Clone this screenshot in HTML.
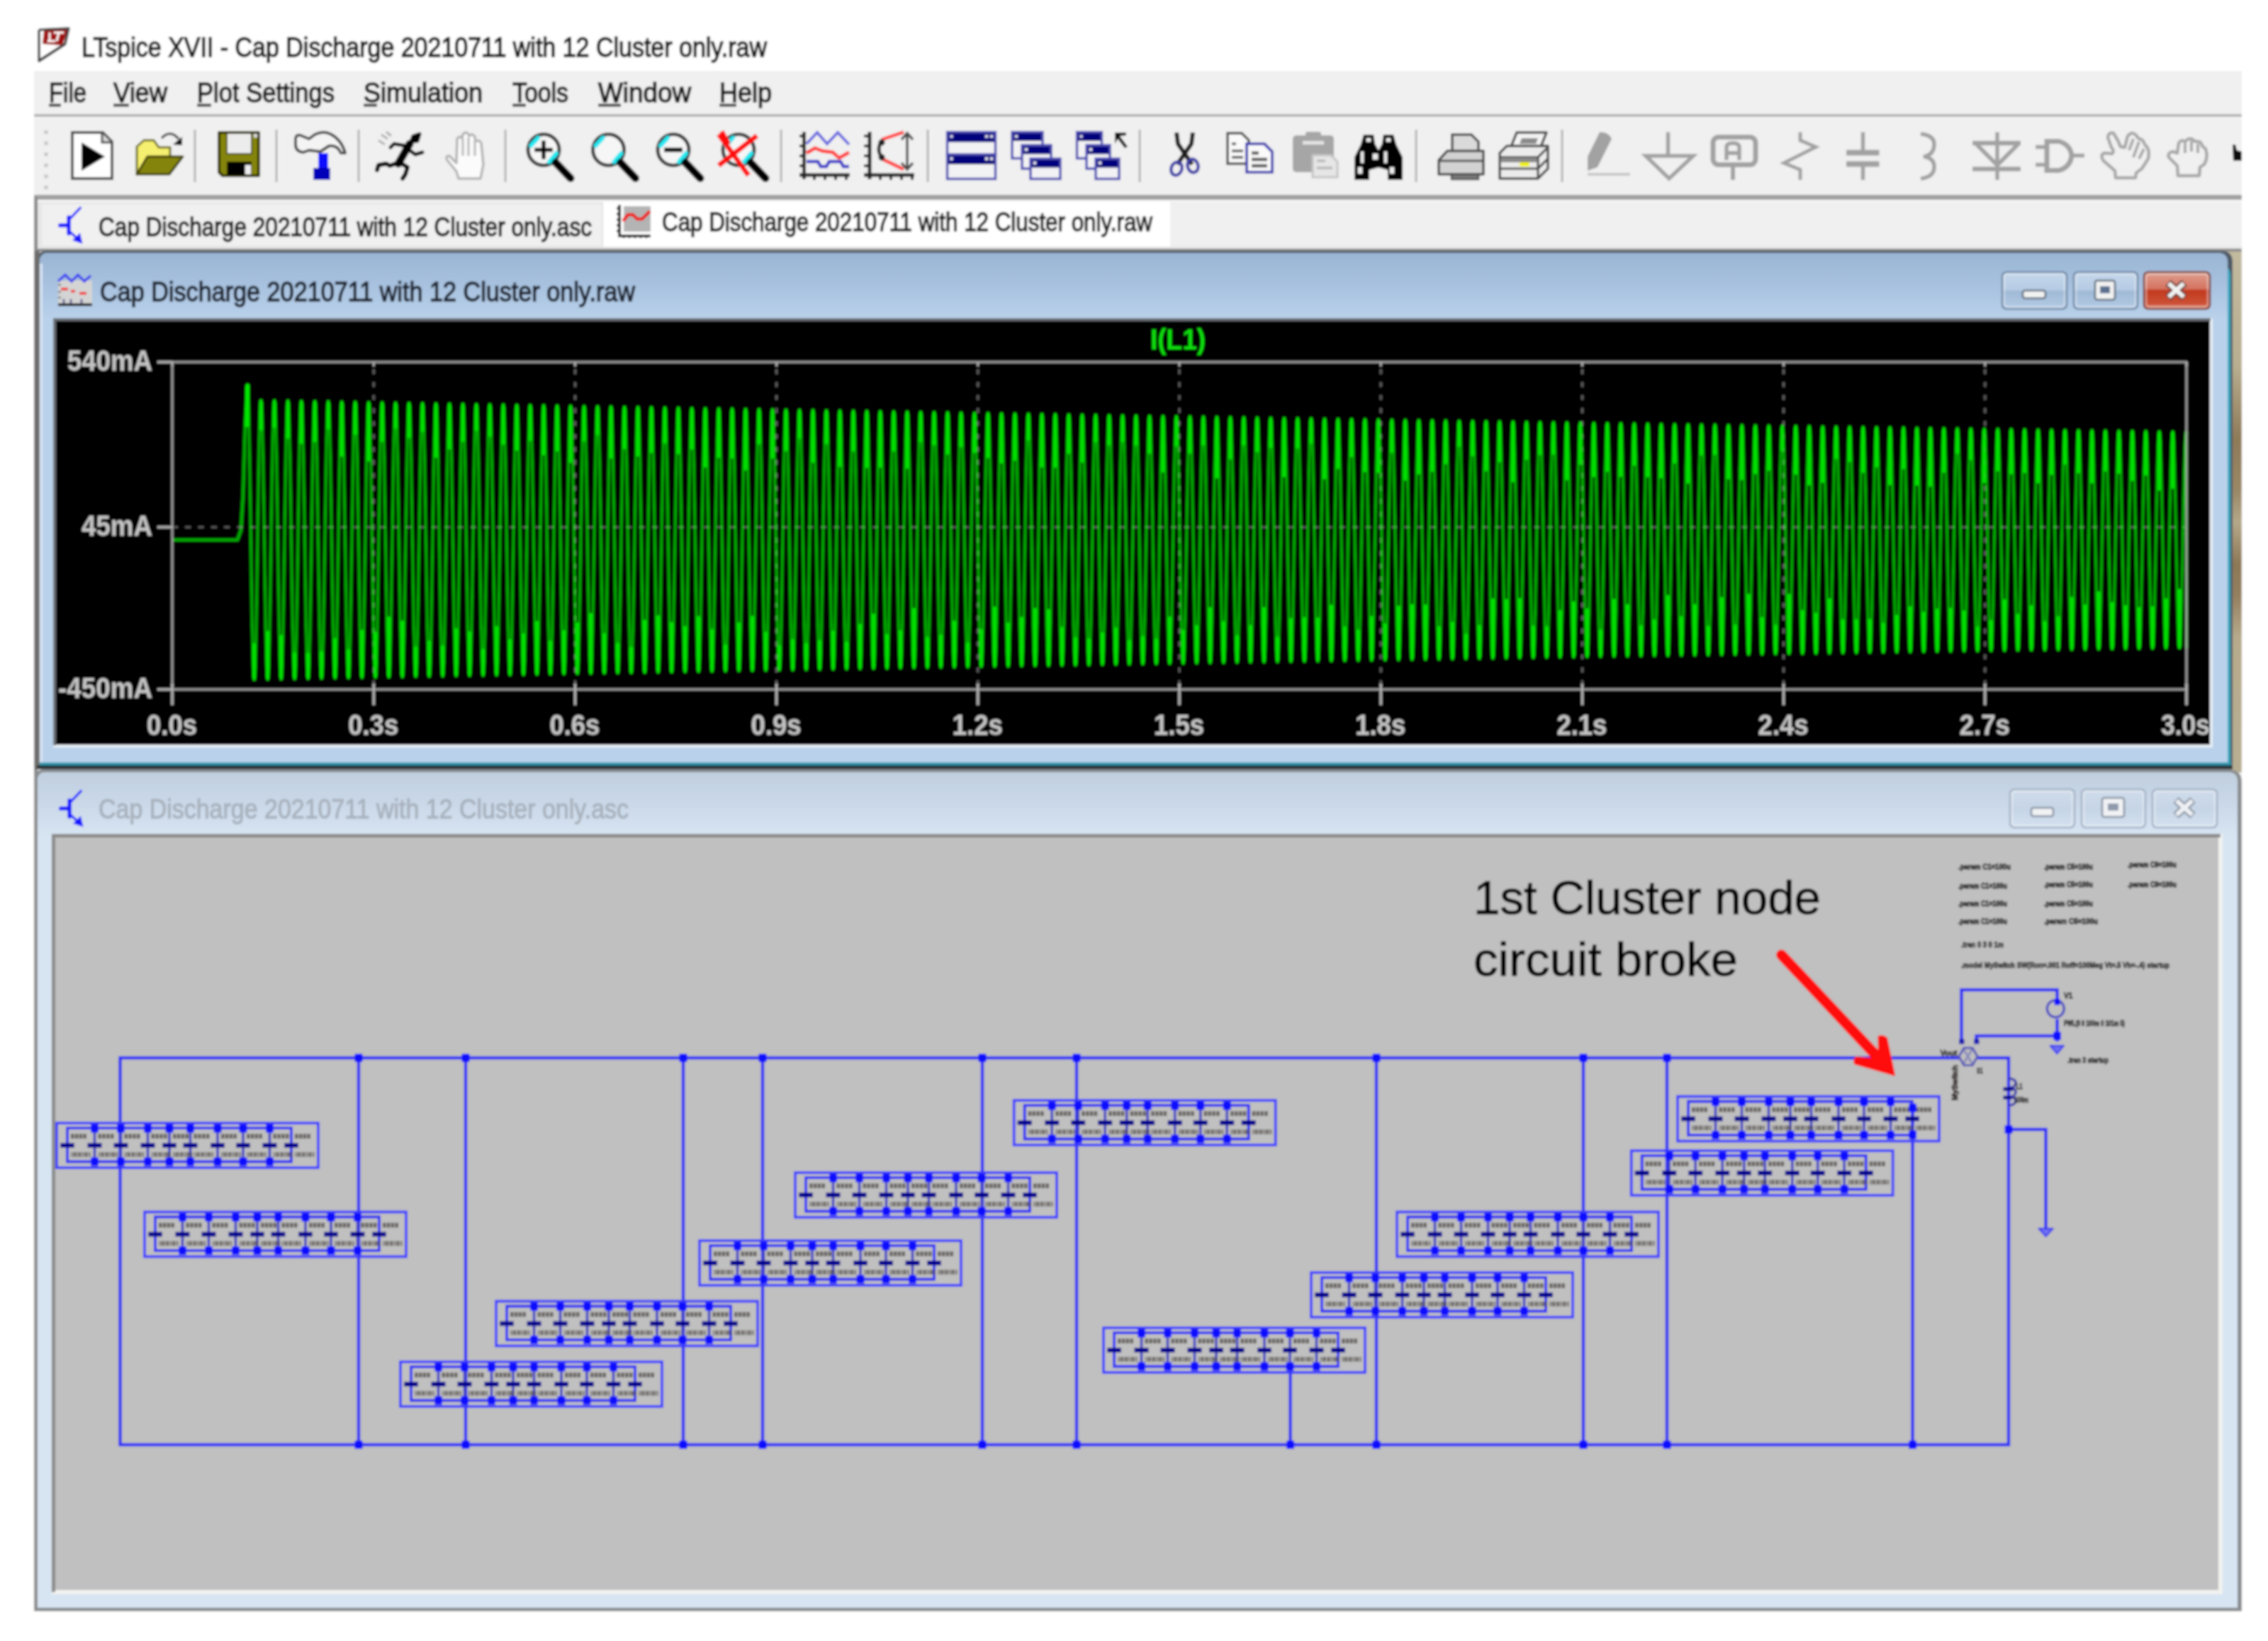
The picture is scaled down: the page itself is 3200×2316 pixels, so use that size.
<!DOCTYPE html>
<html><head><meta charset="utf-8"><title>LTspice XVII</title>
<style>
html,body{margin:0;padding:0;background:#fff;width:3200px;height:2316px;overflow:hidden}
svg{display:block;font-family:"Liberation Sans",sans-serif}
</style></head><body>
<svg width="3200" height="2316" viewBox="0 0 3200 2316" font-family="Liberation Sans, sans-serif">
<defs>
<filter id="bl" x="0" y="0" width="100%" height="100%" filterUnits="userSpaceOnUse"><feGaussianBlur stdDeviation="1.6"/></filter>
<linearGradient id="brown" x1="0" y1="0" x2="0" y2="1"><stop offset="0" stop-color="#c2baa0"/><stop offset="0.22" stop-color="#b8ae90"/><stop offset="0.36" stop-color="#8e7a58"/><stop offset="0.46" stop-color="#9a8866"/><stop offset="0.52" stop-color="#b4a88a"/><stop offset="0.6" stop-color="#8c7856"/><stop offset="0.66" stop-color="#937f5e"/><stop offset="0.74" stop-color="#b6aa8c"/><stop offset="1" stop-color="#b8ae92"/></linearGradient>
<linearGradient id="w1t" x1="0" y1="0" x2="0" y2="1"><stop offset="0" stop-color="#9ab5d3"/><stop offset="0.45" stop-color="#a6c0de"/><stop offset="1" stop-color="#b9d1ea"/></linearGradient>
<linearGradient id="btn" x1="0" y1="0" x2="0" y2="1"><stop offset="0" stop-color="#c4d6ea"/><stop offset="0.48" stop-color="#b6cce4"/><stop offset="0.52" stop-color="#9fb9d6"/><stop offset="1" stop-color="#b4cbe4"/></linearGradient>
<linearGradient id="btnx" x1="0" y1="0" x2="0" y2="1"><stop offset="0" stop-color="#e0a090"/><stop offset="0.45" stop-color="#d47260"/><stop offset="0.5" stop-color="#c2391e"/><stop offset="0.85" stop-color="#cc5034"/><stop offset="1" stop-color="#dc8a70"/></linearGradient>
<linearGradient id="w2t" x1="0" y1="0" x2="0" y2="1"><stop offset="0" stop-color="#c0cfdf"/><stop offset="0.5" stop-color="#cad8e8"/><stop offset="1" stop-color="#d7e4f2"/></linearGradient>
<linearGradient id="btn2" x1="0" y1="0" x2="0" y2="1"><stop offset="0" stop-color="#cfdcea"/><stop offset="0.5" stop-color="#c6d5e6"/><stop offset="1" stop-color="#d3e0ee"/></linearGradient>
</defs>
<g filter="url(#bl)">
<rect x="0" y="0" width="3200" height="2316" fill="#ffffff" />
<rect x="48" y="100" width="3115" height="2173" fill="#f0f0f0" />
<g><path d="M55 42 L55 86 L92 62" fill="#fff" stroke="#555" stroke-width="4" stroke-linejoin="round"/><path d="M62 43 L97 40 L88 64 L60 62 Z" fill="#a01010"/><path d="M70 46 L70 58 M67 58 L78 58 M76 46 L90 46 M83 46 L80 58" stroke="#fff" stroke-width="3" fill="none"/><path d="M55 42 L97 40 L92 62 L55 86" fill="none" stroke="#444" stroke-width="3.5" stroke-linejoin="round"/></g>
<text x="115" y="80" font-size="38" fill="#141414" stroke="#141414" stroke-width="1.5" textLength="967" lengthAdjust="spacingAndGlyphs" >LTspice XVII - Cap Discharge 20210711 with 12 Cluster only.raw</text>
<text x="69" y="144" font-size="38" fill="#141414" stroke="#141414" stroke-width="1.5" textLength="53" lengthAdjust="spacingAndGlyphs" >File</text>
<text x="160" y="144" font-size="38" fill="#141414" stroke="#141414" stroke-width="1.5" textLength="76" lengthAdjust="spacingAndGlyphs" >View</text>
<text x="278" y="144" font-size="38" fill="#141414" stroke="#141414" stroke-width="1.5" textLength="194" lengthAdjust="spacingAndGlyphs" >Plot Settings</text>
<text x="513" y="144" font-size="38" fill="#141414" stroke="#141414" stroke-width="1.5" textLength="168" lengthAdjust="spacingAndGlyphs" >Simulation</text>
<text x="723" y="144" font-size="38" fill="#141414" stroke="#141414" stroke-width="1.5" textLength="79" lengthAdjust="spacingAndGlyphs" >Tools</text>
<text x="844" y="144" font-size="38" fill="#141414" stroke="#141414" stroke-width="1.5" textLength="131" lengthAdjust="spacingAndGlyphs" >Window</text>
<text x="1015" y="144" font-size="38" fill="#141414" stroke="#141414" stroke-width="1.5" textLength="74" lengthAdjust="spacingAndGlyphs" >Help</text>
<rect x="69" y="146.5" width="17" height="4" fill="#3a3a3a" />
<rect x="160" y="146.5" width="22" height="4" fill="#3a3a3a" />
<rect x="278" y="146.5" width="20" height="4" fill="#3a3a3a" />
<rect x="513" y="146.5" width="19" height="4" fill="#3a3a3a" />
<rect x="723" y="146.5" width="19" height="4" fill="#3a3a3a" />
<rect x="844" y="146.5" width="32" height="4" fill="#3a3a3a" />
<rect x="1015" y="146.5" width="24" height="4" fill="#3a3a3a" />
<rect x="48" y="161" width="3115" height="4" fill="#b4b4b4" />
<rect x="48" y="165" width="3115" height="2" fill="#f8f8f8" />
<rect x="48" y="275" width="3115" height="7" fill="#a0a0a0" />
<rect x="48" y="282" width="3115" height="2" fill="#fbfbfb" />
<rect x="62.5" y="184.0" width="5" height="5" fill="#c4c4c4" />
<rect x="62.5" y="199.6" width="5" height="5" fill="#c4c4c4" />
<rect x="62.5" y="215.2" width="5" height="5" fill="#c4c4c4" />
<rect x="62.5" y="230.8" width="5" height="5" fill="#c4c4c4" />
<rect x="62.5" y="246.4" width="5" height="5" fill="#c4c4c4" />
<rect x="62.5" y="262.0" width="5" height="5" fill="#c4c4c4" />
<rect x="273.5" y="183" width="3.5" height="74" fill="#b8b8b8" />
<rect x="277" y="183" width="1.5" height="74" fill="#fafafa" />
<rect x="388.5" y="183" width="3.5" height="74" fill="#b8b8b8" />
<rect x="392" y="183" width="1.5" height="74" fill="#fafafa" />
<rect x="504.5" y="183" width="3.5" height="74" fill="#b8b8b8" />
<rect x="508" y="183" width="1.5" height="74" fill="#fafafa" />
<rect x="711.5" y="183" width="3.5" height="74" fill="#b8b8b8" />
<rect x="715" y="183" width="1.5" height="74" fill="#fafafa" />
<rect x="1100.5" y="183" width="3.5" height="74" fill="#b8b8b8" />
<rect x="1104" y="183" width="1.5" height="74" fill="#fafafa" />
<rect x="1307.5" y="183" width="3.5" height="74" fill="#b8b8b8" />
<rect x="1311" y="183" width="1.5" height="74" fill="#fafafa" />
<rect x="1606.5" y="183" width="3.5" height="74" fill="#b8b8b8" />
<rect x="1610" y="183" width="1.5" height="74" fill="#fafafa" />
<rect x="1996.5" y="183" width="3.5" height="74" fill="#b8b8b8" />
<rect x="2000" y="183" width="1.5" height="74" fill="#fafafa" />
<rect x="2202.5" y="183" width="3.5" height="74" fill="#b8b8b8" />
<rect x="2206" y="183" width="1.5" height="74" fill="#fafafa" />
<rect x="48" y="284" width="3115" height="66" fill="#f0f0f0" />
<rect x="58" y="287" width="792" height="61" fill="#f0f0f0" stroke="#e2e2e2" stroke-width="2"/>
<rect x="851" y="285" width="800" height="63" fill="#ffffff" />
<rect x="48" y="278" width="5" height="1995" fill="#8a8a8a" />
<rect x="53" y="284" width="3" height="70" fill="#e4e4e4" />
<rect x="53" y="348" width="3110" height="3" fill="#e6e6e6" />
<rect x="53" y="351" width="3110" height="4" fill="#8c8c8c" />
<g transform="translate(100,318) scale(0.95)" stroke="#1414ff" fill="none" stroke-linecap="round"><path d="M-16 0 L-4 0" stroke-width="6"/><path d="M-3 -12 L-3 12" stroke-width="6"/><path d="M-3 -8 L14 -26" stroke-width="3.5"/><path d="M-3 8 L14 24" stroke-width="3.5"/><path d="M16 26 L4 22 L13 13 Z" fill="#1414ff" stroke-width="2"/></g>
<text x="139" y="333" font-size="37" fill="#1c1c1c" stroke="#1c1c1c" stroke-width="1.5" textLength="696" lengthAdjust="spacingAndGlyphs" >Cap Discharge 20210711 with 12 Cluster only.asc</text>
<g><rect x="880" y="291" width="38" height="36" fill="#b4b4b4"/><path d="M874 289 L874 333 M872 333 L918 333" stroke="#111" stroke-width="4" fill="none"/><path d="M870 294 h4 M870 302 h4 M870 310 h4 M870 318 h4 M870 326 h4 M880 336 v-3 M888 336 v-3 M896 336 v-3 M904 336 v-3 M912 336 v-3" stroke="#111" stroke-width="3"/><path d="M879 312 L886 303 L893 303 L899 309 L906 309 L917 298" stroke="#f01010" stroke-width="4.5" fill="none"/></g>
<text x="934" y="325.5" font-size="36" fill="#1c1c1c" stroke="#1c1c1c" stroke-width="1.5" textLength="692" lengthAdjust="spacingAndGlyphs" >Cap Discharge 20210711 with 12 Cluster only.raw</text>
<rect x="3140" y="355" width="23" height="735" fill="url(#brown)" />
<path d="M52 1086 L52 368 Q52 354 66 354 L3134 354 Q3150 354 3150 370 L3150 1086 Z" fill="#4e5a66"/>
<path d="M3100 1081 L3100 380 L3132 380 Q3147 372 3147 390 L3147 1081 Z" fill="#35a8c0"/>
<path d="M56 1078 L56 370 Q56 357 68 357 L3130 357 Q3143 357 3143 371 L3143 1078 Z" fill="#b9d1ea"/>
<path d="M56 450 L56 370 Q56 357 68 357 L3130 357 Q3143 357 3143 371 L3143 450 Z" fill="url(#w1t)"/>
<rect x="48" y="354" width="8" height="732" fill="#6e6e6e" />
<rect x="56" y="372" width="4" height="706" fill="#d6e4f4" />
<rect x="56" y="1076" width="3092" height="4" fill="#2a96ae" />
<rect x="52" y="1080" width="3098" height="5" fill="#2c3436" />
<rect x="75" y="449" width="3047" height="606" fill="#e8eef6" />
<rect x="75" y="449" width="3044" height="4" fill="#6a6e74" />
<rect x="75" y="449" width="4" height="603" fill="#6a6e74" />
<rect x="79" y="453" width="3039" height="598" fill="#000000" />
<g><rect x="82" y="396" width="48" height="34" fill="#d4d4d4"/><path d="M82 397 L92 388 L101 397 L110 388 L119 397 L128 389" stroke="#3c3cf0" stroke-width="3.5" fill="none"/><path d="M86 408 h10 M100 411 h6 M112 414 h10" stroke="#f03030" stroke-width="4"/><path d="M82 430 h48" stroke="#111" stroke-width="4"/><path d="M90 422 v6 M100 422 v6 M115 422 v6" stroke="#4a4a8a" stroke-width="2.5"/><path d="M82 402 h4 M82 412 h4 M82 420 h4" stroke="#777" stroke-width="2.5"/></g>
<text x="141" y="425" font-size="38" fill="#1c2430" stroke="#1c2430" stroke-width="1.5" textLength="755" lengthAdjust="spacingAndGlyphs" >Cap Discharge 20210711 with 12 Cluster only.raw</text>
<rect x="2825" y="384" width="91" height="52" rx="6" fill="url(#btn)" stroke="#7088a4" stroke-width="2.5"/>
<rect x="2828" y="387" width="85" height="46" rx="4" fill="none" stroke="#ffffff" stroke-opacity="0.45" stroke-width="2"/>
<rect x="2926" y="384" width="90" height="52" rx="6" fill="url(#btn)" stroke="#7088a4" stroke-width="2.5"/>
<rect x="2929" y="387" width="84" height="46" rx="4" fill="none" stroke="#ffffff" stroke-opacity="0.45" stroke-width="2"/>
<rect x="3025" y="384" width="93" height="52" rx="6" fill="url(#btnx)" stroke="#7a3a34" stroke-width="2.5"/>
<rect x="3028" y="387" width="87" height="46" rx="4" fill="none" stroke="#ffffff" stroke-opacity="0.45" stroke-width="2"/>
<rect x="2854" y="410" width="32" height="11" rx="3" fill="#f2f2f2" stroke="#5a6878" stroke-width="2.5"/>
<rect x="2956" y="396" width="28" height="27" rx="3" fill="#f2f2f2" stroke="#5a6878" stroke-width="2.5"/>
<rect x="2963" y="404" width="14" height="10" fill="#5b7190"/>
<path d="M3059 399 L3082 420 M3082 399 L3059 420" stroke="#6a3a38" stroke-width="11" stroke-linecap="butt"/>
<path d="M3060 400 L3081 419 M3081 400 L3060 419" stroke="#f2f2f2" stroke-width="6.2" stroke-linecap="butt"/>
<path d="M48 2274 L48 1100 Q48 1086 62 1086 L3144 1086 Q3163 1086 3163 1104 L3163 2274 Z" fill="#8a8d90"/>
<path d="M53 2269 L53 1102 Q53 1090 64 1090 L3144 1090 Q3157 1090 3157 1104 L3157 2269 Z" fill="#d7e4f2"/>
<path d="M53 1180 L53 1102 Q53 1090 64 1090 L3144 1090 Q3157 1090 3157 1104 L3157 1180 Z" fill="url(#w2t)"/>
<rect x="48" y="1100" width="5" height="1174" fill="#8c8c8c" />
<rect x="73" y="1177" width="3063" height="1073" fill="#f2f2f0" />
<rect x="73" y="1177" width="3060" height="5" fill="#8a8a8a" />
<rect x="73" y="1177" width="5" height="1070" fill="#8a8a8a" />
<rect x="78" y="1182" width="3052" height="1062" fill="#c0c0c0" />
<g transform="translate(101,1141) scale(0.95)" stroke="#1818ff" fill="none" stroke-linecap="round"><path d="M-16 0 L-4 0" stroke-width="6"/><path d="M-3 -12 L-3 12" stroke-width="6"/><path d="M-3 -8 L14 -26" stroke-width="3.5"/><path d="M-3 8 L14 24" stroke-width="3.5"/><path d="M16 26 L4 22 L13 13 Z" fill="#1818ff" stroke-width="2"/></g>
<text x="139" y="1155" font-size="38" fill="#a9b2be" stroke="#a9b2be" stroke-width="1.1" textLength="748" lengthAdjust="spacingAndGlyphs" >Cap Discharge 20210711 with 12 Cluster only.asc</text>
<rect x="2836" y="1114" width="91" height="54" rx="6" fill="url(#btn2)" stroke="#a4b2c6" stroke-width="2.5"/>
<rect x="2839" y="1117" width="85" height="48" rx="4" fill="none" stroke="#ffffff" stroke-opacity="0.45" stroke-width="2"/>
<rect x="2937" y="1114" width="90" height="54" rx="6" fill="url(#btn2)" stroke="#a4b2c6" stroke-width="2.5"/>
<rect x="2940" y="1117" width="84" height="48" rx="4" fill="none" stroke="#ffffff" stroke-opacity="0.45" stroke-width="2"/>
<rect x="3037" y="1114" width="91" height="54" rx="6" fill="url(#btn2)" stroke="#a4b2c6" stroke-width="2.5"/>
<rect x="3040" y="1117" width="85" height="48" rx="4" fill="none" stroke="#ffffff" stroke-opacity="0.45" stroke-width="2"/>
<rect x="2866" y="1140" width="31" height="12" rx="3" fill="#f0f2f4" stroke="#8490a0" stroke-width="2.5"/>
<rect x="2966" y="1126" width="31" height="27" rx="3" fill="#f0f2f4" stroke="#8490a0" stroke-width="2.5"/>
<rect x="2974" y="1134" width="15" height="10" fill="#8e9aac"/>
<path d="M3070 1129 L3094 1151 M3094 1129 L3070 1151" stroke="#8a94a2" stroke-width="11"/>
<path d="M3071 1130 L3093 1150 M3093 1130 L3071 1150" stroke="#eef0f4" stroke-width="6.2"/>
<path d="M102 187 L145 187 L158 200 L158 252 L102 252 Z" fill="#fff" stroke="#4a4a4a" stroke-width="4" stroke-linejoin="miter"/>
<path d="M144 188 L144 201 L157 201" fill="#d8d8d8" stroke="#4a4a4a" stroke-width="3"/>
<path d="M115 201 L115 241 L148 221 Z" fill="#000"/>
<path d="M193 246 L193 207 L203 198 L217 198 L224 208 L240 208 L240 222 L193 246Z" fill="#f6f070" stroke="#6a6a20" stroke-width="3" stroke-linejoin="round"/>
<path d="M208 221 L258 221 L239 246 L193 246 Z" fill="#84840a" stroke="#3a3a00" stroke-width="3" stroke-linejoin="round"/>
<path d="M228 195 Q240 182 252 196" fill="none" stroke="#555" stroke-width="3.5"/>
<path d="M257 193 L257 205 L244 204 Z" fill="#111"/>
<path d="M309 187 L365 187 L365 248 L314 248 L309 243 Z" fill="#84840a" stroke="#2e2e00" stroke-width="4" stroke-linejoin="round"/>
<rect x="320" y="188" width="35" height="29" fill="#ececec" stroke="#3a3a00" stroke-width="2"/>
<rect x="320" y="228" width="35" height="19" fill="#000" />
<rect x="346" y="233" width="8" height="13" fill="#eee" />
<rect x="358" y="189" width="5" height="5" fill="#ddd" />
<path d="M417 196 Q417 190 424 191 L436 196 L444 190 Q455 184 466 189 Q482 197 487 216 L481 216 Q476 204 464 206 L452 214 L436 212 L428 215 Q417 214 417 204 Z" fill="#f4f4f4" stroke="#4a4a4a" stroke-width="4" stroke-linejoin="round"/>
<rect x="449" y="216" width="14" height="22" fill="#0a0aff" />
<rect x="442" y="237" width="24" height="17" fill="#0000b8" />
<g stroke="#000" fill="none" stroke-linecap="round" stroke-linejoin="round"><path d="M583 192 L592 189 L589 199 L580 200 Z" fill="#000" stroke-width="5"/><path d="M578 203 L562 231" stroke-width="11"/><path d="M574 206 L556 203 L551 208" stroke-width="5"/><path d="M575 210 L586 218 L596 215" stroke-width="5"/><path d="M563 229 L550 234 L545 231 L534 233 L532 240" stroke-width="6"/><path d="M565 230 L575 236 L572 246 L568 252" stroke-width="6"/></g>
<path d="M538 190 l9 6 M534 198 l9 6 M545 186 l7 6" stroke="#b0b0b0" stroke-width="3"/>
<path d="M647 252 L644 242 L631 226 Q628 220 634 220 L644 230 L645 196 Q649 190 652 196 L653 190 Q657 184 661 190 L662 192 Q666 187 670 193 L671 200 Q676 196 679 202 L682 232 L678 252 Z" fill="#fbfbfb" stroke="#b4b4b4" stroke-width="3.5" stroke-linejoin="round"/>
<path d="M653 196 L653 220 M661 194 L661 220 M670 198 L670 220" stroke="#c0c0c0" stroke-width="3.5"/>
<circle cx="767" cy="211.5" r="22" fill="#f6f6f6" stroke="#3c3c3c" stroke-width="5"/>
<path d="M749 205.5 L759 194.5" stroke="#20e8f0" stroke-width="6" stroke-linecap="round"/>
<path d="M775 228.5 L785 216.5" stroke="#20e8f0" stroke-width="6" stroke-linecap="round"/>
<path d="M784 229.5 L805 251.5" stroke="#000" stroke-width="11" stroke-linecap="round"/>
<path d="M754 211.5 h26 M767 198.5 v26" stroke="#000" stroke-width="5.5"/>
<circle cx="858.5" cy="211.5" r="22" fill="#f6f6f6" stroke="#3c3c3c" stroke-width="5"/>
<path d="M840.5 205.5 L850.5 194.5" stroke="#20e8f0" stroke-width="6" stroke-linecap="round"/>
<path d="M866.5 228.5 L876.5 216.5" stroke="#20e8f0" stroke-width="6" stroke-linecap="round"/>
<path d="M875.5 229.5 L896.5 251.5" stroke="#000" stroke-width="11" stroke-linecap="round"/>
<circle cx="950" cy="211.5" r="22" fill="#f6f6f6" stroke="#3c3c3c" stroke-width="5"/>
<path d="M932 205.5 L942 194.5" stroke="#20e8f0" stroke-width="6" stroke-linecap="round"/>
<path d="M958 228.5 L968 216.5" stroke="#20e8f0" stroke-width="6" stroke-linecap="round"/>
<path d="M967 229.5 L988 251.5" stroke="#000" stroke-width="11" stroke-linecap="round"/>
<path d="M937 211.5 h26" stroke="#000" stroke-width="6"/>
<circle cx="1042" cy="211.5" r="22" fill="#f6f6f6" stroke="#3c3c3c" stroke-width="5"/>
<path d="M1024 205.5 L1034 194.5" stroke="#20e8f0" stroke-width="6" stroke-linecap="round"/>
<path d="M1050 228.5 L1060 216.5" stroke="#20e8f0" stroke-width="6" stroke-linecap="round"/>
<path d="M1059 229.5 L1080 251.5" stroke="#000" stroke-width="11" stroke-linecap="round"/>
<path d="M1014 189.5 L1056 247.5 M1068 191.5 L1014 233.5 M1018 185.5 L1028 203.5" stroke="#ff1010" stroke-width="7"/>
<path d="M1134.5 186 L1134.5 253 M1128 247 L1199 247" stroke="#222" stroke-width="5" fill="none"/>
<path d="M1128 192 h6 M1128 206 h6 M1128 220 h6 M1128 234 h6 M1149 247 v7 M1164 247 v7 M1179 247 v7 M1194 247 v7" stroke="#222" stroke-width="4"/>
<path d="M1138 203 L1153 187 L1167 203 L1182 187 L1198 204" stroke="#6868e0" stroke-width="4" fill="none"/>
<path d="M1138 216 L1150 209 L1160 213 L1175 215 L1184 223 L1198 215" stroke="#ff4040" stroke-width="5" fill="none"/>
<path d="M1138 228 L1154 228 L1158 235 L1166 235 L1170 228 L1186 228 L1190 235 L1198 235" stroke="#3838c8" stroke-width="4.5" fill="none"/>
<path d="M1227 186 L1227 253 M1219 247 L1290 247" stroke="#222" stroke-width="5" fill="none"/>
<path d="M1219 192 h8 M1219 206 h8 M1219 220 h8 M1219 234 h8 M1242 247 v7 M1257 247 v7 M1272 247 v7 M1287 247 v7" stroke="#222" stroke-width="4"/>
<path d="M1244 197 L1275 186.5 M1244 224 L1275 239" stroke="#ff4848" stroke-width="5" fill="none"/>
<path d="M1244 199 Q1236 211 1244 222" stroke="#333" stroke-width="5" fill="none"/>
<circle cx="1244" cy="201" r="4.5" fill="#222"/><circle cx="1244" cy="222" r="4.5" fill="#222"/>
<path d="M1280 190 L1280 237 M1272 197 L1280 188 L1288 197 M1272 230 L1280 239 L1288 230" stroke="#4a4a4a" stroke-width="3.5" fill="none"/>
<rect x="1336.5" y="186.5" width="68" height="32" fill="#f2f2f4" stroke="#4a4ab4" stroke-width="3.4"/>
<rect x="1338.0" y="188.0" width="65" height="12.5" fill="#00007c"/>
<rect x="1340.5" y="190.5" width="4" height="4" fill="#e0e0f0"/>
<rect x="1336.5" y="218" width="68" height="34.5" fill="#f2f2f4" stroke="#4a4ab4" stroke-width="3.4"/>
<rect x="1338.0" y="219.5" width="65" height="12.5" fill="#00007c"/>
<rect x="1340.5" y="222" width="4" height="4" fill="#e0e0f0"/>
<rect x="1390" y="190.5" width="4" height="4" fill="#e0e0f0" />
<rect x="1397" y="190.5" width="4" height="4" fill="#e0e0f0" />
<rect x="1390" y="222" width="4" height="4" fill="#e0e0f0" />
<rect x="1397" y="222" width="4" height="4" fill="#e0e0f0" />
<rect x="1428" y="186.5" width="43" height="37" fill="#f2f2f4" stroke="#4a4ab4" stroke-width="3.4"/>
<rect x="1429.5" y="188.0" width="40" height="11" fill="#00007c"/>
<rect x="1432" y="190.5" width="4" height="4" fill="#e0e0f0"/>
<rect x="1442" y="205" width="41" height="33" fill="#f2f2f4" stroke="#4a4ab4" stroke-width="3.4"/>
<rect x="1443.5" y="206.5" width="38" height="11" fill="#00007c"/>
<rect x="1446" y="209" width="4" height="4" fill="#e0e0f0"/>
<rect x="1454" y="224" width="42" height="28.5" fill="#f2f2f4" stroke="#4a4ab4" stroke-width="3.4"/>
<rect x="1455.5" y="225.5" width="39" height="11" fill="#00007c"/>
<rect x="1458" y="228" width="4" height="4" fill="#e0e0f0"/>
<rect x="1519.5" y="186.5" width="35" height="37" fill="#f2f2f4" stroke="#4a4ab4" stroke-width="3.4"/>
<rect x="1521.0" y="188.0" width="32" height="11" fill="#00007c"/>
<rect x="1523.5" y="190.5" width="4" height="4" fill="#e0e0f0"/>
<rect x="1533" y="205" width="33" height="33" fill="#f2f2f4" stroke="#4a4ab4" stroke-width="3.4"/>
<rect x="1534.5" y="206.5" width="30" height="11" fill="#00007c"/>
<rect x="1537" y="209" width="4" height="4" fill="#e0e0f0"/>
<rect x="1546" y="224" width="33" height="28.5" fill="#f2f2f4" stroke="#4a4ab4" stroke-width="3.4"/>
<rect x="1547.5" y="225.5" width="30" height="11" fill="#00007c"/>
<rect x="1550" y="228" width="4" height="4" fill="#e0e0f0"/>
<path d="M1573 187 L1589 187 L1589 191 L1580 192 L1591 207 L1587 209 L1577 196 L1573 203 Z" fill="#111"/>
<path d="M1660 187 L1662 203 L1682 232 M1683 187 L1681 203 L1661 232" stroke="#1a1a1a" stroke-width="6" fill="none" stroke-linejoin="round"/>
<ellipse cx="1660" cy="238" rx="7.5" ry="9.5" fill="none" stroke="#3c3ca8" stroke-width="4.5" transform="rotate(20 1660 238)"/>
<ellipse cx="1683" cy="234" rx="7.5" ry="9.5" fill="none" stroke="#3c3ca8" stroke-width="4.5" transform="rotate(-15 1683 234)"/>
<path d="M1732 188 L1752 188 L1762 198 L1762 231 L1732 231 Z" fill="#fafafa" stroke="#4a4a4a" stroke-width="3.5"/>
<path d="M1738 203 h6 M1738 213 h16 M1738 222 h16" stroke="#666" stroke-width="4"/>
<path d="M1759 203 L1784 203 L1795 214 L1795 243 L1759 243 Z" fill="#fafafa" stroke="#3c3cb4" stroke-width="4"/>
<path d="M1766 216 h10 M1766 225 h22 M1766 234 h22" stroke="#555" stroke-width="4.5"/>
<rect x="1824" y="191" width="58" height="52" rx="5" fill="#a6a6a6"/>
<rect x="1842" y="186" width="22" height="9" rx="3" fill="#a6a6a6"/>
<rect x="1838" y="199" width="30" height="5" fill="#e4e4e4" />
<path d="M1852 219 L1878 219 L1887 228 L1887 250 L1852 250 Z" fill="#e6e6e6" stroke="#c4c4c4" stroke-width="3"/>
<path d="M1858 227 h12 M1858 237 h22" stroke="#bcbcbc" stroke-width="4"/>
<g fill="#000"><path d="M1924 190 L1938 190 L1940 203 L1946 214 L1946 236 L1932 240 L1932 254 L1911 254 L1911 222 L1920 204 Z"/><path d="M1966 190 L1952 190 L1950 203 L1944 214 L1944 236 L1958 240 L1958 254 L1979 254 L1979 222 L1970 204 Z"/></g>
<g fill="#ececec"><rect x="1928" y="195" width="6" height="5"/><rect x="1956" y="195" width="6" height="5"/><rect x="1920" y="214" width="4" height="16"/><rect x="1953" y="214" width="4" height="16"/><rect x="1937" y="217" width="7" height="8"/><rect x="1916" y="236" width="6" height="9"/><rect x="1961" y="236" width="6" height="9"/></g>
<path d="M2049 215 L2049 190 L2076 190 L2086 200 L2086 215" fill="#dadada" stroke="#4a4a4a" stroke-width="3.5"/>
<path d="M2030 246 L2030 226 L2042 213 L2093 213 L2093 246 Z" fill="#d2d2d2" stroke="#4a4a4a" stroke-width="3.5" stroke-linejoin="round"/>
<path d="M2031 227 L2093 227" stroke="#4a4a4a" stroke-width="3"/>
<rect x="2048" y="246" width="38" height="7" fill="#7c7c7c" stroke="#4a4a4a" stroke-width="2.5"/>
<path d="M2132 207 L2140 187 L2182 187 L2174 207 Z" fill="#f4f4f4" stroke="#4a4a4a" stroke-width="3.5" stroke-linejoin="round"/>
<path d="M2147 195 L2170 195 L2167 203 L2144 203 Z" fill="#8a8a8a"/>
<path d="M2116 252 L2116 216 L2126 206 L2184 206 L2184 238 L2170 252 Z" fill="#ececec" stroke="#4a4a4a" stroke-width="3.5" stroke-linejoin="round"/>
<path d="M2116 222 L2170 222 L2184 208 M2170 222 L2170 252 M2116 238 L2170 238 L2184 224" stroke="#4a4a4a" stroke-width="3.2" fill="none"/>
<rect x="2117" y="224" width="52" height="5" fill="#888" />
<rect x="2144" y="229" width="14" height="6" fill="#f0f000" />
<path d="M2257 186.5 Q2270 186 2274 196 L2254 236 L2240 241 L2240 221 Z" fill="#a2a2a2"/>
<path d="M2240 246 L2300 246" stroke="#c8c8c8" stroke-width="4"/>
<path d="M2353.5 186.5 L2353.5 219 M2322 220 L2389 220 L2355 252 Z" fill="none" stroke="#a2a2a2" stroke-width="5.5" stroke-linejoin="miter"/>
<rect x="2417" y="193.5" width="60" height="39" rx="8" fill="none" stroke="#a2a2a2" stroke-width="7"/>
<path d="M2445 235 L2445 254" stroke="#a2a2a2" stroke-width="6"/>
<path d="M2436 226 L2436 208 Q2436 202 2445 202 Q2454 202 2454 208 L2454 226 M2436 216 L2454 216" fill="none" stroke="#a2a2a2" stroke-width="5.5"/>
<path d="M2540 186.5 L2540 198 L2562 207.5 L2517 230 L2540 239.5 L2540 254" fill="none" stroke="#a2a2a2" stroke-width="5" stroke-linejoin="miter"/>
<path d="M2628.5 186.5 L2628.5 212 M2628.5 235 L2628.5 254" stroke="#a2a2a2" stroke-width="5.5"/>
<rect x="2605" y="211.5" width="46.5" height="8" fill="#a2a2a2" />
<rect x="2605" y="227.5" width="46.5" height="8" fill="#a2a2a2" />
<path d="M2710 189 Q2730 191 2729 205 Q2728 219 2714 221 Q2730 223 2729 237 Q2728 250 2710 252" fill="none" stroke="#a2a2a2" stroke-width="5.5"/>
<path d="M2818 186.5 L2818 254" stroke="#a2a2a2" stroke-width="5.5"/>
<path d="M2783 202 L2851 202 M2783 238.5 L2851 238.5" stroke="#a2a2a2" stroke-width="6.5"/>
<path d="M2789 204 L2818 233 L2847 204" fill="none" stroke="#a2a2a2" stroke-width="6"/>
<path d="M2888 199.5 L2905 199.5 Q2921 204 2923 219.5 Q2921 236 2905 240.5 L2888 240.5 Z" fill="none" stroke="#a2a2a2" stroke-width="7"/>
<path d="M2872 207.5 L2885 207.5 M2872 232.5 L2885 232.5 M2925 219.5 L2941 219.5" stroke="#a2a2a2" stroke-width="5.5"/>
<path d="M2985 251 L2984 241 L2968 227 Q2962 218 2970 216 L2980 217 Q2984 213 2979 208 L2974 194 Q2975 186 2982 188 L2988 198 L2992 207 L2998 208 L3002 192 Q3008 185 3013 190 L3018 196 Q3024 196 3026 204 Q3034 210 3031 224 L3022 238 L3014 244 L3013 251 Z" fill="none" stroke="#a8a8a8" stroke-width="4.5" stroke-linejoin="round"/>
<path d="M3010 196 L3004 212 M3018 200 L3010 222 M3025 210 L3018 224" stroke="#a8a8a8" stroke-width="4"/>
<path d="M3073 248 L3072 234 L3060 222 Q3058 215 3066 214 L3072 216 L3074 202 Q3078 196 3083 200 L3086 197 Q3092 194 3096 199 L3100 200 Q3106 199 3107 206 L3112 210 Q3116 222 3110 232 L3104 236 L3103 248 Z" fill="none" stroke="#a8a8a8" stroke-width="4.5" stroke-linejoin="round"/>
<path d="M3083 202 L3083 216 M3092 199 L3092 214 M3101 203 L3101 216" stroke="#a8a8a8" stroke-width="4"/>
<path d="M3150 204 L3154 204 L3156 212 L3163 214 L3163 227 L3151 227 Z" fill="#111"/>
<text x="1662" y="493" font-size="40" fill="#10e010" font-weight="bold" text-anchor="middle" textLength="78" lengthAdjust="spacingAndGlyphs" >I(L1)</text>
<path d="M243.0 762.0 L335.0 762.0 L340.0 748.0 L343.0 700.0 L346.0 600.0 L349.2 543.0" fill="none" stroke="#00a800" stroke-width="4.6" stroke-linejoin="round"/>
<line x1="527.2" y1="521" x2="527.2" y2="973" stroke="#8c8c8c" stroke-width="3.2" stroke-dasharray="7 11.3" stroke-opacity="0.58"/>
<line x1="811.4" y1="521" x2="811.4" y2="973" stroke="#8c8c8c" stroke-width="3.2" stroke-dasharray="7 11.3" stroke-opacity="0.58"/>
<line x1="1095.6" y1="521" x2="1095.6" y2="973" stroke="#8c8c8c" stroke-width="3.2" stroke-dasharray="7 11.3" stroke-opacity="0.58"/>
<line x1="1379.8" y1="521" x2="1379.8" y2="973" stroke="#8c8c8c" stroke-width="3.2" stroke-dasharray="7 11.3" stroke-opacity="0.58"/>
<line x1="1664.0" y1="521" x2="1664.0" y2="973" stroke="#8c8c8c" stroke-width="3.2" stroke-dasharray="7 11.3" stroke-opacity="0.58"/>
<line x1="1948.2" y1="521" x2="1948.2" y2="973" stroke="#8c8c8c" stroke-width="3.2" stroke-dasharray="7 11.3" stroke-opacity="0.58"/>
<line x1="2232.4" y1="521" x2="2232.4" y2="973" stroke="#8c8c8c" stroke-width="3.2" stroke-dasharray="7 11.3" stroke-opacity="0.58"/>
<line x1="2516.6" y1="521" x2="2516.6" y2="973" stroke="#8c8c8c" stroke-width="3.2" stroke-dasharray="7 11.3" stroke-opacity="0.58"/>
<line x1="2800.8" y1="521" x2="2800.8" y2="973" stroke="#8c8c8c" stroke-width="3.2" stroke-dasharray="7 11.3" stroke-opacity="0.58"/>
<line x1="243" y1="744" x2="3085" y2="744" stroke="#8c8c8c" stroke-width="3.2" stroke-dasharray="8 10.3" stroke-opacity="0.58"/>
<path d="M349.2 543.0 L350.6 570.0 L351.9 639.2 L353.3 718.2 L354.6 805.8 L356.0 884.7 L357.3 939.4 L358.7 958.8 M368.2 565.4 L369.6 584.9 L370.9 639.4 L372.3 718.3 L373.6 805.7 L375.0 884.5 L376.3 939.0 L377.7 958.5 M387.2 565.7 L388.5 585.2 L389.9 639.6 L391.3 718.3 L392.6 805.7 L394.0 884.3 L395.3 938.7 L396.7 958.1 M406.2 566.1 L407.5 585.5 L408.9 639.9 L410.3 718.4 L411.6 805.6 L413.0 884.1 L414.3 938.4 L415.7 957.8 M425.2 566.4 L426.5 585.8 L427.9 640.1 L429.3 718.5 L430.6 805.5 L432.0 883.9 L433.3 938.1 L434.7 957.4 M444.2 566.8 L445.5 586.1 L446.9 640.3 L448.2 718.6 L449.6 805.4 L451.0 883.6 L452.3 937.8 L453.7 957.1 M463.2 567.1 L464.5 586.4 L465.9 640.5 L467.2 718.7 L468.6 805.3 L470.0 883.4 L471.3 937.5 L472.7 956.7 M482.2 567.5 L483.5 586.8 L484.9 640.7 L486.2 718.7 L487.6 805.3 L489.0 883.2 L490.3 937.1 L491.7 956.4 M501.2 567.8 L502.5 587.1 L503.9 641.0 L505.2 718.8 L506.6 805.2 L508.0 883.0 L509.3 936.8 L510.7 956.0 M520.2 568.2 L521.5 587.4 L522.9 641.2 L524.2 718.9 L525.6 805.1 L526.9 882.8 L528.3 936.5 L529.7 955.7 M539.2 568.5 L540.5 587.7 L541.9 641.4 L543.2 719.0 L544.6 805.0 L545.9 882.6 L547.3 936.2 L548.7 955.3 M558.2 568.9 L559.5 588.0 L560.9 641.6 L562.2 719.0 L563.6 805.0 L564.9 882.3 L566.3 935.9 L567.7 955.0 M577.1 569.2 L578.5 588.3 L579.9 641.8 L581.2 719.1 L582.6 804.9 L583.9 882.1 L585.3 935.6 L586.6 954.6 M596.1 569.6 L597.5 588.6 L598.9 642.0 L600.2 719.2 L601.6 804.8 L602.9 881.9 L604.3 935.3 L605.6 954.3 M615.1 569.9 L616.5 588.9 L617.9 642.3 L619.2 719.3 L620.6 804.7 L621.9 881.7 L623.3 934.9 L624.6 953.9 M634.1 570.2 L635.5 589.3 L636.9 642.5 L638.2 719.3 L639.6 804.6 L640.9 881.5 L642.3 934.6 L643.6 953.6 M653.1 570.6 L654.5 589.6 L655.8 642.7 L657.2 719.4 L658.6 804.6 L659.9 881.3 L661.3 934.3 L662.6 953.2 M672.1 570.9 L673.5 589.9 L674.8 642.9 L676.2 719.5 L677.6 804.5 L678.9 881.1 L680.3 934.0 L681.6 952.9 M691.1 571.3 L692.5 590.2 L693.8 643.1 L695.2 719.6 L696.6 804.4 L697.9 880.8 L699.3 933.7 L700.6 952.6 M710.1 571.6 L711.5 590.5 L712.8 643.3 L714.2 719.7 L715.5 804.3 L716.9 880.6 L718.3 933.4 L719.6 952.2 M729.1 572.0 L730.5 590.8 L731.8 643.5 L733.2 719.7 L734.5 804.3 L735.9 880.4 L737.3 933.1 L738.6 951.9 M748.1 572.3 L749.5 591.1 L750.8 643.8 L752.2 719.8 L753.5 804.2 L754.9 880.2 L756.3 932.8 L757.6 951.5 M767.1 572.6 L768.5 591.4 L769.8 644.0 L771.2 719.9 L772.5 804.1 L773.9 880.0 L775.2 932.5 L776.6 951.2 M786.1 573.0 L787.5 591.7 L788.8 644.2 L790.2 720.0 L791.5 804.0 L792.9 879.8 L794.2 932.2 L795.6 950.8 M805.1 573.3 L806.5 592.0 L807.8 644.4 L809.2 720.0 L810.5 804.0 L811.9 879.6 L813.2 931.9 L814.6 950.5 M824.1 573.7 L825.5 592.3 L826.8 644.6 L828.2 720.1 L829.5 803.9 L830.9 879.4 L832.2 931.6 L833.6 950.2 M843.1 574.0 L844.4 592.6 L845.8 644.8 L847.2 720.2 L848.5 803.8 L849.9 879.1 L851.2 931.3 L852.6 949.8 M862.1 574.3 L863.4 592.9 L864.8 645.0 L866.2 720.3 L867.5 803.7 L868.9 878.9 L870.2 930.9 L871.6 949.5 M881.1 574.7 L882.4 593.2 L883.8 645.2 L885.2 720.3 L886.5 803.7 L887.9 878.7 L889.2 930.6 L890.6 949.2 M900.1 575.0 L901.4 593.6 L902.8 645.4 L904.1 720.4 L905.5 803.6 L906.9 878.5 L908.2 930.3 L909.6 948.8 M919.1 575.3 L920.4 593.9 L921.8 645.7 L923.1 720.5 L924.5 803.5 L925.9 878.3 L927.2 930.0 L928.6 948.5 M938.1 575.7 L939.4 594.2 L940.8 645.9 L942.1 720.6 L943.5 803.4 L944.9 878.1 L946.2 929.7 L947.6 948.2 M957.1 576.0 L958.4 594.5 L959.8 646.1 L961.1 720.6 L962.5 803.4 L963.8 877.9 L965.2 929.4 L966.6 947.8 M976.1 576.4 L977.4 594.8 L978.8 646.3 L980.1 720.7 L981.5 803.3 L982.8 877.7 L984.2 929.1 L985.6 947.5 M995.1 576.7 L996.4 595.1 L997.8 646.5 L999.1 720.8 L1000.5 803.2 L1001.8 877.5 L1003.2 928.8 L1004.6 947.1 M1014.1 577.0 L1015.4 595.4 L1016.8 646.7 L1018.1 720.9 L1019.5 803.1 L1020.8 877.3 L1022.2 928.5 L1023.6 946.8 M1033.0 577.3 L1034.4 595.7 L1035.8 646.9 L1037.1 720.9 L1038.5 803.1 L1039.8 877.1 L1041.2 928.2 L1042.5 946.5 M1052.0 577.7 L1053.4 596.0 L1054.8 647.1 L1056.1 721.0 L1057.5 803.0 L1058.8 876.8 L1060.2 927.9 L1061.5 946.2 M1071.0 578.0 L1072.4 596.3 L1073.8 647.3 L1075.1 721.1 L1076.5 802.9 L1077.8 876.6 L1079.2 927.6 L1080.5 945.8 M1090.0 578.3 L1091.4 596.6 L1092.8 647.5 L1094.1 721.1 L1095.5 802.8 L1096.8 876.4 L1098.2 927.3 L1099.5 945.5 M1109.0 578.7 L1110.4 596.8 L1111.7 647.7 L1113.1 721.2 L1114.5 802.8 L1115.8 876.2 L1117.2 927.0 L1118.5 945.2 M1128.0 579.0 L1129.4 597.1 L1130.7 647.9 L1132.1 721.3 L1133.5 802.7 L1134.8 876.0 L1136.2 926.7 L1137.5 944.8 M1147.0 579.3 L1148.4 597.4 L1149.7 648.1 L1151.1 721.4 L1152.5 802.6 L1153.8 875.8 L1155.2 926.5 L1156.5 944.5 M1166.0 579.7 L1167.4 597.7 L1168.7 648.3 L1170.1 721.4 L1171.4 802.6 L1172.8 875.6 L1174.2 926.2 L1175.5 944.2 M1185.0 580.0 L1186.4 598.0 L1187.7 648.5 L1189.1 721.5 L1190.4 802.5 L1191.8 875.4 L1193.2 925.9 L1194.5 943.8 M1204.0 580.3 L1205.4 598.3 L1206.7 648.7 L1208.1 721.6 L1209.4 802.4 L1210.8 875.2 L1212.2 925.6 L1213.5 943.5 M1223.0 580.6 L1224.4 598.6 L1225.7 649.0 L1227.1 721.7 L1228.4 802.3 L1229.8 875.0 L1231.1 925.3 L1232.5 943.2 M1242.0 581.0 L1243.4 598.9 L1244.7 649.2 L1246.1 721.7 L1247.4 802.3 L1248.8 874.8 L1250.1 925.0 L1251.5 942.9 M1261.0 581.3 L1262.4 599.2 L1263.7 649.4 L1265.1 721.8 L1266.4 802.2 L1267.8 874.6 L1269.1 924.7 L1270.5 942.5 M1280.0 581.6 L1281.4 599.5 L1282.7 649.6 L1284.1 721.9 L1285.4 802.1 L1286.8 874.4 L1288.1 924.4 L1289.5 942.2 M1299.0 581.9 L1300.3 599.8 L1301.7 649.8 L1303.1 721.9 L1304.4 802.0 L1305.8 874.2 L1307.1 924.1 L1308.5 941.9 M1318.0 582.3 L1319.3 600.1 L1320.7 650.0 L1322.1 722.0 L1323.4 802.0 L1324.8 874.0 L1326.1 923.8 L1327.5 941.6 M1337.0 582.6 L1338.3 600.4 L1339.7 650.2 L1341.1 722.1 L1342.4 801.9 L1343.8 873.8 L1345.1 923.5 L1346.5 941.3 M1356.0 582.9 L1357.3 600.7 L1358.7 650.4 L1360.0 722.2 L1361.4 801.8 L1362.8 873.6 L1364.1 923.2 L1365.5 940.9 M1375.0 583.2 L1376.3 601.0 L1377.7 650.6 L1379.0 722.2 L1380.4 801.8 L1381.8 873.4 L1383.1 922.9 L1384.5 940.6 M1394.0 583.6 L1395.3 601.2 L1396.7 650.8 L1398.0 722.3 L1399.4 801.7 L1400.8 873.2 L1402.1 922.7 L1403.5 940.3 M1413.0 583.9 L1414.3 601.5 L1415.7 651.0 L1417.0 722.4 L1418.4 801.6 L1419.7 873.0 L1421.1 922.4 L1422.5 940.0 M1432.0 584.2 L1433.3 601.8 L1434.7 651.2 L1436.0 722.4 L1437.4 801.5 L1438.7 872.8 L1440.1 922.1 L1441.5 939.6 M1451.0 584.5 L1452.3 602.1 L1453.7 651.4 L1455.0 722.5 L1456.4 801.5 L1457.7 872.6 L1459.1 921.8 L1460.5 939.3 M1470.0 584.8 L1471.3 602.4 L1472.7 651.6 L1474.0 722.6 L1475.4 801.4 L1476.7 872.4 L1478.1 921.5 L1479.5 939.0 M1488.9 585.1 L1490.3 602.7 L1491.7 651.8 L1493.0 722.7 L1494.4 801.3 L1495.7 872.2 L1497.1 921.2 L1498.4 938.7 M1507.9 585.5 L1509.3 603.0 L1510.7 652.0 L1512.0 722.7 L1513.4 801.3 L1514.7 872.0 L1516.1 920.9 L1517.4 938.4 M1526.9 585.8 L1528.3 603.3 L1529.7 652.2 L1531.0 722.8 L1532.4 801.2 L1533.7 871.8 L1535.1 920.6 L1536.4 938.1 M1545.9 586.1 L1547.3 603.5 L1548.6 652.4 L1550.0 722.9 L1551.4 801.1 L1552.7 871.6 L1554.1 920.4 L1555.4 937.7 M1564.9 586.4 L1566.3 603.8 L1567.6 652.6 L1569.0 722.9 L1570.4 801.1 L1571.7 871.4 L1573.1 920.1 L1574.4 937.4 M1583.9 586.7 L1585.3 604.1 L1586.6 652.8 L1588.0 723.0 L1589.4 801.0 L1590.7 871.2 L1592.1 919.8 L1593.4 937.1 M1602.9 587.0 L1604.3 604.4 L1605.6 652.9 L1607.0 723.1 L1608.4 800.9 L1609.7 871.0 L1611.1 919.5 L1612.4 936.8 M1621.9 587.4 L1623.3 604.7 L1624.6 653.1 L1626.0 723.2 L1627.3 800.8 L1628.7 870.8 L1630.1 919.2 L1631.4 936.5 M1640.9 587.7 L1642.3 605.0 L1643.6 653.3 L1645.0 723.2 L1646.3 800.8 L1647.7 870.6 L1649.1 918.9 L1650.4 936.2 M1659.9 588.0 L1661.3 605.2 L1662.6 653.5 L1664.0 723.3 L1665.3 800.7 L1666.7 870.4 L1668.1 918.7 L1669.4 935.9 M1678.9 588.3 L1680.3 605.5 L1681.6 653.7 L1683.0 723.4 L1684.3 800.6 L1685.7 870.2 L1687.0 918.4 L1688.4 935.5 M1697.9 588.6 L1699.3 605.8 L1700.6 653.9 L1702.0 723.4 L1703.3 800.6 L1704.7 870.0 L1706.0 918.1 L1707.4 935.2 M1716.9 588.9 L1718.3 606.1 L1719.6 654.1 L1721.0 723.5 L1722.3 800.5 L1723.7 869.8 L1725.0 917.8 L1726.4 934.9 M1735.9 589.2 L1737.3 606.4 L1738.6 654.3 L1740.0 723.6 L1741.3 800.4 L1742.7 869.6 L1744.0 917.5 L1745.4 934.6 M1754.9 589.5 L1756.2 606.6 L1757.6 654.5 L1759.0 723.6 L1760.3 800.4 L1761.7 869.5 L1763.0 917.3 L1764.4 934.3 M1773.9 589.9 L1775.2 606.9 L1776.6 654.7 L1778.0 723.7 L1779.3 800.3 L1780.7 869.3 L1782.0 917.0 L1783.4 934.0 M1792.9 590.2 L1794.2 607.2 L1795.6 654.9 L1797.0 723.8 L1798.3 800.2 L1799.7 869.1 L1801.0 916.7 L1802.4 933.7 M1811.9 590.5 L1813.2 607.5 L1814.6 655.1 L1815.9 723.8 L1817.3 800.1 L1818.7 868.9 L1820.0 916.4 L1821.4 933.4 M1830.9 590.8 L1832.2 607.8 L1833.6 655.3 L1834.9 723.9 L1836.3 800.1 L1837.7 868.7 L1839.0 916.1 L1840.4 933.1 M1849.9 591.1 L1851.2 608.0 L1852.6 655.5 L1853.9 724.0 L1855.3 800.0 L1856.7 868.5 L1858.0 915.9 L1859.4 932.8 M1868.9 591.4 L1870.2 608.3 L1871.6 655.7 L1872.9 724.1 L1874.3 799.9 L1875.6 868.3 L1877.0 915.6 L1878.4 932.4 M1887.9 591.7 L1889.2 608.6 L1890.6 655.8 L1891.9 724.1 L1893.3 799.9 L1894.6 868.1 L1896.0 915.3 L1897.4 932.1 M1906.9 592.0 L1908.2 608.9 L1909.6 656.0 L1910.9 724.2 L1912.3 799.8 L1913.6 867.9 L1915.0 915.0 L1916.4 931.8 M1925.9 592.3 L1927.2 609.1 L1928.6 656.2 L1929.9 724.3 L1931.3 799.7 L1932.6 867.7 L1934.0 914.8 L1935.3 931.5 M1944.8 592.6 L1946.2 609.4 L1947.6 656.4 L1948.9 724.3 L1950.3 799.7 L1951.6 867.5 L1953.0 914.5 L1954.3 931.2 M1963.8 592.9 L1965.2 609.7 L1966.6 656.6 L1967.9 724.4 L1969.3 799.6 L1970.6 867.3 L1972.0 914.2 L1973.3 930.9 M1982.8 593.2 L1984.2 610.0 L1985.6 656.8 L1986.9 724.5 L1988.3 799.5 L1989.6 867.2 L1991.0 913.9 L1992.3 930.6 M2001.8 593.5 L2003.2 610.2 L2004.5 657.0 L2005.9 724.5 L2007.3 799.5 L2008.6 867.0 L2010.0 913.7 L2011.3 930.3 M2020.8 593.8 L2022.2 610.5 L2023.5 657.2 L2024.9 724.6 L2026.3 799.4 L2027.6 866.8 L2029.0 913.4 L2030.3 930.0 M2039.8 594.1 L2041.2 610.8 L2042.5 657.4 L2043.9 724.7 L2045.3 799.3 L2046.6 866.6 L2048.0 913.1 L2049.3 929.7 M2058.8 594.4 L2060.2 611.1 L2061.5 657.6 L2062.9 724.7 L2064.2 799.3 L2065.6 866.4 L2067.0 912.9 L2068.3 929.4 M2077.8 594.7 L2079.2 611.3 L2080.5 657.7 L2081.9 724.8 L2083.2 799.2 L2084.6 866.2 L2086.0 912.6 L2087.3 929.1 M2096.8 595.0 L2098.2 611.6 L2099.5 657.9 L2100.9 724.9 L2102.2 799.1 L2103.6 866.0 L2105.0 912.3 L2106.3 928.8 M2115.8 595.3 L2117.2 611.9 L2118.5 658.1 L2119.9 724.9 L2121.2 799.1 L2122.6 865.8 L2124.0 912.0 L2125.3 928.5 M2134.8 595.6 L2136.2 612.1 L2137.5 658.3 L2138.9 725.0 L2140.2 799.0 L2141.6 865.7 L2142.9 911.8 L2144.3 928.2 M2153.8 595.9 L2155.2 612.4 L2156.5 658.5 L2157.9 725.1 L2159.2 798.9 L2160.6 865.5 L2161.9 911.5 L2163.3 927.9 M2172.8 596.2 L2174.2 612.7 L2175.5 658.7 L2176.9 725.1 L2178.2 798.9 L2179.6 865.3 L2180.9 911.2 L2182.3 927.6 M2191.8 596.5 L2193.1 612.9 L2194.5 658.9 L2195.9 725.2 L2197.2 798.8 L2198.6 865.1 L2199.9 911.0 L2201.3 927.3 M2210.8 596.8 L2212.1 613.2 L2213.5 659.0 L2214.9 725.3 L2216.2 798.7 L2217.6 864.9 L2218.9 910.7 L2220.3 927.0 M2229.8 597.1 L2231.1 613.5 L2232.5 659.2 L2233.9 725.3 L2235.2 798.7 L2236.6 864.7 L2237.9 910.4 L2239.3 926.7 M2248.8 597.4 L2250.1 613.7 L2251.5 659.4 L2252.9 725.4 L2254.2 798.6 L2255.6 864.5 L2256.9 910.2 L2258.3 926.4 M2267.8 597.7 L2269.1 614.0 L2270.5 659.6 L2271.8 725.5 L2273.2 798.5 L2274.6 864.4 L2275.9 909.9 L2277.3 926.1 M2286.8 598.0 L2288.1 614.3 L2289.5 659.8 L2290.8 725.5 L2292.2 798.5 L2293.6 864.2 L2294.9 909.6 L2296.3 925.8 M2305.8 598.3 L2307.1 614.5 L2308.5 660.0 L2309.8 725.6 L2311.2 798.4 L2312.6 864.0 L2313.9 909.4 L2315.3 925.5 M2324.8 598.6 L2326.1 614.8 L2327.5 660.2 L2328.8 725.7 L2330.2 798.3 L2331.5 863.8 L2332.9 909.1 L2334.3 925.2 M2343.8 598.9 L2345.1 615.1 L2346.5 660.3 L2347.8 725.7 L2349.2 798.3 L2350.5 863.6 L2351.9 908.8 L2353.3 925.0 M2362.8 599.2 L2364.1 615.3 L2365.5 660.5 L2366.8 725.8 L2368.2 798.2 L2369.5 863.4 L2370.9 908.6 L2372.3 924.7 M2381.8 599.5 L2383.1 615.6 L2384.5 660.7 L2385.8 725.9 L2387.2 798.1 L2388.5 863.3 L2389.9 908.3 L2391.2 924.4 M2400.7 599.8 L2402.1 615.9 L2403.5 660.9 L2404.8 725.9 L2406.2 798.1 L2407.5 863.1 L2408.9 908.0 L2410.2 924.1 M2419.7 600.1 L2421.1 616.1 L2422.5 661.1 L2423.8 726.0 L2425.2 798.0 L2426.5 862.9 L2427.9 907.8 L2429.2 923.8 M2438.7 600.4 L2440.1 616.4 L2441.5 661.2 L2442.8 726.0 L2444.2 798.0 L2445.5 862.7 L2446.9 907.5 L2448.2 923.5 M2457.7 600.6 L2459.1 616.6 L2460.4 661.4 L2461.8 726.1 L2463.2 797.9 L2464.5 862.5 L2465.9 907.3 L2467.2 923.2 M2476.7 600.9 L2478.1 616.9 L2479.4 661.6 L2480.8 726.2 L2482.2 797.8 L2483.5 862.4 L2484.9 907.0 L2486.2 922.9 M2495.7 601.2 L2497.1 617.2 L2498.4 661.8 L2499.8 726.2 L2501.2 797.8 L2502.5 862.2 L2503.9 906.7 L2505.2 922.6 M2514.7 601.5 L2516.1 617.4 L2517.4 662.0 L2518.8 726.3 L2520.1 797.7 L2521.5 862.0 L2522.9 906.5 L2524.2 922.3 M2533.7 601.8 L2535.1 617.7 L2536.4 662.1 L2537.8 726.4 L2539.1 797.6 L2540.5 861.8 L2541.9 906.2 L2543.2 922.1 M2552.7 602.1 L2554.1 617.9 L2555.4 662.3 L2556.8 726.4 L2558.1 797.6 L2559.5 861.6 L2560.9 906.0 L2562.2 921.8 M2571.7 602.4 L2573.1 618.2 L2574.4 662.5 L2575.8 726.5 L2577.1 797.5 L2578.5 861.5 L2579.9 905.7 L2581.2 921.5 M2590.7 602.7 L2592.1 618.5 L2593.4 662.7 L2594.8 726.6 L2596.1 797.4 L2597.5 861.3 L2598.8 905.4 L2600.2 921.2 M2609.7 603.0 L2611.1 618.7 L2612.4 662.9 L2613.8 726.6 L2615.1 797.4 L2616.5 861.1 L2617.8 905.2 L2619.2 920.9 M2628.7 603.2 L2630.1 619.0 L2631.4 663.0 L2632.8 726.7 L2634.1 797.3 L2635.5 860.9 L2636.8 904.9 L2638.2 920.6 M2647.7 603.5 L2649.0 619.2 L2650.4 663.2 L2651.8 726.7 L2653.1 797.2 L2654.5 860.7 L2655.8 904.7 L2657.2 920.3 M2666.7 603.8 L2668.0 619.5 L2669.4 663.4 L2670.8 726.8 L2672.1 797.2 L2673.5 860.6 L2674.8 904.4 L2676.2 920.0 M2685.7 604.1 L2687.0 619.7 L2688.4 663.6 L2689.8 726.9 L2691.1 797.1 L2692.5 860.4 L2693.8 904.2 L2695.2 919.8 M2704.7 604.4 L2706.0 620.0 L2707.4 663.7 L2708.8 726.9 L2710.1 797.1 L2711.5 860.2 L2712.8 903.9 L2714.2 919.5 M2723.7 604.7 L2725.0 620.3 L2726.4 663.9 L2727.7 727.0 L2729.1 797.0 L2730.5 860.0 L2731.8 903.6 L2733.2 919.2 M2742.7 604.9 L2744.0 620.5 L2745.4 664.1 L2746.7 727.1 L2748.1 796.9 L2749.5 859.9 L2750.8 903.4 L2752.2 918.9 M2761.7 605.2 L2763.0 620.8 L2764.4 664.3 L2765.7 727.1 L2767.1 796.9 L2768.5 859.7 L2769.8 903.1 L2771.2 918.6 M2780.7 605.5 L2782.0 621.0 L2783.4 664.5 L2784.7 727.2 L2786.1 796.8 L2787.4 859.5 L2788.8 902.9 L2790.2 918.4 M2799.7 605.8 L2801.0 621.3 L2802.4 664.6 L2803.7 727.3 L2805.1 796.7 L2806.4 859.3 L2807.8 902.6 L2809.2 918.1 M2818.7 606.1 L2820.0 621.5 L2821.4 664.8 L2822.7 727.3 L2824.1 796.7 L2825.4 859.2 L2826.8 902.4 L2828.2 917.8 M2837.7 606.3 L2839.0 621.8 L2840.4 665.0 L2841.7 727.4 L2843.1 796.6 L2844.4 859.0 L2845.8 902.1 L2847.1 917.5 M2856.6 606.6 L2858.0 622.0 L2859.4 665.2 L2860.7 727.4 L2862.1 796.6 L2863.4 858.8 L2864.8 901.9 L2866.1 917.2 M2875.6 606.9 L2877.0 622.3 L2878.4 665.3 L2879.7 727.5 L2881.1 796.5 L2882.4 858.6 L2883.8 901.6 L2885.1 917.0 M2894.6 607.2 L2896.0 622.5 L2897.4 665.5 L2898.7 727.6 L2900.1 796.4 L2901.4 858.5 L2902.8 901.4 L2904.1 916.7 M2913.6 607.5 L2915.0 622.8 L2916.3 665.7 L2917.7 727.6 L2919.1 796.4 L2920.4 858.3 L2921.8 901.1 L2923.1 916.4 M2932.6 607.7 L2934.0 623.0 L2935.3 665.8 L2936.7 727.7 L2938.1 796.3 L2939.4 858.1 L2940.8 900.9 L2942.1 916.1 M2951.6 608.0 L2953.0 623.3 L2954.3 666.0 L2955.7 727.7 L2957.1 796.2 L2958.4 857.9 L2959.8 900.6 L2961.1 915.8 M2970.6 608.3 L2972.0 623.5 L2973.3 666.2 L2974.7 727.8 L2976.0 796.2 L2977.4 857.8 L2978.8 900.4 L2980.1 915.6 M2989.6 608.6 L2991.0 623.8 L2992.3 666.4 L2993.7 727.9 L2995.0 796.1 L2996.4 857.6 L2997.8 900.1 L2999.1 915.3 M3008.6 608.8 L3010.0 624.0 L3011.3 666.5 L3012.7 727.9 L3014.0 796.1 L3015.4 857.4 L3016.8 899.9 L3018.1 915.0 M3027.6 609.1 L3029.0 624.3 L3030.3 666.7 L3031.7 728.0 L3033.0 796.0 L3034.4 857.3 L3035.7 899.6 L3037.1 914.7 M3046.6 609.4 L3048.0 624.5 L3049.3 666.9 L3050.7 728.1 L3052.0 795.9 L3053.4 857.1 L3054.7 899.4 L3056.1 914.5 M3065.6 609.7 L3067.0 624.8 L3068.3 667.0 L3069.7 728.1 L3071.0 795.9 L3072.4 856.9 L3073.7 899.1 L3075.1 914.2 M3084.6 609.9 L3084.7 625.0 L3084.7 667.2 L3084.8 728.2 L3084.8 795.8 L3084.9 856.8 L3084.9 899.0 L3085.0 914.0" fill="none" stroke="#00ff00" stroke-opacity="0.66" stroke-width="4" stroke-linecap="round"/>
<path d="M358.7 958.8 L360.1 939.3 L361.4 884.7 L362.8 805.8 L364.1 718.2 L365.5 639.4 L366.8 584.8 L368.2 565.4 M377.7 958.5 L379.1 939.0 L380.4 884.5 L381.8 805.7 L383.1 718.3 L384.5 639.6 L385.8 585.1 L387.2 565.7 M396.7 958.1 L398.0 938.7 L399.4 884.2 L400.8 805.6 L402.1 718.4 L403.5 639.8 L404.8 585.4 L406.2 566.1 M415.7 957.8 L417.0 938.4 L418.4 884.0 L419.8 805.5 L421.1 718.5 L422.5 640.0 L423.8 585.8 L425.2 566.4 M434.7 957.4 L436.0 938.0 L437.4 883.8 L438.8 805.5 L440.1 718.5 L441.5 640.2 L442.8 586.1 L444.2 566.8 M453.7 957.1 L455.0 937.7 L456.4 883.6 L457.7 805.4 L459.1 718.6 L460.5 640.5 L461.8 586.4 L463.2 567.1 M472.7 956.7 L474.0 937.4 L475.4 883.4 L476.7 805.3 L478.1 718.7 L479.5 640.7 L480.8 586.7 L482.2 567.5 M491.7 956.4 L493.0 937.1 L494.4 883.2 L495.7 805.2 L497.1 718.8 L498.5 640.9 L499.8 587.0 L501.2 567.8 M510.7 956.0 L512.0 936.8 L513.4 882.9 L514.7 805.2 L516.1 718.9 L517.4 641.1 L518.8 587.3 L520.2 568.2 M529.7 955.7 L531.0 936.5 L532.4 882.7 L533.7 805.1 L535.1 718.9 L536.4 641.3 L537.8 587.7 L539.2 568.5 M548.7 955.3 L550.0 936.1 L551.4 882.5 L552.7 805.0 L554.1 719.0 L555.4 641.5 L556.8 588.0 L558.2 568.9 M567.7 955.0 L569.0 935.8 L570.4 882.3 L571.7 804.9 L573.1 719.1 L574.4 641.8 L575.8 588.3 L577.1 569.2 M586.6 954.6 L588.0 935.5 L589.4 882.1 L590.7 804.8 L592.1 719.2 L593.4 642.0 L594.8 588.6 L596.1 569.6 M605.6 954.3 L607.0 935.2 L608.4 881.9 L609.7 804.8 L611.1 719.2 L612.4 642.2 L613.8 588.9 L615.1 569.9 M624.6 953.9 L626.0 934.9 L627.4 881.6 L628.7 804.7 L630.1 719.3 L631.4 642.4 L632.8 589.2 L634.1 570.2 M643.6 953.6 L645.0 934.6 L646.3 881.4 L647.7 804.6 L649.1 719.4 L650.4 642.6 L651.8 589.5 L653.1 570.6 M662.6 953.2 L664.0 934.3 L665.3 881.2 L666.7 804.5 L668.1 719.5 L669.4 642.8 L670.8 589.8 L672.1 570.9 M681.6 952.9 L683.0 934.0 L684.3 881.0 L685.7 804.5 L687.1 719.5 L688.4 643.1 L689.8 590.1 L691.1 571.3 M700.6 952.6 L702.0 933.7 L703.3 880.8 L704.7 804.4 L706.0 719.6 L707.4 643.3 L708.8 590.4 L710.1 571.6 M719.6 952.2 L721.0 933.4 L722.3 880.6 L723.7 804.3 L725.0 719.7 L726.4 643.5 L727.8 590.8 L729.1 572.0 M738.6 951.9 L740.0 933.0 L741.3 880.4 L742.7 804.2 L744.0 719.8 L745.4 643.7 L746.8 591.1 L748.1 572.3 M757.6 951.5 L759.0 932.7 L760.3 880.1 L761.7 804.2 L763.0 719.8 L764.4 643.9 L765.8 591.4 L767.1 572.6 M776.6 951.2 L778.0 932.4 L779.3 879.9 L780.7 804.1 L782.0 719.9 L783.4 644.1 L784.7 591.7 L786.1 573.0 M795.6 950.8 L797.0 932.1 L798.3 879.7 L799.7 804.0 L801.0 720.0 L802.4 644.3 L803.7 592.0 L805.1 573.3 M814.6 950.5 L816.0 931.8 L817.3 879.5 L818.7 803.9 L820.0 720.1 L821.4 644.5 L822.7 592.3 L824.1 573.7 M833.6 950.2 L834.9 931.5 L836.3 879.3 L837.7 803.9 L839.0 720.1 L840.4 644.8 L841.7 592.6 L843.1 574.0 M852.6 949.8 L853.9 931.2 L855.3 879.1 L856.7 803.8 L858.0 720.2 L859.4 645.0 L860.7 592.9 L862.1 574.3 M871.6 949.5 L872.9 930.9 L874.3 878.9 L875.7 803.7 L877.0 720.3 L878.4 645.2 L879.7 593.2 L881.1 574.7 M890.6 949.2 L891.9 930.6 L893.3 878.7 L894.7 803.6 L896.0 720.4 L897.4 645.4 L898.7 593.5 L900.1 575.0 M909.6 948.8 L910.9 930.3 L912.3 878.5 L913.6 803.6 L915.0 720.4 L916.4 645.6 L917.7 593.8 L919.1 575.3 M928.6 948.5 L929.9 930.0 L931.3 878.2 L932.6 803.5 L934.0 720.5 L935.4 645.8 L936.7 594.1 L938.1 575.7 M947.6 948.2 L948.9 929.7 L950.3 878.0 L951.6 803.4 L953.0 720.6 L954.4 646.0 L955.7 594.4 L957.1 576.0 M966.6 947.8 L967.9 929.4 L969.3 877.8 L970.6 803.3 L972.0 720.7 L973.3 646.2 L974.7 594.7 L976.1 576.4 M985.6 947.5 L986.9 929.1 L988.3 877.6 L989.6 803.3 L991.0 720.7 L992.3 646.4 L993.7 595.0 L995.1 576.7 M1004.6 947.1 L1005.9 928.8 L1007.3 877.4 L1008.6 803.2 L1010.0 720.8 L1011.3 646.6 L1012.7 595.3 L1014.1 577.0 M1023.6 946.8 L1024.9 928.5 L1026.3 877.2 L1027.6 803.1 L1029.0 720.9 L1030.3 646.8 L1031.7 595.6 L1033.0 577.3 M1042.5 946.5 L1043.9 928.2 L1045.3 877.0 L1046.6 803.0 L1048.0 721.0 L1049.3 647.0 L1050.7 595.9 L1052.0 577.7 M1061.5 946.2 L1062.9 927.9 L1064.3 876.8 L1065.6 803.0 L1067.0 721.0 L1068.3 647.3 L1069.7 596.2 L1071.0 578.0 M1080.5 945.8 L1081.9 927.6 L1083.3 876.6 L1084.6 802.9 L1086.0 721.1 L1087.3 647.5 L1088.7 596.5 L1090.0 578.3 M1099.5 945.5 L1100.9 927.3 L1102.2 876.4 L1103.6 802.8 L1105.0 721.2 L1106.3 647.7 L1107.7 596.8 L1109.0 578.7 M1118.5 945.2 L1119.9 927.0 L1121.2 876.2 L1122.6 802.7 L1124.0 721.3 L1125.3 647.9 L1126.7 597.1 L1128.0 579.0 M1137.5 944.8 L1138.9 926.7 L1140.2 876.0 L1141.6 802.7 L1143.0 721.3 L1144.3 648.1 L1145.7 597.4 L1147.0 579.3 M1156.5 944.5 L1157.9 926.4 L1159.2 875.8 L1160.6 802.6 L1161.9 721.4 L1163.3 648.3 L1164.7 597.7 L1166.0 579.7 M1175.5 944.2 L1176.9 926.1 L1178.2 875.6 L1179.6 802.5 L1180.9 721.5 L1182.3 648.5 L1183.7 598.0 L1185.0 580.0 M1194.5 943.8 L1195.9 925.8 L1197.2 875.4 L1198.6 802.4 L1199.9 721.6 L1201.3 648.7 L1202.7 598.3 L1204.0 580.3 M1213.5 943.5 L1214.9 925.5 L1216.2 875.1 L1217.6 802.4 L1218.9 721.6 L1220.3 648.9 L1221.7 598.6 L1223.0 580.6 M1232.5 943.2 L1233.9 925.2 L1235.2 874.9 L1236.6 802.3 L1237.9 721.7 L1239.3 649.1 L1240.6 598.9 L1242.0 581.0 M1251.5 942.9 L1252.9 924.9 L1254.2 874.7 L1255.6 802.2 L1256.9 721.8 L1258.3 649.3 L1259.6 599.2 L1261.0 581.3 M1270.5 942.5 L1271.9 924.6 L1273.2 874.5 L1274.6 802.2 L1275.9 721.8 L1277.3 649.5 L1278.6 599.5 L1280.0 581.6 M1289.5 942.2 L1290.8 924.4 L1292.2 874.3 L1293.6 802.1 L1294.9 721.9 L1296.3 649.7 L1297.6 599.8 L1299.0 581.9 M1308.5 941.9 L1309.8 924.1 L1311.2 874.1 L1312.6 802.0 L1313.9 722.0 L1315.3 649.9 L1316.6 600.0 L1318.0 582.3 M1327.5 941.6 L1328.8 923.8 L1330.2 873.9 L1331.6 801.9 L1332.9 722.1 L1334.3 650.1 L1335.6 600.3 L1337.0 582.6 M1346.5 941.3 L1347.8 923.5 L1349.2 873.7 L1350.6 801.9 L1351.9 722.1 L1353.3 650.3 L1354.6 600.6 L1356.0 582.9 M1365.5 940.9 L1366.8 923.2 L1368.2 873.5 L1369.5 801.8 L1370.9 722.2 L1372.3 650.5 L1373.6 600.9 L1375.0 583.2 M1384.5 940.6 L1385.8 922.9 L1387.2 873.3 L1388.5 801.7 L1389.9 722.3 L1391.3 650.7 L1392.6 601.2 L1394.0 583.6 M1403.5 940.3 L1404.8 922.6 L1406.2 873.1 L1407.5 801.7 L1408.9 722.3 L1410.3 650.9 L1411.6 601.5 L1413.0 583.9 M1422.5 940.0 L1423.8 922.3 L1425.2 872.9 L1426.5 801.6 L1427.9 722.4 L1429.2 651.1 L1430.6 601.8 L1432.0 584.2 M1441.5 939.6 L1442.8 922.0 L1444.2 872.7 L1445.5 801.5 L1446.9 722.5 L1448.2 651.3 L1449.6 602.1 L1451.0 584.5 M1460.5 939.3 L1461.8 921.7 L1463.2 872.5 L1464.5 801.4 L1465.9 722.6 L1467.2 651.5 L1468.6 602.4 L1470.0 584.8 M1479.5 939.0 L1480.8 921.5 L1482.2 872.3 L1483.5 801.4 L1484.9 722.6 L1486.2 651.7 L1487.6 602.6 L1488.9 585.1 M1498.4 938.7 L1499.8 921.2 L1501.2 872.1 L1502.5 801.3 L1503.9 722.7 L1505.2 651.9 L1506.6 602.9 L1507.9 585.5 M1517.4 938.4 L1518.8 920.9 L1520.2 871.9 L1521.5 801.2 L1522.9 722.8 L1524.2 652.1 L1525.6 603.2 L1526.9 585.8 M1536.4 938.1 L1537.8 920.6 L1539.2 871.7 L1540.5 801.2 L1541.9 722.8 L1543.2 652.3 L1544.6 603.5 L1545.9 586.1 M1555.4 937.7 L1556.8 920.3 L1558.1 871.5 L1559.5 801.1 L1560.9 722.9 L1562.2 652.5 L1563.6 603.8 L1564.9 586.4 M1574.4 937.4 L1575.8 920.0 L1577.1 871.3 L1578.5 801.0 L1579.9 723.0 L1581.2 652.7 L1582.6 604.1 L1583.9 586.7 M1593.4 937.1 L1594.8 919.7 L1596.1 871.2 L1597.5 801.0 L1598.9 723.1 L1600.2 652.9 L1601.6 604.4 L1602.9 587.0 M1612.4 936.8 L1613.8 919.5 L1615.1 871.0 L1616.5 800.9 L1617.8 723.1 L1619.2 653.1 L1620.6 604.6 L1621.9 587.4 M1631.4 936.5 L1632.8 919.2 L1634.1 870.8 L1635.5 800.8 L1636.8 723.2 L1638.2 653.3 L1639.6 604.9 L1640.9 587.7 M1650.4 936.2 L1651.8 918.9 L1653.1 870.6 L1654.5 800.7 L1655.8 723.3 L1657.2 653.5 L1658.6 605.2 L1659.9 588.0 M1669.4 935.9 L1670.8 918.6 L1672.1 870.4 L1673.5 800.7 L1674.8 723.3 L1676.2 653.7 L1677.5 605.5 L1678.9 588.3 M1688.4 935.5 L1689.8 918.3 L1691.1 870.2 L1692.5 800.6 L1693.8 723.4 L1695.2 653.9 L1696.5 605.8 L1697.9 588.6 M1707.4 935.2 L1708.8 918.1 L1710.1 870.0 L1711.5 800.5 L1712.8 723.5 L1714.2 654.1 L1715.5 606.0 L1716.9 588.9 M1726.4 934.9 L1727.8 917.8 L1729.1 869.8 L1730.5 800.5 L1731.8 723.5 L1733.2 654.3 L1734.5 606.3 L1735.9 589.2 M1745.4 934.6 L1746.7 917.5 L1748.1 869.6 L1749.5 800.4 L1750.8 723.6 L1752.2 654.4 L1753.5 606.6 L1754.9 589.5 M1764.4 934.3 L1765.7 917.2 L1767.1 869.4 L1768.5 800.3 L1769.8 723.7 L1771.2 654.6 L1772.5 606.9 L1773.9 589.9 M1783.4 934.0 L1784.7 916.9 L1786.1 869.2 L1787.5 800.3 L1788.8 723.7 L1790.2 654.8 L1791.5 607.2 L1792.9 590.2 M1802.4 933.7 L1803.7 916.7 L1805.1 869.0 L1806.4 800.2 L1807.8 723.8 L1809.2 655.0 L1810.5 607.4 L1811.9 590.5 M1821.4 933.4 L1822.7 916.4 L1824.1 868.8 L1825.4 800.1 L1826.8 723.9 L1828.2 655.2 L1829.5 607.7 L1830.9 590.8 M1840.4 933.1 L1841.7 916.1 L1843.1 868.6 L1844.4 800.1 L1845.8 724.0 L1847.2 655.4 L1848.5 608.0 L1849.9 591.1 M1859.4 932.8 L1860.7 915.8 L1862.1 868.4 L1863.4 800.0 L1864.8 724.0 L1866.2 655.6 L1867.5 608.3 L1868.9 591.4 M1878.4 932.4 L1879.7 915.5 L1881.1 868.2 L1882.4 799.9 L1883.8 724.1 L1885.1 655.8 L1886.5 608.5 L1887.9 591.7 M1897.4 932.1 L1898.7 915.3 L1900.1 868.1 L1901.4 799.8 L1902.8 724.2 L1904.1 656.0 L1905.5 608.8 L1906.9 592.0 M1916.4 931.8 L1917.7 915.0 L1919.1 867.9 L1920.4 799.8 L1921.8 724.2 L1923.1 656.2 L1924.5 609.1 L1925.9 592.3 M1935.3 931.5 L1936.7 914.7 L1938.1 867.7 L1939.4 799.7 L1940.8 724.3 L1942.1 656.4 L1943.5 609.4 L1944.8 592.6 M1954.3 931.2 L1955.7 914.4 L1957.1 867.5 L1958.4 799.6 L1959.8 724.4 L1961.1 656.6 L1962.5 609.6 L1963.8 592.9 M1973.3 930.9 L1974.7 914.2 L1976.1 867.3 L1977.4 799.6 L1978.8 724.4 L1980.1 656.7 L1981.5 609.9 L1982.8 593.2 M1992.3 930.6 L1993.7 913.9 L1995.1 867.1 L1996.4 799.5 L1997.8 724.5 L1999.1 656.9 L2000.5 610.2 L2001.8 593.5 M2011.3 930.3 L2012.7 913.6 L2014.0 866.9 L2015.4 799.4 L2016.8 724.6 L2018.1 657.1 L2019.5 610.5 L2020.8 593.8 M2030.3 930.0 L2031.7 913.4 L2033.0 866.7 L2034.4 799.4 L2035.8 724.6 L2037.1 657.3 L2038.5 610.7 L2039.8 594.1 M2049.3 929.7 L2050.7 913.1 L2052.0 866.5 L2053.4 799.3 L2054.8 724.7 L2056.1 657.5 L2057.5 611.0 L2058.8 594.4 M2068.3 929.4 L2069.7 912.8 L2071.0 866.4 L2072.4 799.2 L2073.7 724.8 L2075.1 657.7 L2076.5 611.3 L2077.8 594.7 M2087.3 929.1 L2088.7 912.5 L2090.0 866.2 L2091.4 799.2 L2092.7 724.8 L2094.1 657.9 L2095.5 611.6 L2096.8 595.0 M2106.3 928.8 L2107.7 912.3 L2109.0 866.0 L2110.4 799.1 L2111.7 724.9 L2113.1 658.1 L2114.5 611.8 L2115.8 595.3 M2125.3 928.5 L2126.7 912.0 L2128.0 865.8 L2129.4 799.0 L2130.7 725.0 L2132.1 658.2 L2133.4 612.1 L2134.8 595.6 M2144.3 928.2 L2145.7 911.7 L2147.0 865.6 L2148.4 799.0 L2149.7 725.0 L2151.1 658.4 L2152.4 612.4 L2153.8 595.9 M2163.3 927.9 L2164.7 911.5 L2166.0 865.4 L2167.4 798.9 L2168.7 725.1 L2170.1 658.6 L2171.4 612.6 L2172.8 596.2 M2182.3 927.6 L2183.7 911.2 L2185.0 865.2 L2186.4 798.8 L2187.7 725.2 L2189.1 658.8 L2190.4 612.9 L2191.8 596.5 M2201.3 927.3 L2202.6 910.9 L2204.0 865.0 L2205.4 798.8 L2206.7 725.2 L2208.1 659.0 L2209.4 613.2 L2210.8 596.8 M2220.3 927.0 L2221.6 910.7 L2223.0 864.9 L2224.4 798.7 L2225.7 725.3 L2227.1 659.2 L2228.4 613.4 L2229.8 597.1 M2239.3 926.7 L2240.6 910.4 L2242.0 864.7 L2243.4 798.6 L2244.7 725.4 L2246.1 659.4 L2247.4 613.7 L2248.8 597.4 M2258.3 926.4 L2259.6 910.1 L2261.0 864.5 L2262.3 798.6 L2263.7 725.4 L2265.1 659.5 L2266.4 614.0 L2267.8 597.7 M2277.3 926.1 L2278.6 909.9 L2280.0 864.3 L2281.3 798.5 L2282.7 725.5 L2284.1 659.7 L2285.4 614.2 L2286.8 598.0 M2296.3 925.8 L2297.6 909.6 L2299.0 864.1 L2300.3 798.4 L2301.7 725.6 L2303.1 659.9 L2304.4 614.5 L2305.8 598.3 M2315.3 925.5 L2316.6 909.3 L2318.0 863.9 L2319.3 798.4 L2320.7 725.6 L2322.0 660.1 L2323.4 614.8 L2324.8 598.6 M2334.3 925.2 L2335.6 909.1 L2337.0 863.8 L2338.3 798.3 L2339.7 725.7 L2341.0 660.3 L2342.4 615.0 L2343.8 598.9 M2353.3 925.0 L2354.6 908.8 L2356.0 863.6 L2357.3 798.2 L2358.7 725.8 L2360.0 660.5 L2361.4 615.3 L2362.8 599.2 M2372.3 924.7 L2373.6 908.5 L2375.0 863.4 L2376.3 798.2 L2377.7 725.8 L2379.0 660.6 L2380.4 615.6 L2381.8 599.5 M2391.2 924.4 L2392.6 908.3 L2394.0 863.2 L2395.3 798.1 L2396.7 725.9 L2398.0 660.8 L2399.4 615.8 L2400.7 599.8 M2410.2 924.1 L2411.6 908.0 L2413.0 863.0 L2414.3 798.1 L2415.7 726.0 L2417.0 661.0 L2418.4 616.1 L2419.7 600.1 M2429.2 923.8 L2430.6 907.7 L2432.0 862.8 L2433.3 798.0 L2434.7 726.0 L2436.0 661.2 L2437.4 616.3 L2438.7 600.4 M2448.2 923.5 L2449.6 907.5 L2451.0 862.7 L2452.3 797.9 L2453.7 726.1 L2455.0 661.4 L2456.4 616.6 L2457.7 600.6 M2467.2 923.2 L2468.6 907.2 L2469.9 862.5 L2471.3 797.9 L2472.7 726.1 L2474.0 661.6 L2475.4 616.9 L2476.7 600.9 M2486.2 922.9 L2487.6 907.0 L2488.9 862.3 L2490.3 797.8 L2491.7 726.2 L2493.0 661.7 L2494.4 617.1 L2495.7 601.2 M2505.2 922.6 L2506.6 906.7 L2507.9 862.1 L2509.3 797.7 L2510.7 726.3 L2512.0 661.9 L2513.4 617.4 L2514.7 601.5 M2524.2 922.3 L2525.6 906.4 L2526.9 861.9 L2528.3 797.7 L2529.6 726.3 L2531.0 662.1 L2532.4 617.7 L2533.7 601.8 M2543.2 922.1 L2544.6 906.2 L2545.9 861.8 L2547.3 797.6 L2548.6 726.4 L2550.0 662.3 L2551.4 617.9 L2552.7 602.1 M2562.2 921.8 L2563.6 905.9 L2564.9 861.6 L2566.3 797.5 L2567.6 726.5 L2569.0 662.5 L2570.4 618.2 L2571.7 602.4 M2581.2 921.5 L2582.6 905.7 L2583.9 861.4 L2585.3 797.5 L2586.6 726.5 L2588.0 662.6 L2589.3 618.4 L2590.7 602.7 M2600.2 921.2 L2601.6 905.4 L2602.9 861.2 L2604.3 797.4 L2605.6 726.6 L2607.0 662.8 L2608.3 618.7 L2609.7 603.0 M2619.2 920.9 L2620.6 905.1 L2621.9 861.0 L2623.3 797.3 L2624.6 726.7 L2626.0 663.0 L2627.3 618.9 L2628.7 603.2 M2638.2 920.6 L2639.6 904.9 L2640.9 860.9 L2642.3 797.3 L2643.6 726.7 L2645.0 663.2 L2646.3 619.2 L2647.7 603.5 M2657.2 920.3 L2658.5 904.6 L2659.9 860.7 L2661.3 797.2 L2662.6 726.8 L2664.0 663.3 L2665.3 619.5 L2666.7 603.8 M2676.2 920.0 L2677.5 904.4 L2678.9 860.5 L2680.3 797.2 L2681.6 726.8 L2683.0 663.5 L2684.3 619.7 L2685.7 604.1 M2695.2 919.8 L2696.5 904.1 L2697.9 860.3 L2699.3 797.1 L2700.6 726.9 L2702.0 663.7 L2703.3 620.0 L2704.7 604.4 M2714.2 919.5 L2715.5 903.9 L2716.9 860.2 L2718.2 797.0 L2719.6 727.0 L2721.0 663.9 L2722.3 620.2 L2723.7 604.7 M2733.2 919.2 L2734.5 903.6 L2735.9 860.0 L2737.2 797.0 L2738.6 727.0 L2740.0 664.1 L2741.3 620.5 L2742.7 604.9 M2752.2 918.9 L2753.5 903.4 L2754.9 859.8 L2756.2 796.9 L2757.6 727.1 L2759.0 664.2 L2760.3 620.7 L2761.7 605.2 M2771.2 918.6 L2772.5 903.1 L2773.9 859.6 L2775.2 796.8 L2776.6 727.2 L2777.9 664.4 L2779.3 621.0 L2780.7 605.5 M2790.2 918.4 L2791.5 902.9 L2792.9 859.5 L2794.2 796.8 L2795.6 727.2 L2796.9 664.6 L2798.3 621.2 L2799.7 605.8 M2809.2 918.1 L2810.5 902.6 L2811.9 859.3 L2813.2 796.7 L2814.6 727.3 L2815.9 664.8 L2817.3 621.5 L2818.7 606.1 M2828.2 917.8 L2829.5 902.3 L2830.9 859.1 L2832.2 796.7 L2833.6 727.4 L2834.9 664.9 L2836.3 621.7 L2837.7 606.3 M2847.1 917.5 L2848.5 902.1 L2849.9 858.9 L2851.2 796.6 L2852.6 727.4 L2853.9 665.1 L2855.3 622.0 L2856.6 606.6 M2866.1 917.2 L2867.5 901.8 L2868.9 858.8 L2870.2 796.5 L2871.6 727.5 L2872.9 665.3 L2874.3 622.2 L2875.6 606.9 M2885.1 917.0 L2886.5 901.6 L2887.9 858.6 L2889.2 796.5 L2890.6 727.5 L2891.9 665.5 L2893.3 622.5 L2894.6 607.2 M2904.1 916.7 L2905.5 901.3 L2906.8 858.4 L2908.2 796.4 L2909.6 727.6 L2910.9 665.6 L2912.3 622.7 L2913.6 607.5 M2923.1 916.4 L2924.5 901.1 L2925.8 858.2 L2927.2 796.3 L2928.6 727.7 L2929.9 665.8 L2931.3 623.0 L2932.6 607.7 M2942.1 916.1 L2943.5 900.8 L2944.8 858.1 L2946.2 796.3 L2947.6 727.7 L2948.9 666.0 L2950.3 623.2 L2951.6 608.0 M2961.1 915.8 L2962.5 900.6 L2963.8 857.9 L2965.2 796.2 L2966.6 727.8 L2967.9 666.1 L2969.3 623.5 L2970.6 608.3 M2980.1 915.6 L2981.5 900.3 L2982.8 857.7 L2984.2 796.2 L2985.5 727.8 L2986.9 666.3 L2988.3 623.7 L2989.6 608.6 M2999.1 915.3 L3000.5 900.1 L3001.8 857.6 L3003.2 796.1 L3004.5 727.9 L3005.9 666.5 L3007.3 624.0 L3008.6 608.8 M3018.1 915.0 L3019.5 899.8 L3020.8 857.4 L3022.2 796.0 L3023.5 728.0 L3024.9 666.7 L3026.3 624.2 L3027.6 609.1 M3037.1 914.7 L3038.5 899.6 L3039.8 857.2 L3041.2 796.0 L3042.5 728.0 L3043.9 666.8 L3045.2 624.5 L3046.6 609.4 M3056.1 914.5 L3057.5 899.3 L3058.8 857.0 L3060.2 795.9 L3061.5 728.1 L3062.9 667.0 L3064.2 624.7 L3065.6 609.7 M3075.1 914.2 L3076.5 899.1 L3077.8 856.9 L3079.2 795.9 L3080.5 728.2 L3081.9 667.2 L3083.2 625.0 L3084.6 609.9" fill="none" stroke="#00ff00" stroke-opacity="0.66" stroke-width="4" stroke-linecap="round"/>
<path d="M358.7 955.3 v-45 M368.2 568.9 v36 M377.7 955.0 v-62 M387.2 569.2 v32 M396.7 954.6 v-56 M406.2 569.6 v47 M415.7 954.3 v-31 M425.2 569.9 v54 M434.7 953.9 v-30 M444.2 570.3 v51 M453.7 953.6 v-32 M463.2 570.6 v33 M472.7 953.2 v-50 M482.2 571.0 v71 M491.7 952.9 v-34 M501.2 571.3 v40 M510.7 952.5 v-61 M520.2 571.7 v77 M529.7 952.2 v-58 M539.2 572.0 v49 M548.7 951.8 v-79 M558.2 572.4 v30 M567.7 951.5 v-73 M577.1 572.7 v43 M586.6 951.1 v-36 M596.1 573.1 v34 M605.6 950.8 v-44 M615.1 573.4 v70 M624.6 950.4 v-37 M634.1 573.7 v58 M643.6 950.1 v-61 M653.1 574.1 v47 M662.6 949.7 v-56 M672.1 574.4 v31 M681.6 949.4 v-31 M691.1 574.8 v39 M700.6 949.1 v-63 M710.1 575.1 v50 M719.6 948.7 v-44 M729.1 575.5 v58 M738.6 948.4 v-52 M748.1 575.8 v44 M757.6 948.0 v-69 M767.1 576.1 v64 M776.6 947.7 v-41 M786.1 576.5 v58 M795.6 947.3 v-55 M805.1 576.8 v74 M814.6 947.0 v-66 M824.1 577.2 v43 M833.6 946.7 v-79 M843.1 577.5 v34 M852.6 946.3 v-50 M862.1 577.8 v67 M871.6 946.0 v-36 M881.1 578.2 v53 M890.6 945.7 v-30 M900.1 578.5 v63 M909.6 945.3 v-68 M919.1 578.8 v58 M928.6 945.0 v-74 M938.1 579.2 v44 M947.6 944.7 v-64 M957.1 579.5 v59 M966.6 944.3 v-58 M976.1 579.9 v52 M985.6 944.0 v-72 M995.1 580.2 v77 M1004.6 943.6 v-53 M1014.1 580.5 v63 M1023.6 943.3 v-31 M1033.0 580.8 v64 M1042.5 943.0 v-62 M1052.0 581.2 v80 M1061.5 942.7 v-71 M1071.0 581.5 v43 M1080.5 942.3 v-48 M1090.0 581.8 v63 M1099.5 942.0 v-29 M1109.0 582.2 v52 M1118.5 941.7 v-37 M1128.0 582.5 v34 M1137.5 941.3 v-31 M1147.0 582.8 v68 M1156.5 941.0 v-35 M1166.0 583.2 v41 M1175.5 940.7 v-48 M1185.0 583.5 v73 M1194.5 940.3 v-32 M1204.0 583.8 v51 M1213.5 940.0 v-57 M1223.0 584.1 v74 M1232.5 939.7 v-71 M1242.0 584.5 v73 M1251.5 939.4 v-42 M1261.0 584.8 v50 M1270.5 939.0 v-47 M1280.0 585.1 v74 M1289.5 938.7 v-78 M1299.0 585.4 v36 M1308.5 938.4 v-37 M1318.0 585.8 v40 M1327.5 938.1 v-40 M1337.0 586.1 v53 M1346.5 937.8 v-59 M1356.0 586.4 v42 M1365.5 937.4 v-28 M1375.0 586.7 v50 M1384.5 937.1 v-47 M1394.0 587.1 v57 M1403.5 936.8 v-78 M1413.0 587.4 v64 M1422.5 936.5 v-55 M1432.0 587.7 v60 M1441.5 936.1 v-63 M1451.0 588.0 v31 M1460.5 935.8 v-75 M1470.0 588.3 v69 M1479.5 935.5 v-73 M1488.9 588.6 v69 M1498.4 935.2 v-48 M1507.9 589.0 v49 M1517.4 934.9 v-33 M1526.9 589.3 v61 M1536.4 934.6 v-31 M1545.9 589.6 v32 M1555.4 934.2 v-39 M1564.9 589.9 v36 M1574.4 933.9 v-46 M1583.9 590.2 v31 M1593.4 933.6 v-28 M1602.9 590.5 v36 M1612.4 933.3 v-33 M1621.9 590.9 v47 M1631.4 933.0 v-29 M1640.9 591.2 v73 M1650.4 932.7 v-60 M1659.9 591.5 v36 M1669.4 932.4 v-41 M1678.9 591.8 v46 M1688.4 932.0 v-47 M1697.9 592.1 v34 M1707.4 931.7 v-72 M1716.9 592.4 v80 M1726.4 931.4 v-52 M1735.9 592.7 v53 M1745.4 931.1 v-32 M1754.9 593.0 v33 M1764.4 930.8 v-46 M1773.9 593.4 v42 M1783.4 930.5 v-71 M1792.9 593.7 v36 M1802.4 930.2 v-29 M1811.9 594.0 v77 M1821.4 929.9 v-55 M1830.9 594.3 v36 M1840.4 929.6 v-56 M1849.9 594.6 v29 M1859.4 929.3 v-55 M1868.9 594.9 v79 M1878.4 928.9 v-73 M1887.9 595.2 v64 M1897.4 928.6 v-42 M1906.9 595.5 v47 M1916.4 928.3 v-37 M1925.9 595.8 v68 M1935.3 928.0 v-56 M1944.8 596.1 v69 M1954.3 927.7 v-45 M1963.8 596.4 v40 M1973.3 927.4 v-70 M1982.8 596.7 v79 M1992.3 927.1 v-72 M2001.8 597.0 v70 M2011.3 926.8 v-71 M2020.8 597.3 v66 M2030.3 926.5 v-40 M2039.8 597.6 v55 M2049.3 926.2 v-46 M2058.8 597.9 v30 M2068.3 925.9 v-29 M2077.8 598.2 v43 M2087.3 925.6 v-41 M2096.8 598.5 v64 M2106.3 925.3 v-78 M2115.8 598.8 v51 M2125.3 925.0 v-77 M2134.8 599.1 v79 M2144.3 924.7 v-78 M2153.8 599.4 v47 M2163.3 924.4 v-39 M2172.8 599.7 v40 M2182.3 924.1 v-38 M2191.8 600.0 v39 M2201.3 923.8 v-60 M2210.8 600.3 v75 M2220.3 923.5 v-72 M2229.8 600.6 v53 M2239.3 923.2 v-62 M2248.8 600.9 v70 M2258.3 922.9 v-32 M2267.8 601.2 v62 M2277.3 922.6 v-75 M2286.8 601.5 v69 M2296.3 922.3 v-67 M2305.8 601.8 v53 M2315.3 922.0 v-37 M2324.8 602.1 v69 M2334.3 921.7 v-45 M2343.8 602.4 v70 M2353.3 921.5 v-79 M2362.8 602.7 v49 M2372.3 921.2 v-49 M2381.8 603.0 v77 M2391.2 920.9 v-66 M2400.7 603.3 v37 M2410.2 920.6 v-35 M2419.7 603.6 v36 M2429.2 920.3 v-75 M2438.7 603.9 v70 M2448.2 920.0 v-36 M2457.7 604.1 v71 M2467.2 919.7 v-79 M2476.7 604.4 v62 M2486.2 919.4 v-46 M2495.7 604.7 v57 M2505.2 919.1 v-35 M2514.7 605.0 v29 M2524.2 918.8 v-78 M2533.7 605.3 v62 M2543.2 918.6 v-55 M2552.7 605.6 v77 M2562.2 918.3 v-51 M2571.7 605.9 v73 M2581.2 918.0 v-71 M2590.7 606.2 v39 M2600.2 917.7 v-41 M2609.7 606.5 v43 M2619.2 917.4 v-41 M2628.7 606.7 v58 M2638.2 917.1 v-41 M2647.7 607.0 v50 M2657.2 916.8 v-35 M2666.7 607.3 v75 M2676.2 916.5 v-46 M2685.7 607.6 v52 M2695.2 916.3 v-58 M2704.7 607.9 v75 M2714.2 916.0 v-50 M2723.7 608.2 v76 M2733.2 915.7 v-54 M2742.7 608.4 v56 M2752.2 915.4 v-55 M2761.7 608.7 v29 M2771.2 915.1 v-51 M2780.7 609.0 v38 M2790.2 914.9 v-28 M2799.7 609.3 v70 M2809.2 914.6 v-37 M2818.7 609.6 v53 M2828.2 914.3 v-66 M2837.7 609.8 v57 M2847.1 914.0 v-45 M2856.6 610.1 v55 M2866.1 913.7 v-57 M2875.6 610.4 v69 M2885.1 913.5 v-34 M2894.6 610.7 v57 M2904.1 913.2 v-41 M2913.6 611.0 v42 M2923.1 912.9 v-68 M2932.6 611.2 v54 M2942.1 912.6 v-57 M2951.6 611.5 v68 M2961.1 912.3 v-75 M2970.6 611.8 v51 M2980.1 912.1 v-60 M2989.6 612.1 v54 M2999.1 911.8 v-55 M3008.6 612.3 v64 M3018.1 911.5 v-52 M3027.6 612.6 v56 M3037.1 911.2 v-53 M3046.6 612.9 v77 M3056.1 911.0 v-64 M3065.6 613.2 v74 M3075.1 910.7 v-77" fill="none" stroke="#00e000" stroke-width="5.4" stroke-linecap="round"/>
<path d="M349.2 545 L348.4 600" fill="none" stroke="#00e800" stroke-width="6" stroke-linecap="round"/>
<line x1="527.2" y1="521" x2="527.2" y2="973" stroke="#8c8c8c" stroke-width="3.2" stroke-dasharray="7 11.3" stroke-opacity="0.16"/>
<line x1="811.4" y1="521" x2="811.4" y2="973" stroke="#8c8c8c" stroke-width="3.2" stroke-dasharray="7 11.3" stroke-opacity="0.16"/>
<line x1="1095.6" y1="521" x2="1095.6" y2="973" stroke="#8c8c8c" stroke-width="3.2" stroke-dasharray="7 11.3" stroke-opacity="0.16"/>
<line x1="1379.8" y1="521" x2="1379.8" y2="973" stroke="#8c8c8c" stroke-width="3.2" stroke-dasharray="7 11.3" stroke-opacity="0.16"/>
<line x1="1664.0" y1="521" x2="1664.0" y2="973" stroke="#8c8c8c" stroke-width="3.2" stroke-dasharray="7 11.3" stroke-opacity="0.16"/>
<line x1="1948.2" y1="521" x2="1948.2" y2="973" stroke="#8c8c8c" stroke-width="3.2" stroke-dasharray="7 11.3" stroke-opacity="0.16"/>
<line x1="2232.4" y1="521" x2="2232.4" y2="973" stroke="#8c8c8c" stroke-width="3.2" stroke-dasharray="7 11.3" stroke-opacity="0.16"/>
<line x1="2516.6" y1="521" x2="2516.6" y2="973" stroke="#8c8c8c" stroke-width="3.2" stroke-dasharray="7 11.3" stroke-opacity="0.16"/>
<line x1="2800.8" y1="521" x2="2800.8" y2="973" stroke="#8c8c8c" stroke-width="3.2" stroke-dasharray="7 11.3" stroke-opacity="0.16"/>
<line x1="243" y1="744" x2="3085" y2="744" stroke="#8c8c8c" stroke-width="3.2" stroke-dasharray="8 10.3" stroke-opacity="0.16"/>
<rect x="243" y="511" width="2842" height="462" fill="none" stroke="#a0a0a0" stroke-width="3"/>
<line x1="243.0" y1="965" x2="243.0" y2="995" stroke="#b0b0b0" stroke-width="3.5" />
<line x1="243.0" y1="511" x2="243.0" y2="517" stroke="#b0b0b0" stroke-width="3" />
<line x1="527.2" y1="965" x2="527.2" y2="995" stroke="#b0b0b0" stroke-width="3.5" />
<line x1="527.2" y1="511" x2="527.2" y2="517" stroke="#b0b0b0" stroke-width="3" />
<line x1="811.4" y1="965" x2="811.4" y2="995" stroke="#b0b0b0" stroke-width="3.5" />
<line x1="811.4" y1="511" x2="811.4" y2="517" stroke="#b0b0b0" stroke-width="3" />
<line x1="1095.6" y1="965" x2="1095.6" y2="995" stroke="#b0b0b0" stroke-width="3.5" />
<line x1="1095.6" y1="511" x2="1095.6" y2="517" stroke="#b0b0b0" stroke-width="3" />
<line x1="1379.8" y1="965" x2="1379.8" y2="995" stroke="#b0b0b0" stroke-width="3.5" />
<line x1="1379.8" y1="511" x2="1379.8" y2="517" stroke="#b0b0b0" stroke-width="3" />
<line x1="1664.0" y1="965" x2="1664.0" y2="995" stroke="#b0b0b0" stroke-width="3.5" />
<line x1="1664.0" y1="511" x2="1664.0" y2="517" stroke="#b0b0b0" stroke-width="3" />
<line x1="1948.2" y1="965" x2="1948.2" y2="995" stroke="#b0b0b0" stroke-width="3.5" />
<line x1="1948.2" y1="511" x2="1948.2" y2="517" stroke="#b0b0b0" stroke-width="3" />
<line x1="2232.4" y1="965" x2="2232.4" y2="995" stroke="#b0b0b0" stroke-width="3.5" />
<line x1="2232.4" y1="511" x2="2232.4" y2="517" stroke="#b0b0b0" stroke-width="3" />
<line x1="2516.6" y1="965" x2="2516.6" y2="995" stroke="#b0b0b0" stroke-width="3.5" />
<line x1="2516.6" y1="511" x2="2516.6" y2="517" stroke="#b0b0b0" stroke-width="3" />
<line x1="2800.8" y1="965" x2="2800.8" y2="995" stroke="#b0b0b0" stroke-width="3.5" />
<line x1="2800.8" y1="511" x2="2800.8" y2="517" stroke="#b0b0b0" stroke-width="3" />
<line x1="3085.0" y1="965" x2="3085.0" y2="995" stroke="#b0b0b0" stroke-width="3.5" />
<line x1="3085.0" y1="511" x2="3085.0" y2="517" stroke="#b0b0b0" stroke-width="3" />
<line x1="222" y1="511" x2="243" y2="511" stroke="#b0b0b0" stroke-width="3.5" />
<line x1="222" y1="744" x2="243" y2="744" stroke="#b0b0b0" stroke-width="3.5" />
<line x1="222" y1="973" x2="243" y2="973" stroke="#b0b0b0" stroke-width="3.5" />
<text x="95" y="523" font-size="41" fill="#c4c4c4" font-weight="bold" textLength="120" lengthAdjust="spacingAndGlyphs" >540mA</text>
<text x="115" y="756" font-size="41" fill="#c4c4c4" font-weight="bold" textLength="100" lengthAdjust="spacingAndGlyphs" >45mA</text>
<text x="82" y="985" font-size="41" fill="#c4c4c4" font-weight="bold" textLength="133" lengthAdjust="spacingAndGlyphs" >-450mA</text>
<text x="207.0" y="1037" font-size="41" fill="#c4c4c4" font-weight="bold" textLength="71" lengthAdjust="spacingAndGlyphs" >0.0s</text>
<text x="491.20000000000005" y="1037" font-size="41" fill="#c4c4c4" font-weight="bold" textLength="71" lengthAdjust="spacingAndGlyphs" >0.3s</text>
<text x="775.4" y="1037" font-size="41" fill="#c4c4c4" font-weight="bold" textLength="71" lengthAdjust="spacingAndGlyphs" >0.6s</text>
<text x="1059.6" y="1037" font-size="41" fill="#c4c4c4" font-weight="bold" textLength="71" lengthAdjust="spacingAndGlyphs" >0.9s</text>
<text x="1343.8" y="1037" font-size="41" fill="#c4c4c4" font-weight="bold" textLength="71" lengthAdjust="spacingAndGlyphs" >1.2s</text>
<text x="1628.0" y="1037" font-size="41" fill="#c4c4c4" font-weight="bold" textLength="71" lengthAdjust="spacingAndGlyphs" >1.5s</text>
<text x="1912.2" y="1037" font-size="41" fill="#c4c4c4" font-weight="bold" textLength="71" lengthAdjust="spacingAndGlyphs" >1.8s</text>
<text x="2196.4" y="1037" font-size="41" fill="#c4c4c4" font-weight="bold" textLength="71" lengthAdjust="spacingAndGlyphs" >2.1s</text>
<text x="2480.6" y="1037" font-size="41" fill="#c4c4c4" font-weight="bold" textLength="71" lengthAdjust="spacingAndGlyphs" >2.4s</text>
<text x="2764.8" y="1037" font-size="41" fill="#c4c4c4" font-weight="bold" textLength="71" lengthAdjust="spacingAndGlyphs" >2.7s</text>
<text x="3049" y="1037" font-size="41" fill="#c4c4c4" font-weight="bold" textLength="69" lengthAdjust="spacingAndGlyphs" >3.0s</text>
<g fill="none" stroke="#2c2cf6" stroke-width="4.5" stroke-linejoin="miter">
<path d="M2765 1493 L169.5 1493 L169.5 2039 L2834 2039 L2834 1493 L2790 1493"/>
<path d="M506 1493 L506 2039"/>
<path d="M657 1493 L657 2039"/>
<path d="M964 1493 L964 2039"/>
<path d="M1076 1493 L1076 2039"/>
<path d="M1386 1493 L1386 2039"/>
<path d="M1519 1493 L1519 2039"/>
<path d="M1942 1493 L1942 2039"/>
<path d="M2234 1493 L2234 2039"/>
<path d="M2352 1493 L2352 2039"/>
<path d="M1820.6 1930 L1820.6 2039"/>
<path d="M2698.6 1560 L2698.6 2039"/>
<path d="M2834 1594 L2886.6 1594 L2886.6 1734"/>
<path d="M2767.5 1473 L2767.5 1397 L2902.5 1397 L2902.5 1410"/>
<path d="M2902.5 1438 L2902.5 1470"/>
<path d="M2902.5 1462 L2788.5 1462 L2788.5 1473"/>
<circle cx="2900.3" cy="1423.6" r="12" stroke="#4848c4" stroke-width="3.4"/>
</g>
<rect x="500.5" y="1487.0" width="11" height="12" rx="1.5" fill="#0c0cff"/>
<rect x="500.5" y="2033.0" width="11" height="12" rx="1.5" fill="#0c0cff"/>
<rect x="651.5" y="1487.0" width="11" height="12" rx="1.5" fill="#0c0cff"/>
<rect x="651.5" y="2033.0" width="11" height="12" rx="1.5" fill="#0c0cff"/>
<rect x="958.5" y="1487.0" width="11" height="12" rx="1.5" fill="#0c0cff"/>
<rect x="958.5" y="2033.0" width="11" height="12" rx="1.5" fill="#0c0cff"/>
<rect x="1070.5" y="1487.0" width="11" height="12" rx="1.5" fill="#0c0cff"/>
<rect x="1070.5" y="2033.0" width="11" height="12" rx="1.5" fill="#0c0cff"/>
<rect x="1380.5" y="1487.0" width="11" height="12" rx="1.5" fill="#0c0cff"/>
<rect x="1380.5" y="2033.0" width="11" height="12" rx="1.5" fill="#0c0cff"/>
<rect x="1513.5" y="1487.0" width="11" height="12" rx="1.5" fill="#0c0cff"/>
<rect x="1513.5" y="2033.0" width="11" height="12" rx="1.5" fill="#0c0cff"/>
<rect x="1936.5" y="1487.0" width="11" height="12" rx="1.5" fill="#0c0cff"/>
<rect x="1936.5" y="2033.0" width="11" height="12" rx="1.5" fill="#0c0cff"/>
<rect x="2228.5" y="1487.0" width="11" height="12" rx="1.5" fill="#0c0cff"/>
<rect x="2228.5" y="2033.0" width="11" height="12" rx="1.5" fill="#0c0cff"/>
<rect x="2346.5" y="1487.0" width="11" height="12" rx="1.5" fill="#0c0cff"/>
<rect x="2346.5" y="2033.0" width="11" height="12" rx="1.5" fill="#0c0cff"/>
<rect x="1815.1" y="2033.0" width="11" height="12" rx="1.5" fill="#0c0cff"/>
<rect x="2693.1" y="2033.0" width="11" height="12" rx="1.5" fill="#0c0cff"/>
<rect x="2828.5" y="1588.0" width="11" height="12" rx="1.5" fill="#0c0cff"/>
<rect x="2897.0" y="1456.0" width="11" height="12" rx="1.5" fill="#0c0cff"/>
<rect x="2898.5" y="1409.5" width="8" height="9" rx="1.5" fill="#0c0cff"/>
<path d="M2876.6 1734 L2896.6 1734 L2886.6 1745 Z" fill="#7070f4" stroke="#3c3cf0" stroke-width="2.5" stroke-linejoin="round"/>
<path d="M2892.8 1476 L2911.8 1476 L2902.3 1487 Z" fill="#7070f4" stroke="#3c3cf0" stroke-width="2.5" stroke-linejoin="round"/>
<path d="M2834 1522 q11 1 10 7 q-1 6 -9 6 q10 1 9 7 q-1 6 -9 6 q10 1 9 6 q-1 6 -10 6" fill="none" stroke="#4040b0" stroke-width="3.4"/>
<rect x="2826.5" y="1534.5" width="14" height="5" fill="#00008c" />
<rect x="2826.5" y="1546.5" width="12" height="5" fill="#00008c" />
<g fill="none" stroke="#5656b8" stroke-width="3.2"><path d="M2764 1491 L2771 1479 L2783 1479 L2790 1491 L2783 1503.5 L2771 1503.5 Z"/><path d="M2770 1480 L2783 1502 M2783 1480 L2770 1502" stroke-opacity="0.5"/></g>
<rect x="2764" y="1466.5" width="7.5" height="7" fill="#1a1ab0" />
<rect x="2785" y="1466.5" width="7.5" height="7" fill="#1a1ab0" />
<g transform="translate(80,1585)">
<rect x="0" y="0" width="369" height="63" fill="none" stroke="#3a3aff" stroke-width="3.8"/>
<rect x="15" y="7" width="316" height="47.5" fill="none" stroke="#2c2cf6" stroke-width="4"/>
<path d="M53.5 7 L53.5 54.5 M90.5 7 L90.5 54.5 M128.5 7 L128.5 54.5 M159 7 L159 54.5 M188.5 7 L188.5 54.5 M227 7 L227 54.5 M263 7 L263 54.5 M300.5 7 L300.5 54.5" stroke="#4040c4" stroke-width="3.6" fill="none"/>
<rect x="5" y="28.2" width="20" height="6.6" fill="#00008c"/>
<path d="M20 18.7 h23" stroke="#4e4a46" stroke-opacity="0.78" stroke-width="6.8" stroke-dasharray="4.6 1.2" fill="none"/>
<path d="M20.5 44.3 h27" stroke="#4e4a46" stroke-opacity="0.68" stroke-width="6.8" stroke-dasharray="2 1 5 1.2 5 1.2" fill="none"/>
<rect x="43.5" y="28.2" width="20" height="6.6" fill="#00008c"/>
<rect x="48.0" y="1.5" width="11" height="12" rx="1.2" fill="#0c0cff"/>
<rect x="48.0" y="48.5" width="11" height="12" rx="1.2" fill="#0c0cff"/>
<path d="M58.5 18.7 h23" stroke="#4e4a46" stroke-opacity="0.78" stroke-width="6.8" stroke-dasharray="4.6 1.2" fill="none"/>
<path d="M59.0 44.3 h27" stroke="#4e4a46" stroke-opacity="0.68" stroke-width="6.8" stroke-dasharray="2 1 5 1.2 5 1.2" fill="none"/>
<rect x="80.5" y="28.2" width="20" height="6.6" fill="#00008c"/>
<rect x="85.0" y="1.5" width="11" height="12" rx="1.2" fill="#0c0cff"/>
<rect x="85.0" y="48.5" width="11" height="12" rx="1.2" fill="#0c0cff"/>
<path d="M95.5 18.7 h23" stroke="#4e4a46" stroke-opacity="0.78" stroke-width="6.8" stroke-dasharray="4.6 1.2" fill="none"/>
<path d="M96.0 44.3 h27" stroke="#4e4a46" stroke-opacity="0.68" stroke-width="6.8" stroke-dasharray="2 1 5 1.2 5 1.2" fill="none"/>
<rect x="118.5" y="28.2" width="20" height="6.6" fill="#00008c"/>
<rect x="123.0" y="1.5" width="11" height="12" rx="1.2" fill="#0c0cff"/>
<rect x="123.0" y="48.5" width="11" height="12" rx="1.2" fill="#0c0cff"/>
<path d="M133.5 18.7 h23" stroke="#4e4a46" stroke-opacity="0.78" stroke-width="6.8" stroke-dasharray="4.6 1.2" fill="none"/>
<path d="M134.0 44.3 h27" stroke="#4e4a46" stroke-opacity="0.68" stroke-width="6.8" stroke-dasharray="2 1 5 1.2 5 1.2" fill="none"/>
<rect x="149" y="28.2" width="20" height="6.6" fill="#00008c"/>
<rect x="153.5" y="1.5" width="11" height="12" rx="1.2" fill="#0c0cff"/>
<rect x="153.5" y="48.5" width="11" height="12" rx="1.2" fill="#0c0cff"/>
<path d="M164 18.7 h23" stroke="#4e4a46" stroke-opacity="0.78" stroke-width="6.8" stroke-dasharray="4.6 1.2" fill="none"/>
<path d="M164.5 44.3 h27" stroke="#4e4a46" stroke-opacity="0.68" stroke-width="6.8" stroke-dasharray="2 1 5 1.2 5 1.2" fill="none"/>
<rect x="178.5" y="28.2" width="20" height="6.6" fill="#00008c"/>
<rect x="183.0" y="1.5" width="11" height="12" rx="1.2" fill="#0c0cff"/>
<rect x="183.0" y="48.5" width="11" height="12" rx="1.2" fill="#0c0cff"/>
<path d="M193.5 18.7 h23" stroke="#4e4a46" stroke-opacity="0.78" stroke-width="6.8" stroke-dasharray="4.6 1.2" fill="none"/>
<path d="M194.0 44.3 h27" stroke="#4e4a46" stroke-opacity="0.68" stroke-width="6.8" stroke-dasharray="2 1 5 1.2 5 1.2" fill="none"/>
<rect x="217" y="28.2" width="20" height="6.6" fill="#00008c"/>
<rect x="221.5" y="1.5" width="11" height="12" rx="1.2" fill="#0c0cff"/>
<rect x="221.5" y="48.5" width="11" height="12" rx="1.2" fill="#0c0cff"/>
<path d="M232 18.7 h23" stroke="#4e4a46" stroke-opacity="0.78" stroke-width="6.8" stroke-dasharray="4.6 1.2" fill="none"/>
<path d="M232.5 44.3 h27" stroke="#4e4a46" stroke-opacity="0.68" stroke-width="6.8" stroke-dasharray="2 1 5 1.2 5 1.2" fill="none"/>
<rect x="253" y="28.2" width="20" height="6.6" fill="#00008c"/>
<rect x="257.5" y="1.5" width="11" height="12" rx="1.2" fill="#0c0cff"/>
<rect x="257.5" y="48.5" width="11" height="12" rx="1.2" fill="#0c0cff"/>
<path d="M268 18.7 h23" stroke="#4e4a46" stroke-opacity="0.78" stroke-width="6.8" stroke-dasharray="4.6 1.2" fill="none"/>
<path d="M268.5 44.3 h27" stroke="#4e4a46" stroke-opacity="0.68" stroke-width="6.8" stroke-dasharray="2 1 5 1.2 5 1.2" fill="none"/>
<rect x="290.5" y="28.2" width="20" height="6.6" fill="#00008c"/>
<rect x="295.0" y="1.5" width="11" height="12" rx="1.2" fill="#0c0cff"/>
<rect x="295.0" y="48.5" width="11" height="12" rx="1.2" fill="#0c0cff"/>
<path d="M305.5 18.7 h23" stroke="#4e4a46" stroke-opacity="0.78" stroke-width="6.8" stroke-dasharray="4.6 1.2" fill="none"/>
<path d="M306.0 44.3 h27" stroke="#4e4a46" stroke-opacity="0.68" stroke-width="6.8" stroke-dasharray="2 1 5 1.2 5 1.2" fill="none"/>
<rect x="321" y="28.2" width="20" height="6.6" fill="#00008c"/>
<path d="M336 18.7 h23" stroke="#4e4a46" stroke-opacity="0.78" stroke-width="6.8" stroke-dasharray="4.6 1.2" fill="none"/>
<path d="M336.5 44.3 h27" stroke="#4e4a46" stroke-opacity="0.68" stroke-width="6.8" stroke-dasharray="2 1 5 1.2 5 1.2" fill="none"/>
</g>
<g transform="translate(204,1710.5)">
<rect x="0" y="0" width="369" height="63" fill="none" stroke="#3a3aff" stroke-width="3.8"/>
<rect x="15" y="7" width="316" height="47.5" fill="none" stroke="#2c2cf6" stroke-width="4"/>
<path d="M53.5 7 L53.5 54.5 M90.5 7 L90.5 54.5 M128.5 7 L128.5 54.5 M159 7 L159 54.5 M188.5 7 L188.5 54.5 M227 7 L227 54.5 M263 7 L263 54.5 M300.5 7 L300.5 54.5" stroke="#4040c4" stroke-width="3.6" fill="none"/>
<rect x="5" y="28.2" width="20" height="6.6" fill="#00008c"/>
<path d="M20 18.7 h23" stroke="#4e4a46" stroke-opacity="0.78" stroke-width="6.8" stroke-dasharray="4.6 1.2" fill="none"/>
<path d="M20.5 44.3 h27" stroke="#4e4a46" stroke-opacity="0.68" stroke-width="6.8" stroke-dasharray="2 1 5 1.2 5 1.2" fill="none"/>
<rect x="43.5" y="28.2" width="20" height="6.6" fill="#00008c"/>
<rect x="48.0" y="1.5" width="11" height="12" rx="1.2" fill="#0c0cff"/>
<rect x="48.0" y="48.5" width="11" height="12" rx="1.2" fill="#0c0cff"/>
<path d="M58.5 18.7 h23" stroke="#4e4a46" stroke-opacity="0.78" stroke-width="6.8" stroke-dasharray="4.6 1.2" fill="none"/>
<path d="M59.0 44.3 h27" stroke="#4e4a46" stroke-opacity="0.68" stroke-width="6.8" stroke-dasharray="2 1 5 1.2 5 1.2" fill="none"/>
<rect x="80.5" y="28.2" width="20" height="6.6" fill="#00008c"/>
<rect x="85.0" y="1.5" width="11" height="12" rx="1.2" fill="#0c0cff"/>
<rect x="85.0" y="48.5" width="11" height="12" rx="1.2" fill="#0c0cff"/>
<path d="M95.5 18.7 h23" stroke="#4e4a46" stroke-opacity="0.78" stroke-width="6.8" stroke-dasharray="4.6 1.2" fill="none"/>
<path d="M96.0 44.3 h27" stroke="#4e4a46" stroke-opacity="0.68" stroke-width="6.8" stroke-dasharray="2 1 5 1.2 5 1.2" fill="none"/>
<rect x="118.5" y="28.2" width="20" height="6.6" fill="#00008c"/>
<rect x="123.0" y="1.5" width="11" height="12" rx="1.2" fill="#0c0cff"/>
<rect x="123.0" y="48.5" width="11" height="12" rx="1.2" fill="#0c0cff"/>
<path d="M133.5 18.7 h23" stroke="#4e4a46" stroke-opacity="0.78" stroke-width="6.8" stroke-dasharray="4.6 1.2" fill="none"/>
<path d="M134.0 44.3 h27" stroke="#4e4a46" stroke-opacity="0.68" stroke-width="6.8" stroke-dasharray="2 1 5 1.2 5 1.2" fill="none"/>
<rect x="149" y="28.2" width="20" height="6.6" fill="#00008c"/>
<rect x="153.5" y="1.5" width="11" height="12" rx="1.2" fill="#0c0cff"/>
<rect x="153.5" y="48.5" width="11" height="12" rx="1.2" fill="#0c0cff"/>
<path d="M164 18.7 h23" stroke="#4e4a46" stroke-opacity="0.78" stroke-width="6.8" stroke-dasharray="4.6 1.2" fill="none"/>
<path d="M164.5 44.3 h27" stroke="#4e4a46" stroke-opacity="0.68" stroke-width="6.8" stroke-dasharray="2 1 5 1.2 5 1.2" fill="none"/>
<rect x="178.5" y="28.2" width="20" height="6.6" fill="#00008c"/>
<rect x="183.0" y="1.5" width="11" height="12" rx="1.2" fill="#0c0cff"/>
<rect x="183.0" y="48.5" width="11" height="12" rx="1.2" fill="#0c0cff"/>
<path d="M193.5 18.7 h23" stroke="#4e4a46" stroke-opacity="0.78" stroke-width="6.8" stroke-dasharray="4.6 1.2" fill="none"/>
<path d="M194.0 44.3 h27" stroke="#4e4a46" stroke-opacity="0.68" stroke-width="6.8" stroke-dasharray="2 1 5 1.2 5 1.2" fill="none"/>
<rect x="217" y="28.2" width="20" height="6.6" fill="#00008c"/>
<rect x="221.5" y="1.5" width="11" height="12" rx="1.2" fill="#0c0cff"/>
<rect x="221.5" y="48.5" width="11" height="12" rx="1.2" fill="#0c0cff"/>
<path d="M232 18.7 h23" stroke="#4e4a46" stroke-opacity="0.78" stroke-width="6.8" stroke-dasharray="4.6 1.2" fill="none"/>
<path d="M232.5 44.3 h27" stroke="#4e4a46" stroke-opacity="0.68" stroke-width="6.8" stroke-dasharray="2 1 5 1.2 5 1.2" fill="none"/>
<rect x="253" y="28.2" width="20" height="6.6" fill="#00008c"/>
<rect x="257.5" y="1.5" width="11" height="12" rx="1.2" fill="#0c0cff"/>
<rect x="257.5" y="48.5" width="11" height="12" rx="1.2" fill="#0c0cff"/>
<path d="M268 18.7 h23" stroke="#4e4a46" stroke-opacity="0.78" stroke-width="6.8" stroke-dasharray="4.6 1.2" fill="none"/>
<path d="M268.5 44.3 h27" stroke="#4e4a46" stroke-opacity="0.68" stroke-width="6.8" stroke-dasharray="2 1 5 1.2 5 1.2" fill="none"/>
<rect x="290.5" y="28.2" width="20" height="6.6" fill="#00008c"/>
<rect x="295.0" y="1.5" width="11" height="12" rx="1.2" fill="#0c0cff"/>
<rect x="295.0" y="48.5" width="11" height="12" rx="1.2" fill="#0c0cff"/>
<path d="M305.5 18.7 h23" stroke="#4e4a46" stroke-opacity="0.78" stroke-width="6.8" stroke-dasharray="4.6 1.2" fill="none"/>
<path d="M306.0 44.3 h27" stroke="#4e4a46" stroke-opacity="0.68" stroke-width="6.8" stroke-dasharray="2 1 5 1.2 5 1.2" fill="none"/>
<rect x="321" y="28.2" width="20" height="6.6" fill="#00008c"/>
<path d="M336 18.7 h23" stroke="#4e4a46" stroke-opacity="0.78" stroke-width="6.8" stroke-dasharray="4.6 1.2" fill="none"/>
<path d="M336.5 44.3 h27" stroke="#4e4a46" stroke-opacity="0.68" stroke-width="6.8" stroke-dasharray="2 1 5 1.2 5 1.2" fill="none"/>
</g>
<g transform="translate(565,1922)">
<rect x="0" y="0" width="369" height="63" fill="none" stroke="#3a3aff" stroke-width="3.8"/>
<rect x="15" y="7" width="316" height="47.5" fill="none" stroke="#2c2cf6" stroke-width="4"/>
<path d="M53.5 7 L53.5 54.5 M90.5 7 L90.5 54.5 M128.5 7 L128.5 54.5 M159 7 L159 54.5 M188.5 7 L188.5 54.5 M227 7 L227 54.5 M263 7 L263 54.5 M300.5 7 L300.5 54.5" stroke="#4040c4" stroke-width="3.6" fill="none"/>
<rect x="5" y="28.2" width="20" height="6.6" fill="#00008c"/>
<path d="M20 18.7 h23" stroke="#4e4a46" stroke-opacity="0.78" stroke-width="6.8" stroke-dasharray="4.6 1.2" fill="none"/>
<path d="M20.5 44.3 h27" stroke="#4e4a46" stroke-opacity="0.68" stroke-width="6.8" stroke-dasharray="2 1 5 1.2 5 1.2" fill="none"/>
<rect x="43.5" y="28.2" width="20" height="6.6" fill="#00008c"/>
<rect x="48.0" y="1.5" width="11" height="12" rx="1.2" fill="#0c0cff"/>
<rect x="48.0" y="48.5" width="11" height="12" rx="1.2" fill="#0c0cff"/>
<path d="M58.5 18.7 h23" stroke="#4e4a46" stroke-opacity="0.78" stroke-width="6.8" stroke-dasharray="4.6 1.2" fill="none"/>
<path d="M59.0 44.3 h27" stroke="#4e4a46" stroke-opacity="0.68" stroke-width="6.8" stroke-dasharray="2 1 5 1.2 5 1.2" fill="none"/>
<rect x="80.5" y="28.2" width="20" height="6.6" fill="#00008c"/>
<rect x="85.0" y="1.5" width="11" height="12" rx="1.2" fill="#0c0cff"/>
<rect x="85.0" y="48.5" width="11" height="12" rx="1.2" fill="#0c0cff"/>
<path d="M95.5 18.7 h23" stroke="#4e4a46" stroke-opacity="0.78" stroke-width="6.8" stroke-dasharray="4.6 1.2" fill="none"/>
<path d="M96.0 44.3 h27" stroke="#4e4a46" stroke-opacity="0.68" stroke-width="6.8" stroke-dasharray="2 1 5 1.2 5 1.2" fill="none"/>
<rect x="118.5" y="28.2" width="20" height="6.6" fill="#00008c"/>
<rect x="123.0" y="1.5" width="11" height="12" rx="1.2" fill="#0c0cff"/>
<rect x="123.0" y="48.5" width="11" height="12" rx="1.2" fill="#0c0cff"/>
<path d="M133.5 18.7 h23" stroke="#4e4a46" stroke-opacity="0.78" stroke-width="6.8" stroke-dasharray="4.6 1.2" fill="none"/>
<path d="M134.0 44.3 h27" stroke="#4e4a46" stroke-opacity="0.68" stroke-width="6.8" stroke-dasharray="2 1 5 1.2 5 1.2" fill="none"/>
<rect x="149" y="28.2" width="20" height="6.6" fill="#00008c"/>
<rect x="153.5" y="1.5" width="11" height="12" rx="1.2" fill="#0c0cff"/>
<rect x="153.5" y="48.5" width="11" height="12" rx="1.2" fill="#0c0cff"/>
<path d="M164 18.7 h23" stroke="#4e4a46" stroke-opacity="0.78" stroke-width="6.8" stroke-dasharray="4.6 1.2" fill="none"/>
<path d="M164.5 44.3 h27" stroke="#4e4a46" stroke-opacity="0.68" stroke-width="6.8" stroke-dasharray="2 1 5 1.2 5 1.2" fill="none"/>
<rect x="178.5" y="28.2" width="20" height="6.6" fill="#00008c"/>
<rect x="183.0" y="1.5" width="11" height="12" rx="1.2" fill="#0c0cff"/>
<rect x="183.0" y="48.5" width="11" height="12" rx="1.2" fill="#0c0cff"/>
<path d="M193.5 18.7 h23" stroke="#4e4a46" stroke-opacity="0.78" stroke-width="6.8" stroke-dasharray="4.6 1.2" fill="none"/>
<path d="M194.0 44.3 h27" stroke="#4e4a46" stroke-opacity="0.68" stroke-width="6.8" stroke-dasharray="2 1 5 1.2 5 1.2" fill="none"/>
<rect x="217" y="28.2" width="20" height="6.6" fill="#00008c"/>
<rect x="221.5" y="1.5" width="11" height="12" rx="1.2" fill="#0c0cff"/>
<rect x="221.5" y="48.5" width="11" height="12" rx="1.2" fill="#0c0cff"/>
<path d="M232 18.7 h23" stroke="#4e4a46" stroke-opacity="0.78" stroke-width="6.8" stroke-dasharray="4.6 1.2" fill="none"/>
<path d="M232.5 44.3 h27" stroke="#4e4a46" stroke-opacity="0.68" stroke-width="6.8" stroke-dasharray="2 1 5 1.2 5 1.2" fill="none"/>
<rect x="253" y="28.2" width="20" height="6.6" fill="#00008c"/>
<rect x="257.5" y="1.5" width="11" height="12" rx="1.2" fill="#0c0cff"/>
<rect x="257.5" y="48.5" width="11" height="12" rx="1.2" fill="#0c0cff"/>
<path d="M268 18.7 h23" stroke="#4e4a46" stroke-opacity="0.78" stroke-width="6.8" stroke-dasharray="4.6 1.2" fill="none"/>
<path d="M268.5 44.3 h27" stroke="#4e4a46" stroke-opacity="0.68" stroke-width="6.8" stroke-dasharray="2 1 5 1.2 5 1.2" fill="none"/>
<rect x="290.5" y="28.2" width="20" height="6.6" fill="#00008c"/>
<rect x="295.0" y="1.5" width="11" height="12" rx="1.2" fill="#0c0cff"/>
<rect x="295.0" y="48.5" width="11" height="12" rx="1.2" fill="#0c0cff"/>
<path d="M305.5 18.7 h23" stroke="#4e4a46" stroke-opacity="0.78" stroke-width="6.8" stroke-dasharray="4.6 1.2" fill="none"/>
<path d="M306.0 44.3 h27" stroke="#4e4a46" stroke-opacity="0.68" stroke-width="6.8" stroke-dasharray="2 1 5 1.2 5 1.2" fill="none"/>
<rect x="321" y="28.2" width="20" height="6.6" fill="#00008c"/>
<path d="M336 18.7 h23" stroke="#4e4a46" stroke-opacity="0.78" stroke-width="6.8" stroke-dasharray="4.6 1.2" fill="none"/>
<path d="M336.5 44.3 h27" stroke="#4e4a46" stroke-opacity="0.68" stroke-width="6.8" stroke-dasharray="2 1 5 1.2 5 1.2" fill="none"/>
</g>
<g transform="translate(700,1836.5)">
<rect x="0" y="0" width="369" height="63" fill="none" stroke="#3a3aff" stroke-width="3.8"/>
<rect x="15" y="7" width="316" height="47.5" fill="none" stroke="#2c2cf6" stroke-width="4"/>
<path d="M53.5 7 L53.5 54.5 M90.5 7 L90.5 54.5 M128.5 7 L128.5 54.5 M159 7 L159 54.5 M188.5 7 L188.5 54.5 M227 7 L227 54.5 M263 7 L263 54.5 M300.5 7 L300.5 54.5" stroke="#4040c4" stroke-width="3.6" fill="none"/>
<rect x="5" y="28.2" width="20" height="6.6" fill="#00008c"/>
<path d="M20 18.7 h23" stroke="#4e4a46" stroke-opacity="0.78" stroke-width="6.8" stroke-dasharray="4.6 1.2" fill="none"/>
<path d="M20.5 44.3 h27" stroke="#4e4a46" stroke-opacity="0.68" stroke-width="6.8" stroke-dasharray="2 1 5 1.2 5 1.2" fill="none"/>
<rect x="43.5" y="28.2" width="20" height="6.6" fill="#00008c"/>
<rect x="48.0" y="1.5" width="11" height="12" rx="1.2" fill="#0c0cff"/>
<rect x="48.0" y="48.5" width="11" height="12" rx="1.2" fill="#0c0cff"/>
<path d="M58.5 18.7 h23" stroke="#4e4a46" stroke-opacity="0.78" stroke-width="6.8" stroke-dasharray="4.6 1.2" fill="none"/>
<path d="M59.0 44.3 h27" stroke="#4e4a46" stroke-opacity="0.68" stroke-width="6.8" stroke-dasharray="2 1 5 1.2 5 1.2" fill="none"/>
<rect x="80.5" y="28.2" width="20" height="6.6" fill="#00008c"/>
<rect x="85.0" y="1.5" width="11" height="12" rx="1.2" fill="#0c0cff"/>
<rect x="85.0" y="48.5" width="11" height="12" rx="1.2" fill="#0c0cff"/>
<path d="M95.5 18.7 h23" stroke="#4e4a46" stroke-opacity="0.78" stroke-width="6.8" stroke-dasharray="4.6 1.2" fill="none"/>
<path d="M96.0 44.3 h27" stroke="#4e4a46" stroke-opacity="0.68" stroke-width="6.8" stroke-dasharray="2 1 5 1.2 5 1.2" fill="none"/>
<rect x="118.5" y="28.2" width="20" height="6.6" fill="#00008c"/>
<rect x="123.0" y="1.5" width="11" height="12" rx="1.2" fill="#0c0cff"/>
<rect x="123.0" y="48.5" width="11" height="12" rx="1.2" fill="#0c0cff"/>
<path d="M133.5 18.7 h23" stroke="#4e4a46" stroke-opacity="0.78" stroke-width="6.8" stroke-dasharray="4.6 1.2" fill="none"/>
<path d="M134.0 44.3 h27" stroke="#4e4a46" stroke-opacity="0.68" stroke-width="6.8" stroke-dasharray="2 1 5 1.2 5 1.2" fill="none"/>
<rect x="149" y="28.2" width="20" height="6.6" fill="#00008c"/>
<rect x="153.5" y="1.5" width="11" height="12" rx="1.2" fill="#0c0cff"/>
<rect x="153.5" y="48.5" width="11" height="12" rx="1.2" fill="#0c0cff"/>
<path d="M164 18.7 h23" stroke="#4e4a46" stroke-opacity="0.78" stroke-width="6.8" stroke-dasharray="4.6 1.2" fill="none"/>
<path d="M164.5 44.3 h27" stroke="#4e4a46" stroke-opacity="0.68" stroke-width="6.8" stroke-dasharray="2 1 5 1.2 5 1.2" fill="none"/>
<rect x="178.5" y="28.2" width="20" height="6.6" fill="#00008c"/>
<rect x="183.0" y="1.5" width="11" height="12" rx="1.2" fill="#0c0cff"/>
<rect x="183.0" y="48.5" width="11" height="12" rx="1.2" fill="#0c0cff"/>
<path d="M193.5 18.7 h23" stroke="#4e4a46" stroke-opacity="0.78" stroke-width="6.8" stroke-dasharray="4.6 1.2" fill="none"/>
<path d="M194.0 44.3 h27" stroke="#4e4a46" stroke-opacity="0.68" stroke-width="6.8" stroke-dasharray="2 1 5 1.2 5 1.2" fill="none"/>
<rect x="217" y="28.2" width="20" height="6.6" fill="#00008c"/>
<rect x="221.5" y="1.5" width="11" height="12" rx="1.2" fill="#0c0cff"/>
<rect x="221.5" y="48.5" width="11" height="12" rx="1.2" fill="#0c0cff"/>
<path d="M232 18.7 h23" stroke="#4e4a46" stroke-opacity="0.78" stroke-width="6.8" stroke-dasharray="4.6 1.2" fill="none"/>
<path d="M232.5 44.3 h27" stroke="#4e4a46" stroke-opacity="0.68" stroke-width="6.8" stroke-dasharray="2 1 5 1.2 5 1.2" fill="none"/>
<rect x="253" y="28.2" width="20" height="6.6" fill="#00008c"/>
<rect x="257.5" y="1.5" width="11" height="12" rx="1.2" fill="#0c0cff"/>
<rect x="257.5" y="48.5" width="11" height="12" rx="1.2" fill="#0c0cff"/>
<path d="M268 18.7 h23" stroke="#4e4a46" stroke-opacity="0.78" stroke-width="6.8" stroke-dasharray="4.6 1.2" fill="none"/>
<path d="M268.5 44.3 h27" stroke="#4e4a46" stroke-opacity="0.68" stroke-width="6.8" stroke-dasharray="2 1 5 1.2 5 1.2" fill="none"/>
<rect x="290.5" y="28.2" width="20" height="6.6" fill="#00008c"/>
<rect x="295.0" y="1.5" width="11" height="12" rx="1.2" fill="#0c0cff"/>
<rect x="295.0" y="48.5" width="11" height="12" rx="1.2" fill="#0c0cff"/>
<path d="M305.5 18.7 h23" stroke="#4e4a46" stroke-opacity="0.78" stroke-width="6.8" stroke-dasharray="4.6 1.2" fill="none"/>
<path d="M306.0 44.3 h27" stroke="#4e4a46" stroke-opacity="0.68" stroke-width="6.8" stroke-dasharray="2 1 5 1.2 5 1.2" fill="none"/>
<rect x="321" y="28.2" width="20" height="6.6" fill="#00008c"/>
<path d="M336 18.7 h23" stroke="#4e4a46" stroke-opacity="0.78" stroke-width="6.8" stroke-dasharray="4.6 1.2" fill="none"/>
<path d="M336.5 44.3 h27" stroke="#4e4a46" stroke-opacity="0.68" stroke-width="6.8" stroke-dasharray="2 1 5 1.2 5 1.2" fill="none"/>
</g>
<g transform="translate(987,1751)">
<rect x="0" y="0" width="369" height="63" fill="none" stroke="#3a3aff" stroke-width="3.8"/>
<rect x="15" y="7" width="316" height="47.5" fill="none" stroke="#2c2cf6" stroke-width="4"/>
<path d="M53.5 7 L53.5 54.5 M90.5 7 L90.5 54.5 M128.5 7 L128.5 54.5 M159 7 L159 54.5 M188.5 7 L188.5 54.5 M227 7 L227 54.5 M263 7 L263 54.5 M300.5 7 L300.5 54.5" stroke="#4040c4" stroke-width="3.6" fill="none"/>
<rect x="5" y="28.2" width="20" height="6.6" fill="#00008c"/>
<path d="M20 18.7 h23" stroke="#4e4a46" stroke-opacity="0.78" stroke-width="6.8" stroke-dasharray="4.6 1.2" fill="none"/>
<path d="M20.5 44.3 h27" stroke="#4e4a46" stroke-opacity="0.68" stroke-width="6.8" stroke-dasharray="2 1 5 1.2 5 1.2" fill="none"/>
<rect x="43.5" y="28.2" width="20" height="6.6" fill="#00008c"/>
<rect x="48.0" y="1.5" width="11" height="12" rx="1.2" fill="#0c0cff"/>
<rect x="48.0" y="48.5" width="11" height="12" rx="1.2" fill="#0c0cff"/>
<path d="M58.5 18.7 h23" stroke="#4e4a46" stroke-opacity="0.78" stroke-width="6.8" stroke-dasharray="4.6 1.2" fill="none"/>
<path d="M59.0 44.3 h27" stroke="#4e4a46" stroke-opacity="0.68" stroke-width="6.8" stroke-dasharray="2 1 5 1.2 5 1.2" fill="none"/>
<rect x="80.5" y="28.2" width="20" height="6.6" fill="#00008c"/>
<rect x="85.0" y="1.5" width="11" height="12" rx="1.2" fill="#0c0cff"/>
<rect x="85.0" y="48.5" width="11" height="12" rx="1.2" fill="#0c0cff"/>
<path d="M95.5 18.7 h23" stroke="#4e4a46" stroke-opacity="0.78" stroke-width="6.8" stroke-dasharray="4.6 1.2" fill="none"/>
<path d="M96.0 44.3 h27" stroke="#4e4a46" stroke-opacity="0.68" stroke-width="6.8" stroke-dasharray="2 1 5 1.2 5 1.2" fill="none"/>
<rect x="118.5" y="28.2" width="20" height="6.6" fill="#00008c"/>
<rect x="123.0" y="1.5" width="11" height="12" rx="1.2" fill="#0c0cff"/>
<rect x="123.0" y="48.5" width="11" height="12" rx="1.2" fill="#0c0cff"/>
<path d="M133.5 18.7 h23" stroke="#4e4a46" stroke-opacity="0.78" stroke-width="6.8" stroke-dasharray="4.6 1.2" fill="none"/>
<path d="M134.0 44.3 h27" stroke="#4e4a46" stroke-opacity="0.68" stroke-width="6.8" stroke-dasharray="2 1 5 1.2 5 1.2" fill="none"/>
<rect x="149" y="28.2" width="20" height="6.6" fill="#00008c"/>
<rect x="153.5" y="1.5" width="11" height="12" rx="1.2" fill="#0c0cff"/>
<rect x="153.5" y="48.5" width="11" height="12" rx="1.2" fill="#0c0cff"/>
<path d="M164 18.7 h23" stroke="#4e4a46" stroke-opacity="0.78" stroke-width="6.8" stroke-dasharray="4.6 1.2" fill="none"/>
<path d="M164.5 44.3 h27" stroke="#4e4a46" stroke-opacity="0.68" stroke-width="6.8" stroke-dasharray="2 1 5 1.2 5 1.2" fill="none"/>
<rect x="178.5" y="28.2" width="20" height="6.6" fill="#00008c"/>
<rect x="183.0" y="1.5" width="11" height="12" rx="1.2" fill="#0c0cff"/>
<rect x="183.0" y="48.5" width="11" height="12" rx="1.2" fill="#0c0cff"/>
<path d="M193.5 18.7 h23" stroke="#4e4a46" stroke-opacity="0.78" stroke-width="6.8" stroke-dasharray="4.6 1.2" fill="none"/>
<path d="M194.0 44.3 h27" stroke="#4e4a46" stroke-opacity="0.68" stroke-width="6.8" stroke-dasharray="2 1 5 1.2 5 1.2" fill="none"/>
<rect x="217" y="28.2" width="20" height="6.6" fill="#00008c"/>
<rect x="221.5" y="1.5" width="11" height="12" rx="1.2" fill="#0c0cff"/>
<rect x="221.5" y="48.5" width="11" height="12" rx="1.2" fill="#0c0cff"/>
<path d="M232 18.7 h23" stroke="#4e4a46" stroke-opacity="0.78" stroke-width="6.8" stroke-dasharray="4.6 1.2" fill="none"/>
<path d="M232.5 44.3 h27" stroke="#4e4a46" stroke-opacity="0.68" stroke-width="6.8" stroke-dasharray="2 1 5 1.2 5 1.2" fill="none"/>
<rect x="253" y="28.2" width="20" height="6.6" fill="#00008c"/>
<rect x="257.5" y="1.5" width="11" height="12" rx="1.2" fill="#0c0cff"/>
<rect x="257.5" y="48.5" width="11" height="12" rx="1.2" fill="#0c0cff"/>
<path d="M268 18.7 h23" stroke="#4e4a46" stroke-opacity="0.78" stroke-width="6.8" stroke-dasharray="4.6 1.2" fill="none"/>
<path d="M268.5 44.3 h27" stroke="#4e4a46" stroke-opacity="0.68" stroke-width="6.8" stroke-dasharray="2 1 5 1.2 5 1.2" fill="none"/>
<rect x="290.5" y="28.2" width="20" height="6.6" fill="#00008c"/>
<rect x="295.0" y="1.5" width="11" height="12" rx="1.2" fill="#0c0cff"/>
<rect x="295.0" y="48.5" width="11" height="12" rx="1.2" fill="#0c0cff"/>
<path d="M305.5 18.7 h23" stroke="#4e4a46" stroke-opacity="0.78" stroke-width="6.8" stroke-dasharray="4.6 1.2" fill="none"/>
<path d="M306.0 44.3 h27" stroke="#4e4a46" stroke-opacity="0.68" stroke-width="6.8" stroke-dasharray="2 1 5 1.2 5 1.2" fill="none"/>
<rect x="321" y="28.2" width="20" height="6.6" fill="#00008c"/>
<path d="M336 18.7 h23" stroke="#4e4a46" stroke-opacity="0.78" stroke-width="6.8" stroke-dasharray="4.6 1.2" fill="none"/>
<path d="M336.5 44.3 h27" stroke="#4e4a46" stroke-opacity="0.68" stroke-width="6.8" stroke-dasharray="2 1 5 1.2 5 1.2" fill="none"/>
</g>
<g transform="translate(1122,1655)">
<rect x="0" y="0" width="369" height="63" fill="none" stroke="#3a3aff" stroke-width="3.8"/>
<rect x="15" y="7" width="316" height="47.5" fill="none" stroke="#2c2cf6" stroke-width="4"/>
<path d="M53.5 7 L53.5 54.5 M90.5 7 L90.5 54.5 M128.5 7 L128.5 54.5 M159 7 L159 54.5 M188.5 7 L188.5 54.5 M227 7 L227 54.5 M263 7 L263 54.5 M300.5 7 L300.5 54.5" stroke="#4040c4" stroke-width="3.6" fill="none"/>
<rect x="5" y="28.2" width="20" height="6.6" fill="#00008c"/>
<path d="M20 18.7 h23" stroke="#4e4a46" stroke-opacity="0.78" stroke-width="6.8" stroke-dasharray="4.6 1.2" fill="none"/>
<path d="M20.5 44.3 h27" stroke="#4e4a46" stroke-opacity="0.68" stroke-width="6.8" stroke-dasharray="2 1 5 1.2 5 1.2" fill="none"/>
<rect x="43.5" y="28.2" width="20" height="6.6" fill="#00008c"/>
<rect x="48.0" y="1.5" width="11" height="12" rx="1.2" fill="#0c0cff"/>
<rect x="48.0" y="48.5" width="11" height="12" rx="1.2" fill="#0c0cff"/>
<path d="M58.5 18.7 h23" stroke="#4e4a46" stroke-opacity="0.78" stroke-width="6.8" stroke-dasharray="4.6 1.2" fill="none"/>
<path d="M59.0 44.3 h27" stroke="#4e4a46" stroke-opacity="0.68" stroke-width="6.8" stroke-dasharray="2 1 5 1.2 5 1.2" fill="none"/>
<rect x="80.5" y="28.2" width="20" height="6.6" fill="#00008c"/>
<rect x="85.0" y="1.5" width="11" height="12" rx="1.2" fill="#0c0cff"/>
<rect x="85.0" y="48.5" width="11" height="12" rx="1.2" fill="#0c0cff"/>
<path d="M95.5 18.7 h23" stroke="#4e4a46" stroke-opacity="0.78" stroke-width="6.8" stroke-dasharray="4.6 1.2" fill="none"/>
<path d="M96.0 44.3 h27" stroke="#4e4a46" stroke-opacity="0.68" stroke-width="6.8" stroke-dasharray="2 1 5 1.2 5 1.2" fill="none"/>
<rect x="118.5" y="28.2" width="20" height="6.6" fill="#00008c"/>
<rect x="123.0" y="1.5" width="11" height="12" rx="1.2" fill="#0c0cff"/>
<rect x="123.0" y="48.5" width="11" height="12" rx="1.2" fill="#0c0cff"/>
<path d="M133.5 18.7 h23" stroke="#4e4a46" stroke-opacity="0.78" stroke-width="6.8" stroke-dasharray="4.6 1.2" fill="none"/>
<path d="M134.0 44.3 h27" stroke="#4e4a46" stroke-opacity="0.68" stroke-width="6.8" stroke-dasharray="2 1 5 1.2 5 1.2" fill="none"/>
<rect x="149" y="28.2" width="20" height="6.6" fill="#00008c"/>
<rect x="153.5" y="1.5" width="11" height="12" rx="1.2" fill="#0c0cff"/>
<rect x="153.5" y="48.5" width="11" height="12" rx="1.2" fill="#0c0cff"/>
<path d="M164 18.7 h23" stroke="#4e4a46" stroke-opacity="0.78" stroke-width="6.8" stroke-dasharray="4.6 1.2" fill="none"/>
<path d="M164.5 44.3 h27" stroke="#4e4a46" stroke-opacity="0.68" stroke-width="6.8" stroke-dasharray="2 1 5 1.2 5 1.2" fill="none"/>
<rect x="178.5" y="28.2" width="20" height="6.6" fill="#00008c"/>
<rect x="183.0" y="1.5" width="11" height="12" rx="1.2" fill="#0c0cff"/>
<rect x="183.0" y="48.5" width="11" height="12" rx="1.2" fill="#0c0cff"/>
<path d="M193.5 18.7 h23" stroke="#4e4a46" stroke-opacity="0.78" stroke-width="6.8" stroke-dasharray="4.6 1.2" fill="none"/>
<path d="M194.0 44.3 h27" stroke="#4e4a46" stroke-opacity="0.68" stroke-width="6.8" stroke-dasharray="2 1 5 1.2 5 1.2" fill="none"/>
<rect x="217" y="28.2" width="20" height="6.6" fill="#00008c"/>
<rect x="221.5" y="1.5" width="11" height="12" rx="1.2" fill="#0c0cff"/>
<rect x="221.5" y="48.5" width="11" height="12" rx="1.2" fill="#0c0cff"/>
<path d="M232 18.7 h23" stroke="#4e4a46" stroke-opacity="0.78" stroke-width="6.8" stroke-dasharray="4.6 1.2" fill="none"/>
<path d="M232.5 44.3 h27" stroke="#4e4a46" stroke-opacity="0.68" stroke-width="6.8" stroke-dasharray="2 1 5 1.2 5 1.2" fill="none"/>
<rect x="253" y="28.2" width="20" height="6.6" fill="#00008c"/>
<rect x="257.5" y="1.5" width="11" height="12" rx="1.2" fill="#0c0cff"/>
<rect x="257.5" y="48.5" width="11" height="12" rx="1.2" fill="#0c0cff"/>
<path d="M268 18.7 h23" stroke="#4e4a46" stroke-opacity="0.78" stroke-width="6.8" stroke-dasharray="4.6 1.2" fill="none"/>
<path d="M268.5 44.3 h27" stroke="#4e4a46" stroke-opacity="0.68" stroke-width="6.8" stroke-dasharray="2 1 5 1.2 5 1.2" fill="none"/>
<rect x="290.5" y="28.2" width="20" height="6.6" fill="#00008c"/>
<rect x="295.0" y="1.5" width="11" height="12" rx="1.2" fill="#0c0cff"/>
<rect x="295.0" y="48.5" width="11" height="12" rx="1.2" fill="#0c0cff"/>
<path d="M305.5 18.7 h23" stroke="#4e4a46" stroke-opacity="0.78" stroke-width="6.8" stroke-dasharray="4.6 1.2" fill="none"/>
<path d="M306.0 44.3 h27" stroke="#4e4a46" stroke-opacity="0.68" stroke-width="6.8" stroke-dasharray="2 1 5 1.2 5 1.2" fill="none"/>
<rect x="321" y="28.2" width="20" height="6.6" fill="#00008c"/>
<path d="M336 18.7 h23" stroke="#4e4a46" stroke-opacity="0.78" stroke-width="6.8" stroke-dasharray="4.6 1.2" fill="none"/>
<path d="M336.5 44.3 h27" stroke="#4e4a46" stroke-opacity="0.68" stroke-width="6.8" stroke-dasharray="2 1 5 1.2 5 1.2" fill="none"/>
</g>
<g transform="translate(1430.7,1553)">
<rect x="0" y="0" width="369" height="63" fill="none" stroke="#3a3aff" stroke-width="3.8"/>
<rect x="15" y="7" width="316" height="47.5" fill="none" stroke="#2c2cf6" stroke-width="4"/>
<path d="M53.5 7 L53.5 54.5 M90.5 7 L90.5 54.5 M128.5 7 L128.5 54.5 M159 7 L159 54.5 M188.5 7 L188.5 54.5 M227 7 L227 54.5 M263 7 L263 54.5 M300.5 7 L300.5 54.5" stroke="#4040c4" stroke-width="3.6" fill="none"/>
<rect x="5" y="28.2" width="20" height="6.6" fill="#00008c"/>
<path d="M20 18.7 h23" stroke="#4e4a46" stroke-opacity="0.78" stroke-width="6.8" stroke-dasharray="4.6 1.2" fill="none"/>
<path d="M20.5 44.3 h27" stroke="#4e4a46" stroke-opacity="0.68" stroke-width="6.8" stroke-dasharray="2 1 5 1.2 5 1.2" fill="none"/>
<rect x="43.5" y="28.2" width="20" height="6.6" fill="#00008c"/>
<rect x="48.0" y="1.5" width="11" height="12" rx="1.2" fill="#0c0cff"/>
<rect x="48.0" y="48.5" width="11" height="12" rx="1.2" fill="#0c0cff"/>
<path d="M58.5 18.7 h23" stroke="#4e4a46" stroke-opacity="0.78" stroke-width="6.8" stroke-dasharray="4.6 1.2" fill="none"/>
<path d="M59.0 44.3 h27" stroke="#4e4a46" stroke-opacity="0.68" stroke-width="6.8" stroke-dasharray="2 1 5 1.2 5 1.2" fill="none"/>
<rect x="80.5" y="28.2" width="20" height="6.6" fill="#00008c"/>
<rect x="85.0" y="1.5" width="11" height="12" rx="1.2" fill="#0c0cff"/>
<rect x="85.0" y="48.5" width="11" height="12" rx="1.2" fill="#0c0cff"/>
<path d="M95.5 18.7 h23" stroke="#4e4a46" stroke-opacity="0.78" stroke-width="6.8" stroke-dasharray="4.6 1.2" fill="none"/>
<path d="M96.0 44.3 h27" stroke="#4e4a46" stroke-opacity="0.68" stroke-width="6.8" stroke-dasharray="2 1 5 1.2 5 1.2" fill="none"/>
<rect x="118.5" y="28.2" width="20" height="6.6" fill="#00008c"/>
<rect x="123.0" y="1.5" width="11" height="12" rx="1.2" fill="#0c0cff"/>
<rect x="123.0" y="48.5" width="11" height="12" rx="1.2" fill="#0c0cff"/>
<path d="M133.5 18.7 h23" stroke="#4e4a46" stroke-opacity="0.78" stroke-width="6.8" stroke-dasharray="4.6 1.2" fill="none"/>
<path d="M134.0 44.3 h27" stroke="#4e4a46" stroke-opacity="0.68" stroke-width="6.8" stroke-dasharray="2 1 5 1.2 5 1.2" fill="none"/>
<rect x="149" y="28.2" width="20" height="6.6" fill="#00008c"/>
<rect x="153.5" y="1.5" width="11" height="12" rx="1.2" fill="#0c0cff"/>
<rect x="153.5" y="48.5" width="11" height="12" rx="1.2" fill="#0c0cff"/>
<path d="M164 18.7 h23" stroke="#4e4a46" stroke-opacity="0.78" stroke-width="6.8" stroke-dasharray="4.6 1.2" fill="none"/>
<path d="M164.5 44.3 h27" stroke="#4e4a46" stroke-opacity="0.68" stroke-width="6.8" stroke-dasharray="2 1 5 1.2 5 1.2" fill="none"/>
<rect x="178.5" y="28.2" width="20" height="6.6" fill="#00008c"/>
<rect x="183.0" y="1.5" width="11" height="12" rx="1.2" fill="#0c0cff"/>
<rect x="183.0" y="48.5" width="11" height="12" rx="1.2" fill="#0c0cff"/>
<path d="M193.5 18.7 h23" stroke="#4e4a46" stroke-opacity="0.78" stroke-width="6.8" stroke-dasharray="4.6 1.2" fill="none"/>
<path d="M194.0 44.3 h27" stroke="#4e4a46" stroke-opacity="0.68" stroke-width="6.8" stroke-dasharray="2 1 5 1.2 5 1.2" fill="none"/>
<rect x="217" y="28.2" width="20" height="6.6" fill="#00008c"/>
<rect x="221.5" y="1.5" width="11" height="12" rx="1.2" fill="#0c0cff"/>
<rect x="221.5" y="48.5" width="11" height="12" rx="1.2" fill="#0c0cff"/>
<path d="M232 18.7 h23" stroke="#4e4a46" stroke-opacity="0.78" stroke-width="6.8" stroke-dasharray="4.6 1.2" fill="none"/>
<path d="M232.5 44.3 h27" stroke="#4e4a46" stroke-opacity="0.68" stroke-width="6.8" stroke-dasharray="2 1 5 1.2 5 1.2" fill="none"/>
<rect x="253" y="28.2" width="20" height="6.6" fill="#00008c"/>
<rect x="257.5" y="1.5" width="11" height="12" rx="1.2" fill="#0c0cff"/>
<rect x="257.5" y="48.5" width="11" height="12" rx="1.2" fill="#0c0cff"/>
<path d="M268 18.7 h23" stroke="#4e4a46" stroke-opacity="0.78" stroke-width="6.8" stroke-dasharray="4.6 1.2" fill="none"/>
<path d="M268.5 44.3 h27" stroke="#4e4a46" stroke-opacity="0.68" stroke-width="6.8" stroke-dasharray="2 1 5 1.2 5 1.2" fill="none"/>
<rect x="290.5" y="28.2" width="20" height="6.6" fill="#00008c"/>
<rect x="295.0" y="1.5" width="11" height="12" rx="1.2" fill="#0c0cff"/>
<rect x="295.0" y="48.5" width="11" height="12" rx="1.2" fill="#0c0cff"/>
<path d="M305.5 18.7 h23" stroke="#4e4a46" stroke-opacity="0.78" stroke-width="6.8" stroke-dasharray="4.6 1.2" fill="none"/>
<path d="M306.0 44.3 h27" stroke="#4e4a46" stroke-opacity="0.68" stroke-width="6.8" stroke-dasharray="2 1 5 1.2 5 1.2" fill="none"/>
<rect x="321" y="28.2" width="20" height="6.6" fill="#00008c"/>
<path d="M336 18.7 h23" stroke="#4e4a46" stroke-opacity="0.78" stroke-width="6.8" stroke-dasharray="4.6 1.2" fill="none"/>
<path d="M336.5 44.3 h27" stroke="#4e4a46" stroke-opacity="0.68" stroke-width="6.8" stroke-dasharray="2 1 5 1.2 5 1.2" fill="none"/>
</g>
<g transform="translate(1557,1874)">
<rect x="0" y="0" width="369" height="63" fill="none" stroke="#3a3aff" stroke-width="3.8"/>
<rect x="15" y="7" width="316" height="47.5" fill="none" stroke="#2c2cf6" stroke-width="4"/>
<path d="M53.5 7 L53.5 54.5 M90.5 7 L90.5 54.5 M128.5 7 L128.5 54.5 M159 7 L159 54.5 M188.5 7 L188.5 54.5 M227 7 L227 54.5 M263 7 L263 54.5 M300.5 7 L300.5 54.5" stroke="#4040c4" stroke-width="3.6" fill="none"/>
<rect x="5" y="28.2" width="20" height="6.6" fill="#00008c"/>
<path d="M20 18.7 h23" stroke="#4e4a46" stroke-opacity="0.78" stroke-width="6.8" stroke-dasharray="4.6 1.2" fill="none"/>
<path d="M20.5 44.3 h27" stroke="#4e4a46" stroke-opacity="0.68" stroke-width="6.8" stroke-dasharray="2 1 5 1.2 5 1.2" fill="none"/>
<rect x="43.5" y="28.2" width="20" height="6.6" fill="#00008c"/>
<rect x="48.0" y="1.5" width="11" height="12" rx="1.2" fill="#0c0cff"/>
<rect x="48.0" y="48.5" width="11" height="12" rx="1.2" fill="#0c0cff"/>
<path d="M58.5 18.7 h23" stroke="#4e4a46" stroke-opacity="0.78" stroke-width="6.8" stroke-dasharray="4.6 1.2" fill="none"/>
<path d="M59.0 44.3 h27" stroke="#4e4a46" stroke-opacity="0.68" stroke-width="6.8" stroke-dasharray="2 1 5 1.2 5 1.2" fill="none"/>
<rect x="80.5" y="28.2" width="20" height="6.6" fill="#00008c"/>
<rect x="85.0" y="1.5" width="11" height="12" rx="1.2" fill="#0c0cff"/>
<rect x="85.0" y="48.5" width="11" height="12" rx="1.2" fill="#0c0cff"/>
<path d="M95.5 18.7 h23" stroke="#4e4a46" stroke-opacity="0.78" stroke-width="6.8" stroke-dasharray="4.6 1.2" fill="none"/>
<path d="M96.0 44.3 h27" stroke="#4e4a46" stroke-opacity="0.68" stroke-width="6.8" stroke-dasharray="2 1 5 1.2 5 1.2" fill="none"/>
<rect x="118.5" y="28.2" width="20" height="6.6" fill="#00008c"/>
<rect x="123.0" y="1.5" width="11" height="12" rx="1.2" fill="#0c0cff"/>
<rect x="123.0" y="48.5" width="11" height="12" rx="1.2" fill="#0c0cff"/>
<path d="M133.5 18.7 h23" stroke="#4e4a46" stroke-opacity="0.78" stroke-width="6.8" stroke-dasharray="4.6 1.2" fill="none"/>
<path d="M134.0 44.3 h27" stroke="#4e4a46" stroke-opacity="0.68" stroke-width="6.8" stroke-dasharray="2 1 5 1.2 5 1.2" fill="none"/>
<rect x="149" y="28.2" width="20" height="6.6" fill="#00008c"/>
<rect x="153.5" y="1.5" width="11" height="12" rx="1.2" fill="#0c0cff"/>
<rect x="153.5" y="48.5" width="11" height="12" rx="1.2" fill="#0c0cff"/>
<path d="M164 18.7 h23" stroke="#4e4a46" stroke-opacity="0.78" stroke-width="6.8" stroke-dasharray="4.6 1.2" fill="none"/>
<path d="M164.5 44.3 h27" stroke="#4e4a46" stroke-opacity="0.68" stroke-width="6.8" stroke-dasharray="2 1 5 1.2 5 1.2" fill="none"/>
<rect x="178.5" y="28.2" width="20" height="6.6" fill="#00008c"/>
<rect x="183.0" y="1.5" width="11" height="12" rx="1.2" fill="#0c0cff"/>
<rect x="183.0" y="48.5" width="11" height="12" rx="1.2" fill="#0c0cff"/>
<path d="M193.5 18.7 h23" stroke="#4e4a46" stroke-opacity="0.78" stroke-width="6.8" stroke-dasharray="4.6 1.2" fill="none"/>
<path d="M194.0 44.3 h27" stroke="#4e4a46" stroke-opacity="0.68" stroke-width="6.8" stroke-dasharray="2 1 5 1.2 5 1.2" fill="none"/>
<rect x="217" y="28.2" width="20" height="6.6" fill="#00008c"/>
<rect x="221.5" y="1.5" width="11" height="12" rx="1.2" fill="#0c0cff"/>
<rect x="221.5" y="48.5" width="11" height="12" rx="1.2" fill="#0c0cff"/>
<path d="M232 18.7 h23" stroke="#4e4a46" stroke-opacity="0.78" stroke-width="6.8" stroke-dasharray="4.6 1.2" fill="none"/>
<path d="M232.5 44.3 h27" stroke="#4e4a46" stroke-opacity="0.68" stroke-width="6.8" stroke-dasharray="2 1 5 1.2 5 1.2" fill="none"/>
<rect x="253" y="28.2" width="20" height="6.6" fill="#00008c"/>
<rect x="257.5" y="1.5" width="11" height="12" rx="1.2" fill="#0c0cff"/>
<rect x="257.5" y="48.5" width="11" height="12" rx="1.2" fill="#0c0cff"/>
<path d="M268 18.7 h23" stroke="#4e4a46" stroke-opacity="0.78" stroke-width="6.8" stroke-dasharray="4.6 1.2" fill="none"/>
<path d="M268.5 44.3 h27" stroke="#4e4a46" stroke-opacity="0.68" stroke-width="6.8" stroke-dasharray="2 1 5 1.2 5 1.2" fill="none"/>
<rect x="290.5" y="28.2" width="20" height="6.6" fill="#00008c"/>
<rect x="295.0" y="1.5" width="11" height="12" rx="1.2" fill="#0c0cff"/>
<rect x="295.0" y="48.5" width="11" height="12" rx="1.2" fill="#0c0cff"/>
<path d="M305.5 18.7 h23" stroke="#4e4a46" stroke-opacity="0.78" stroke-width="6.8" stroke-dasharray="4.6 1.2" fill="none"/>
<path d="M306.0 44.3 h27" stroke="#4e4a46" stroke-opacity="0.68" stroke-width="6.8" stroke-dasharray="2 1 5 1.2 5 1.2" fill="none"/>
<rect x="321" y="28.2" width="20" height="6.6" fill="#00008c"/>
<path d="M336 18.7 h23" stroke="#4e4a46" stroke-opacity="0.78" stroke-width="6.8" stroke-dasharray="4.6 1.2" fill="none"/>
<path d="M336.5 44.3 h27" stroke="#4e4a46" stroke-opacity="0.68" stroke-width="6.8" stroke-dasharray="2 1 5 1.2 5 1.2" fill="none"/>
</g>
<g transform="translate(1850,1796)">
<rect x="0" y="0" width="369" height="63" fill="none" stroke="#3a3aff" stroke-width="3.8"/>
<rect x="15" y="7" width="316" height="47.5" fill="none" stroke="#2c2cf6" stroke-width="4"/>
<path d="M53.5 7 L53.5 54.5 M90.5 7 L90.5 54.5 M128.5 7 L128.5 54.5 M159 7 L159 54.5 M188.5 7 L188.5 54.5 M227 7 L227 54.5 M263 7 L263 54.5 M300.5 7 L300.5 54.5" stroke="#4040c4" stroke-width="3.6" fill="none"/>
<rect x="5" y="28.2" width="20" height="6.6" fill="#00008c"/>
<path d="M20 18.7 h23" stroke="#4e4a46" stroke-opacity="0.78" stroke-width="6.8" stroke-dasharray="4.6 1.2" fill="none"/>
<path d="M20.5 44.3 h27" stroke="#4e4a46" stroke-opacity="0.68" stroke-width="6.8" stroke-dasharray="2 1 5 1.2 5 1.2" fill="none"/>
<rect x="43.5" y="28.2" width="20" height="6.6" fill="#00008c"/>
<rect x="48.0" y="1.5" width="11" height="12" rx="1.2" fill="#0c0cff"/>
<rect x="48.0" y="48.5" width="11" height="12" rx="1.2" fill="#0c0cff"/>
<path d="M58.5 18.7 h23" stroke="#4e4a46" stroke-opacity="0.78" stroke-width="6.8" stroke-dasharray="4.6 1.2" fill="none"/>
<path d="M59.0 44.3 h27" stroke="#4e4a46" stroke-opacity="0.68" stroke-width="6.8" stroke-dasharray="2 1 5 1.2 5 1.2" fill="none"/>
<rect x="80.5" y="28.2" width="20" height="6.6" fill="#00008c"/>
<rect x="85.0" y="1.5" width="11" height="12" rx="1.2" fill="#0c0cff"/>
<rect x="85.0" y="48.5" width="11" height="12" rx="1.2" fill="#0c0cff"/>
<path d="M95.5 18.7 h23" stroke="#4e4a46" stroke-opacity="0.78" stroke-width="6.8" stroke-dasharray="4.6 1.2" fill="none"/>
<path d="M96.0 44.3 h27" stroke="#4e4a46" stroke-opacity="0.68" stroke-width="6.8" stroke-dasharray="2 1 5 1.2 5 1.2" fill="none"/>
<rect x="118.5" y="28.2" width="20" height="6.6" fill="#00008c"/>
<rect x="123.0" y="1.5" width="11" height="12" rx="1.2" fill="#0c0cff"/>
<rect x="123.0" y="48.5" width="11" height="12" rx="1.2" fill="#0c0cff"/>
<path d="M133.5 18.7 h23" stroke="#4e4a46" stroke-opacity="0.78" stroke-width="6.8" stroke-dasharray="4.6 1.2" fill="none"/>
<path d="M134.0 44.3 h27" stroke="#4e4a46" stroke-opacity="0.68" stroke-width="6.8" stroke-dasharray="2 1 5 1.2 5 1.2" fill="none"/>
<rect x="149" y="28.2" width="20" height="6.6" fill="#00008c"/>
<rect x="153.5" y="1.5" width="11" height="12" rx="1.2" fill="#0c0cff"/>
<rect x="153.5" y="48.5" width="11" height="12" rx="1.2" fill="#0c0cff"/>
<path d="M164 18.7 h23" stroke="#4e4a46" stroke-opacity="0.78" stroke-width="6.8" stroke-dasharray="4.6 1.2" fill="none"/>
<path d="M164.5 44.3 h27" stroke="#4e4a46" stroke-opacity="0.68" stroke-width="6.8" stroke-dasharray="2 1 5 1.2 5 1.2" fill="none"/>
<rect x="178.5" y="28.2" width="20" height="6.6" fill="#00008c"/>
<rect x="183.0" y="1.5" width="11" height="12" rx="1.2" fill="#0c0cff"/>
<rect x="183.0" y="48.5" width="11" height="12" rx="1.2" fill="#0c0cff"/>
<path d="M193.5 18.7 h23" stroke="#4e4a46" stroke-opacity="0.78" stroke-width="6.8" stroke-dasharray="4.6 1.2" fill="none"/>
<path d="M194.0 44.3 h27" stroke="#4e4a46" stroke-opacity="0.68" stroke-width="6.8" stroke-dasharray="2 1 5 1.2 5 1.2" fill="none"/>
<rect x="217" y="28.2" width="20" height="6.6" fill="#00008c"/>
<rect x="221.5" y="1.5" width="11" height="12" rx="1.2" fill="#0c0cff"/>
<rect x="221.5" y="48.5" width="11" height="12" rx="1.2" fill="#0c0cff"/>
<path d="M232 18.7 h23" stroke="#4e4a46" stroke-opacity="0.78" stroke-width="6.8" stroke-dasharray="4.6 1.2" fill="none"/>
<path d="M232.5 44.3 h27" stroke="#4e4a46" stroke-opacity="0.68" stroke-width="6.8" stroke-dasharray="2 1 5 1.2 5 1.2" fill="none"/>
<rect x="253" y="28.2" width="20" height="6.6" fill="#00008c"/>
<rect x="257.5" y="1.5" width="11" height="12" rx="1.2" fill="#0c0cff"/>
<rect x="257.5" y="48.5" width="11" height="12" rx="1.2" fill="#0c0cff"/>
<path d="M268 18.7 h23" stroke="#4e4a46" stroke-opacity="0.78" stroke-width="6.8" stroke-dasharray="4.6 1.2" fill="none"/>
<path d="M268.5 44.3 h27" stroke="#4e4a46" stroke-opacity="0.68" stroke-width="6.8" stroke-dasharray="2 1 5 1.2 5 1.2" fill="none"/>
<rect x="290.5" y="28.2" width="20" height="6.6" fill="#00008c"/>
<rect x="295.0" y="1.5" width="11" height="12" rx="1.2" fill="#0c0cff"/>
<rect x="295.0" y="48.5" width="11" height="12" rx="1.2" fill="#0c0cff"/>
<path d="M305.5 18.7 h23" stroke="#4e4a46" stroke-opacity="0.78" stroke-width="6.8" stroke-dasharray="4.6 1.2" fill="none"/>
<path d="M306.0 44.3 h27" stroke="#4e4a46" stroke-opacity="0.68" stroke-width="6.8" stroke-dasharray="2 1 5 1.2 5 1.2" fill="none"/>
<rect x="321" y="28.2" width="20" height="6.6" fill="#00008c"/>
<path d="M336 18.7 h23" stroke="#4e4a46" stroke-opacity="0.78" stroke-width="6.8" stroke-dasharray="4.6 1.2" fill="none"/>
<path d="M336.5 44.3 h27" stroke="#4e4a46" stroke-opacity="0.68" stroke-width="6.8" stroke-dasharray="2 1 5 1.2 5 1.2" fill="none"/>
</g>
<g transform="translate(1971,1710.5)">
<rect x="0" y="0" width="369" height="63" fill="none" stroke="#3a3aff" stroke-width="3.8"/>
<rect x="15" y="7" width="316" height="47.5" fill="none" stroke="#2c2cf6" stroke-width="4"/>
<path d="M53.5 7 L53.5 54.5 M90.5 7 L90.5 54.5 M128.5 7 L128.5 54.5 M159 7 L159 54.5 M188.5 7 L188.5 54.5 M227 7 L227 54.5 M263 7 L263 54.5 M300.5 7 L300.5 54.5" stroke="#4040c4" stroke-width="3.6" fill="none"/>
<rect x="5" y="28.2" width="20" height="6.6" fill="#00008c"/>
<path d="M20 18.7 h23" stroke="#4e4a46" stroke-opacity="0.78" stroke-width="6.8" stroke-dasharray="4.6 1.2" fill="none"/>
<path d="M20.5 44.3 h27" stroke="#4e4a46" stroke-opacity="0.68" stroke-width="6.8" stroke-dasharray="2 1 5 1.2 5 1.2" fill="none"/>
<rect x="43.5" y="28.2" width="20" height="6.6" fill="#00008c"/>
<rect x="48.0" y="1.5" width="11" height="12" rx="1.2" fill="#0c0cff"/>
<rect x="48.0" y="48.5" width="11" height="12" rx="1.2" fill="#0c0cff"/>
<path d="M58.5 18.7 h23" stroke="#4e4a46" stroke-opacity="0.78" stroke-width="6.8" stroke-dasharray="4.6 1.2" fill="none"/>
<path d="M59.0 44.3 h27" stroke="#4e4a46" stroke-opacity="0.68" stroke-width="6.8" stroke-dasharray="2 1 5 1.2 5 1.2" fill="none"/>
<rect x="80.5" y="28.2" width="20" height="6.6" fill="#00008c"/>
<rect x="85.0" y="1.5" width="11" height="12" rx="1.2" fill="#0c0cff"/>
<rect x="85.0" y="48.5" width="11" height="12" rx="1.2" fill="#0c0cff"/>
<path d="M95.5 18.7 h23" stroke="#4e4a46" stroke-opacity="0.78" stroke-width="6.8" stroke-dasharray="4.6 1.2" fill="none"/>
<path d="M96.0 44.3 h27" stroke="#4e4a46" stroke-opacity="0.68" stroke-width="6.8" stroke-dasharray="2 1 5 1.2 5 1.2" fill="none"/>
<rect x="118.5" y="28.2" width="20" height="6.6" fill="#00008c"/>
<rect x="123.0" y="1.5" width="11" height="12" rx="1.2" fill="#0c0cff"/>
<rect x="123.0" y="48.5" width="11" height="12" rx="1.2" fill="#0c0cff"/>
<path d="M133.5 18.7 h23" stroke="#4e4a46" stroke-opacity="0.78" stroke-width="6.8" stroke-dasharray="4.6 1.2" fill="none"/>
<path d="M134.0 44.3 h27" stroke="#4e4a46" stroke-opacity="0.68" stroke-width="6.8" stroke-dasharray="2 1 5 1.2 5 1.2" fill="none"/>
<rect x="149" y="28.2" width="20" height="6.6" fill="#00008c"/>
<rect x="153.5" y="1.5" width="11" height="12" rx="1.2" fill="#0c0cff"/>
<rect x="153.5" y="48.5" width="11" height="12" rx="1.2" fill="#0c0cff"/>
<path d="M164 18.7 h23" stroke="#4e4a46" stroke-opacity="0.78" stroke-width="6.8" stroke-dasharray="4.6 1.2" fill="none"/>
<path d="M164.5 44.3 h27" stroke="#4e4a46" stroke-opacity="0.68" stroke-width="6.8" stroke-dasharray="2 1 5 1.2 5 1.2" fill="none"/>
<rect x="178.5" y="28.2" width="20" height="6.6" fill="#00008c"/>
<rect x="183.0" y="1.5" width="11" height="12" rx="1.2" fill="#0c0cff"/>
<rect x="183.0" y="48.5" width="11" height="12" rx="1.2" fill="#0c0cff"/>
<path d="M193.5 18.7 h23" stroke="#4e4a46" stroke-opacity="0.78" stroke-width="6.8" stroke-dasharray="4.6 1.2" fill="none"/>
<path d="M194.0 44.3 h27" stroke="#4e4a46" stroke-opacity="0.68" stroke-width="6.8" stroke-dasharray="2 1 5 1.2 5 1.2" fill="none"/>
<rect x="217" y="28.2" width="20" height="6.6" fill="#00008c"/>
<rect x="221.5" y="1.5" width="11" height="12" rx="1.2" fill="#0c0cff"/>
<rect x="221.5" y="48.5" width="11" height="12" rx="1.2" fill="#0c0cff"/>
<path d="M232 18.7 h23" stroke="#4e4a46" stroke-opacity="0.78" stroke-width="6.8" stroke-dasharray="4.6 1.2" fill="none"/>
<path d="M232.5 44.3 h27" stroke="#4e4a46" stroke-opacity="0.68" stroke-width="6.8" stroke-dasharray="2 1 5 1.2 5 1.2" fill="none"/>
<rect x="253" y="28.2" width="20" height="6.6" fill="#00008c"/>
<rect x="257.5" y="1.5" width="11" height="12" rx="1.2" fill="#0c0cff"/>
<rect x="257.5" y="48.5" width="11" height="12" rx="1.2" fill="#0c0cff"/>
<path d="M268 18.7 h23" stroke="#4e4a46" stroke-opacity="0.78" stroke-width="6.8" stroke-dasharray="4.6 1.2" fill="none"/>
<path d="M268.5 44.3 h27" stroke="#4e4a46" stroke-opacity="0.68" stroke-width="6.8" stroke-dasharray="2 1 5 1.2 5 1.2" fill="none"/>
<rect x="290.5" y="28.2" width="20" height="6.6" fill="#00008c"/>
<rect x="295.0" y="1.5" width="11" height="12" rx="1.2" fill="#0c0cff"/>
<rect x="295.0" y="48.5" width="11" height="12" rx="1.2" fill="#0c0cff"/>
<path d="M305.5 18.7 h23" stroke="#4e4a46" stroke-opacity="0.78" stroke-width="6.8" stroke-dasharray="4.6 1.2" fill="none"/>
<path d="M306.0 44.3 h27" stroke="#4e4a46" stroke-opacity="0.68" stroke-width="6.8" stroke-dasharray="2 1 5 1.2 5 1.2" fill="none"/>
<rect x="321" y="28.2" width="20" height="6.6" fill="#00008c"/>
<path d="M336 18.7 h23" stroke="#4e4a46" stroke-opacity="0.78" stroke-width="6.8" stroke-dasharray="4.6 1.2" fill="none"/>
<path d="M336.5 44.3 h27" stroke="#4e4a46" stroke-opacity="0.68" stroke-width="6.8" stroke-dasharray="2 1 5 1.2 5 1.2" fill="none"/>
</g>
<g transform="translate(2301.7,1624)">
<rect x="0" y="0" width="369" height="63" fill="none" stroke="#3a3aff" stroke-width="3.8"/>
<rect x="15" y="7" width="316" height="47.5" fill="none" stroke="#2c2cf6" stroke-width="4"/>
<path d="M53.5 7 L53.5 54.5 M90.5 7 L90.5 54.5 M128.5 7 L128.5 54.5 M159 7 L159 54.5 M188.5 7 L188.5 54.5 M227 7 L227 54.5 M263 7 L263 54.5 M300.5 7 L300.5 54.5" stroke="#4040c4" stroke-width="3.6" fill="none"/>
<rect x="5" y="28.2" width="20" height="6.6" fill="#00008c"/>
<path d="M20 18.7 h23" stroke="#4e4a46" stroke-opacity="0.78" stroke-width="6.8" stroke-dasharray="4.6 1.2" fill="none"/>
<path d="M20.5 44.3 h27" stroke="#4e4a46" stroke-opacity="0.68" stroke-width="6.8" stroke-dasharray="2 1 5 1.2 5 1.2" fill="none"/>
<rect x="43.5" y="28.2" width="20" height="6.6" fill="#00008c"/>
<rect x="48.0" y="1.5" width="11" height="12" rx="1.2" fill="#0c0cff"/>
<rect x="48.0" y="48.5" width="11" height="12" rx="1.2" fill="#0c0cff"/>
<path d="M58.5 18.7 h23" stroke="#4e4a46" stroke-opacity="0.78" stroke-width="6.8" stroke-dasharray="4.6 1.2" fill="none"/>
<path d="M59.0 44.3 h27" stroke="#4e4a46" stroke-opacity="0.68" stroke-width="6.8" stroke-dasharray="2 1 5 1.2 5 1.2" fill="none"/>
<rect x="80.5" y="28.2" width="20" height="6.6" fill="#00008c"/>
<rect x="85.0" y="1.5" width="11" height="12" rx="1.2" fill="#0c0cff"/>
<rect x="85.0" y="48.5" width="11" height="12" rx="1.2" fill="#0c0cff"/>
<path d="M95.5 18.7 h23" stroke="#4e4a46" stroke-opacity="0.78" stroke-width="6.8" stroke-dasharray="4.6 1.2" fill="none"/>
<path d="M96.0 44.3 h27" stroke="#4e4a46" stroke-opacity="0.68" stroke-width="6.8" stroke-dasharray="2 1 5 1.2 5 1.2" fill="none"/>
<rect x="118.5" y="28.2" width="20" height="6.6" fill="#00008c"/>
<rect x="123.0" y="1.5" width="11" height="12" rx="1.2" fill="#0c0cff"/>
<rect x="123.0" y="48.5" width="11" height="12" rx="1.2" fill="#0c0cff"/>
<path d="M133.5 18.7 h23" stroke="#4e4a46" stroke-opacity="0.78" stroke-width="6.8" stroke-dasharray="4.6 1.2" fill="none"/>
<path d="M134.0 44.3 h27" stroke="#4e4a46" stroke-opacity="0.68" stroke-width="6.8" stroke-dasharray="2 1 5 1.2 5 1.2" fill="none"/>
<rect x="149" y="28.2" width="20" height="6.6" fill="#00008c"/>
<rect x="153.5" y="1.5" width="11" height="12" rx="1.2" fill="#0c0cff"/>
<rect x="153.5" y="48.5" width="11" height="12" rx="1.2" fill="#0c0cff"/>
<path d="M164 18.7 h23" stroke="#4e4a46" stroke-opacity="0.78" stroke-width="6.8" stroke-dasharray="4.6 1.2" fill="none"/>
<path d="M164.5 44.3 h27" stroke="#4e4a46" stroke-opacity="0.68" stroke-width="6.8" stroke-dasharray="2 1 5 1.2 5 1.2" fill="none"/>
<rect x="178.5" y="28.2" width="20" height="6.6" fill="#00008c"/>
<rect x="183.0" y="1.5" width="11" height="12" rx="1.2" fill="#0c0cff"/>
<rect x="183.0" y="48.5" width="11" height="12" rx="1.2" fill="#0c0cff"/>
<path d="M193.5 18.7 h23" stroke="#4e4a46" stroke-opacity="0.78" stroke-width="6.8" stroke-dasharray="4.6 1.2" fill="none"/>
<path d="M194.0 44.3 h27" stroke="#4e4a46" stroke-opacity="0.68" stroke-width="6.8" stroke-dasharray="2 1 5 1.2 5 1.2" fill="none"/>
<rect x="217" y="28.2" width="20" height="6.6" fill="#00008c"/>
<rect x="221.5" y="1.5" width="11" height="12" rx="1.2" fill="#0c0cff"/>
<rect x="221.5" y="48.5" width="11" height="12" rx="1.2" fill="#0c0cff"/>
<path d="M232 18.7 h23" stroke="#4e4a46" stroke-opacity="0.78" stroke-width="6.8" stroke-dasharray="4.6 1.2" fill="none"/>
<path d="M232.5 44.3 h27" stroke="#4e4a46" stroke-opacity="0.68" stroke-width="6.8" stroke-dasharray="2 1 5 1.2 5 1.2" fill="none"/>
<rect x="253" y="28.2" width="20" height="6.6" fill="#00008c"/>
<rect x="257.5" y="1.5" width="11" height="12" rx="1.2" fill="#0c0cff"/>
<rect x="257.5" y="48.5" width="11" height="12" rx="1.2" fill="#0c0cff"/>
<path d="M268 18.7 h23" stroke="#4e4a46" stroke-opacity="0.78" stroke-width="6.8" stroke-dasharray="4.6 1.2" fill="none"/>
<path d="M268.5 44.3 h27" stroke="#4e4a46" stroke-opacity="0.68" stroke-width="6.8" stroke-dasharray="2 1 5 1.2 5 1.2" fill="none"/>
<rect x="290.5" y="28.2" width="20" height="6.6" fill="#00008c"/>
<rect x="295.0" y="1.5" width="11" height="12" rx="1.2" fill="#0c0cff"/>
<rect x="295.0" y="48.5" width="11" height="12" rx="1.2" fill="#0c0cff"/>
<path d="M305.5 18.7 h23" stroke="#4e4a46" stroke-opacity="0.78" stroke-width="6.8" stroke-dasharray="4.6 1.2" fill="none"/>
<path d="M306.0 44.3 h27" stroke="#4e4a46" stroke-opacity="0.68" stroke-width="6.8" stroke-dasharray="2 1 5 1.2 5 1.2" fill="none"/>
<rect x="321" y="28.2" width="20" height="6.6" fill="#00008c"/>
<path d="M336 18.7 h23" stroke="#4e4a46" stroke-opacity="0.78" stroke-width="6.8" stroke-dasharray="4.6 1.2" fill="none"/>
<path d="M336.5 44.3 h27" stroke="#4e4a46" stroke-opacity="0.68" stroke-width="6.8" stroke-dasharray="2 1 5 1.2 5 1.2" fill="none"/>
</g>
<g transform="translate(2367,1547.5)">
<rect x="0" y="0" width="369" height="63" fill="none" stroke="#3a3aff" stroke-width="3.8"/>
<rect x="15" y="7" width="316" height="47.5" fill="none" stroke="#2c2cf6" stroke-width="4"/>
<path d="M53.5 7 L53.5 54.5 M90.5 7 L90.5 54.5 M128.5 7 L128.5 54.5 M159 7 L159 54.5 M188.5 7 L188.5 54.5 M227 7 L227 54.5 M263 7 L263 54.5 M300.5 7 L300.5 54.5" stroke="#4040c4" stroke-width="3.6" fill="none"/>
<rect x="5" y="28.2" width="20" height="6.6" fill="#00008c"/>
<path d="M20 18.7 h23" stroke="#4e4a46" stroke-opacity="0.78" stroke-width="6.8" stroke-dasharray="4.6 1.2" fill="none"/>
<path d="M20.5 44.3 h27" stroke="#4e4a46" stroke-opacity="0.68" stroke-width="6.8" stroke-dasharray="2 1 5 1.2 5 1.2" fill="none"/>
<rect x="43.5" y="28.2" width="20" height="6.6" fill="#00008c"/>
<rect x="48.0" y="1.5" width="11" height="12" rx="1.2" fill="#0c0cff"/>
<rect x="48.0" y="48.5" width="11" height="12" rx="1.2" fill="#0c0cff"/>
<path d="M58.5 18.7 h23" stroke="#4e4a46" stroke-opacity="0.78" stroke-width="6.8" stroke-dasharray="4.6 1.2" fill="none"/>
<path d="M59.0 44.3 h27" stroke="#4e4a46" stroke-opacity="0.68" stroke-width="6.8" stroke-dasharray="2 1 5 1.2 5 1.2" fill="none"/>
<rect x="80.5" y="28.2" width="20" height="6.6" fill="#00008c"/>
<rect x="85.0" y="1.5" width="11" height="12" rx="1.2" fill="#0c0cff"/>
<rect x="85.0" y="48.5" width="11" height="12" rx="1.2" fill="#0c0cff"/>
<path d="M95.5 18.7 h23" stroke="#4e4a46" stroke-opacity="0.78" stroke-width="6.8" stroke-dasharray="4.6 1.2" fill="none"/>
<path d="M96.0 44.3 h27" stroke="#4e4a46" stroke-opacity="0.68" stroke-width="6.8" stroke-dasharray="2 1 5 1.2 5 1.2" fill="none"/>
<rect x="118.5" y="28.2" width="20" height="6.6" fill="#00008c"/>
<rect x="123.0" y="1.5" width="11" height="12" rx="1.2" fill="#0c0cff"/>
<rect x="123.0" y="48.5" width="11" height="12" rx="1.2" fill="#0c0cff"/>
<path d="M133.5 18.7 h23" stroke="#4e4a46" stroke-opacity="0.78" stroke-width="6.8" stroke-dasharray="4.6 1.2" fill="none"/>
<path d="M134.0 44.3 h27" stroke="#4e4a46" stroke-opacity="0.68" stroke-width="6.8" stroke-dasharray="2 1 5 1.2 5 1.2" fill="none"/>
<rect x="149" y="28.2" width="20" height="6.6" fill="#00008c"/>
<rect x="153.5" y="1.5" width="11" height="12" rx="1.2" fill="#0c0cff"/>
<rect x="153.5" y="48.5" width="11" height="12" rx="1.2" fill="#0c0cff"/>
<path d="M164 18.7 h23" stroke="#4e4a46" stroke-opacity="0.78" stroke-width="6.8" stroke-dasharray="4.6 1.2" fill="none"/>
<path d="M164.5 44.3 h27" stroke="#4e4a46" stroke-opacity="0.68" stroke-width="6.8" stroke-dasharray="2 1 5 1.2 5 1.2" fill="none"/>
<rect x="178.5" y="28.2" width="20" height="6.6" fill="#00008c"/>
<rect x="183.0" y="1.5" width="11" height="12" rx="1.2" fill="#0c0cff"/>
<rect x="183.0" y="48.5" width="11" height="12" rx="1.2" fill="#0c0cff"/>
<path d="M193.5 18.7 h23" stroke="#4e4a46" stroke-opacity="0.78" stroke-width="6.8" stroke-dasharray="4.6 1.2" fill="none"/>
<path d="M194.0 44.3 h27" stroke="#4e4a46" stroke-opacity="0.68" stroke-width="6.8" stroke-dasharray="2 1 5 1.2 5 1.2" fill="none"/>
<rect x="217" y="28.2" width="20" height="6.6" fill="#00008c"/>
<rect x="221.5" y="1.5" width="11" height="12" rx="1.2" fill="#0c0cff"/>
<rect x="221.5" y="48.5" width="11" height="12" rx="1.2" fill="#0c0cff"/>
<path d="M232 18.7 h23" stroke="#4e4a46" stroke-opacity="0.78" stroke-width="6.8" stroke-dasharray="4.6 1.2" fill="none"/>
<path d="M232.5 44.3 h27" stroke="#4e4a46" stroke-opacity="0.68" stroke-width="6.8" stroke-dasharray="2 1 5 1.2 5 1.2" fill="none"/>
<rect x="253" y="28.2" width="20" height="6.6" fill="#00008c"/>
<rect x="257.5" y="1.5" width="11" height="12" rx="1.2" fill="#0c0cff"/>
<rect x="257.5" y="48.5" width="11" height="12" rx="1.2" fill="#0c0cff"/>
<path d="M268 18.7 h23" stroke="#4e4a46" stroke-opacity="0.78" stroke-width="6.8" stroke-dasharray="4.6 1.2" fill="none"/>
<path d="M268.5 44.3 h27" stroke="#4e4a46" stroke-opacity="0.68" stroke-width="6.8" stroke-dasharray="2 1 5 1.2 5 1.2" fill="none"/>
<rect x="290.5" y="28.2" width="20" height="6.6" fill="#00008c"/>
<rect x="295.0" y="1.5" width="11" height="12" rx="1.2" fill="#0c0cff"/>
<rect x="295.0" y="48.5" width="11" height="12" rx="1.2" fill="#0c0cff"/>
<path d="M305.5 18.7 h23" stroke="#4e4a46" stroke-opacity="0.78" stroke-width="6.8" stroke-dasharray="4.6 1.2" fill="none"/>
<path d="M306.0 44.3 h27" stroke="#4e4a46" stroke-opacity="0.68" stroke-width="6.8" stroke-dasharray="2 1 5 1.2 5 1.2" fill="none"/>
<rect x="321" y="28.2" width="20" height="6.6" fill="#00008c"/>
<path d="M336 18.7 h23" stroke="#4e4a46" stroke-opacity="0.78" stroke-width="6.8" stroke-dasharray="4.6 1.2" fill="none"/>
<path d="M336.5 44.3 h27" stroke="#4e4a46" stroke-opacity="0.68" stroke-width="6.8" stroke-dasharray="2 1 5 1.2 5 1.2" fill="none"/>
</g>
<rect x="2693.1" y="1557.5" width="11" height="12" rx="1.5" fill="#0c0cff"/>
<rect x="2693.1" y="1595.5" width="11" height="12" rx="1.5" fill="#0c0cff"/>
<text x="2763" y="1227" font-size="11" fill="#202020" stroke="#202020" stroke-width="1.0" stroke-opacity="0.8" fill-opacity="0.8" textLength="74" lengthAdjust="spacingAndGlyphs" font-weight="bold">.param C1=100u</text>
<text x="2763" y="1254" font-size="11" fill="#202020" stroke="#202020" stroke-width="1.0" stroke-opacity="0.8" fill-opacity="0.8" textLength="69" lengthAdjust="spacingAndGlyphs" font-weight="bold">.param C1=100u</text>
<text x="2763" y="1279" font-size="11" fill="#202020" stroke="#202020" stroke-width="1.0" stroke-opacity="0.8" fill-opacity="0.8" textLength="69" lengthAdjust="spacingAndGlyphs" font-weight="bold">.param C1=100u</text>
<text x="2763" y="1303.5" font-size="11" fill="#202020" stroke="#202020" stroke-width="1.0" stroke-opacity="0.8" fill-opacity="0.8" textLength="69" lengthAdjust="spacingAndGlyphs" font-weight="bold">.param C1=100u</text>
<text x="2884" y="1227" font-size="11" fill="#202020" stroke="#202020" stroke-width="1.0" stroke-opacity="0.8" fill-opacity="0.8" textLength="69" lengthAdjust="spacingAndGlyphs" font-weight="bold">.param C5=100u</text>
<text x="2884" y="1252" font-size="11" fill="#202020" stroke="#202020" stroke-width="1.0" stroke-opacity="0.8" fill-opacity="0.8" textLength="69" lengthAdjust="spacingAndGlyphs" font-weight="bold">.param C5=100u</text>
<text x="2884" y="1279" font-size="11" fill="#202020" stroke="#202020" stroke-width="1.0" stroke-opacity="0.8" fill-opacity="0.8" textLength="69" lengthAdjust="spacingAndGlyphs" font-weight="bold">.param C5=100u</text>
<text x="2884" y="1303.5" font-size="11" fill="#202020" stroke="#202020" stroke-width="1.0" stroke-opacity="0.8" fill-opacity="0.8" textLength="76" lengthAdjust="spacingAndGlyphs" font-weight="bold">.param C5=100u</text>
<text x="3002" y="1224" font-size="11" fill="#202020" stroke="#202020" stroke-width="1.0" stroke-opacity="0.8" fill-opacity="0.8" textLength="69" lengthAdjust="spacingAndGlyphs" font-weight="bold">.param C9=100u</text>
<text x="3002" y="1252" font-size="11" fill="#202020" stroke="#202020" stroke-width="1.0" stroke-opacity="0.8" fill-opacity="0.8" textLength="69" lengthAdjust="spacingAndGlyphs" font-weight="bold">.param C9=100u</text>
<text x="2767" y="1337" font-size="11" fill="#202020" stroke="#202020" stroke-width="1.0" stroke-opacity="0.75" fill-opacity="0.75" textLength="60" lengthAdjust="spacingAndGlyphs" font-weight="bold">.tran 0 3 0 1m</text>
<text x="2767" y="1365.5" font-size="11" fill="#202020" stroke="#202020" stroke-width="1.0" stroke-opacity="0.7" fill-opacity="0.7" textLength="294" lengthAdjust="spacingAndGlyphs" font-weight="bold">.model MySwitch SW(Ron=.001 Roff=100Meg Vt=.5 Vh=-.4) startup</text>
<text x="2912" y="1448" font-size="11" fill="#202020" stroke="#202020" stroke-width="1.0" stroke-opacity="0.75" fill-opacity="0.75" textLength="86" lengthAdjust="spacingAndGlyphs" font-weight="bold">PWL(0 0 100m 0 101m 5)</text>
<text x="2917" y="1500" font-size="11" fill="#202020" stroke="#202020" stroke-width="1.0" stroke-opacity="0.75" fill-opacity="0.75" textLength="58" lengthAdjust="spacingAndGlyphs" font-weight="bold">.tran 3 startup</text>
<text x="2912" y="1409" font-size="11" fill="#202020" stroke="#202020" stroke-width="1.0" stroke-opacity="0.75" fill-opacity="0.75" textLength="12.5" lengthAdjust="spacingAndGlyphs" font-weight="bold">V1</text>
<text x="2737.5" y="1489.5" font-size="11" fill="#202020" stroke="#202020" stroke-width="1.0" stroke-opacity="0.7" fill-opacity="0.7" textLength="24" lengthAdjust="spacingAndGlyphs" font-weight="bold">Vout</text>
<text x="2789" y="1514.5" font-size="11" fill="#202020" stroke="#202020" stroke-width="1.0" stroke-opacity="0.65" fill-opacity="0.65" textLength="8.5" lengthAdjust="spacingAndGlyphs" font-weight="bold">S1</text>
<text x="2844.5" y="1537" font-size="11" fill="#202020" stroke="#202020" stroke-width="1.0" stroke-opacity="0.7" fill-opacity="0.7" textLength="9" lengthAdjust="spacingAndGlyphs" font-weight="bold">L1</text>
<text x="2842" y="1555.5" font-size="11" fill="#202020" stroke="#202020" stroke-width="1.0" stroke-opacity="0.7" fill-opacity="0.7" textLength="20" lengthAdjust="spacingAndGlyphs" font-weight="bold">100m</text>
<text transform="translate(2761.5,1553) rotate(-90)" font-size="11" fill="#2a2020" stroke="#2a2020" stroke-width="1" stroke-opacity="0.8" fill-opacity="0.85" textLength="50" lengthAdjust="spacingAndGlyphs" font-weight="bold">MySwitch</text>
<text x="2079" y="1290" font-size="66.5" fill="#060606" stroke="#060606" stroke-width="0.9" textLength="490" lengthAdjust="spacingAndGlyphs" >1st Cluster node</text>
<text x="2079" y="1377" font-size="66.5" fill="#060606" stroke="#060606" stroke-width="0.9" textLength="373" lengthAdjust="spacingAndGlyphs" >circuit broke</text>
<path d="M2513.6 1347.8 L2654 1497" stroke="#ff0808" stroke-width="15" fill="none" stroke-linecap="round"/>
<path d="M2673 1517.5 L2662 1465 Q2656 1460.5 2650.5 1463 L2651 1487 L2639.5 1494 L2618.5 1492 Q2614.5 1497 2617.5 1501.5 Z" fill="#ff0808" stroke="#ff0808" stroke-width="2" stroke-linejoin="round"/>
</g>
</svg>
</body></html>
